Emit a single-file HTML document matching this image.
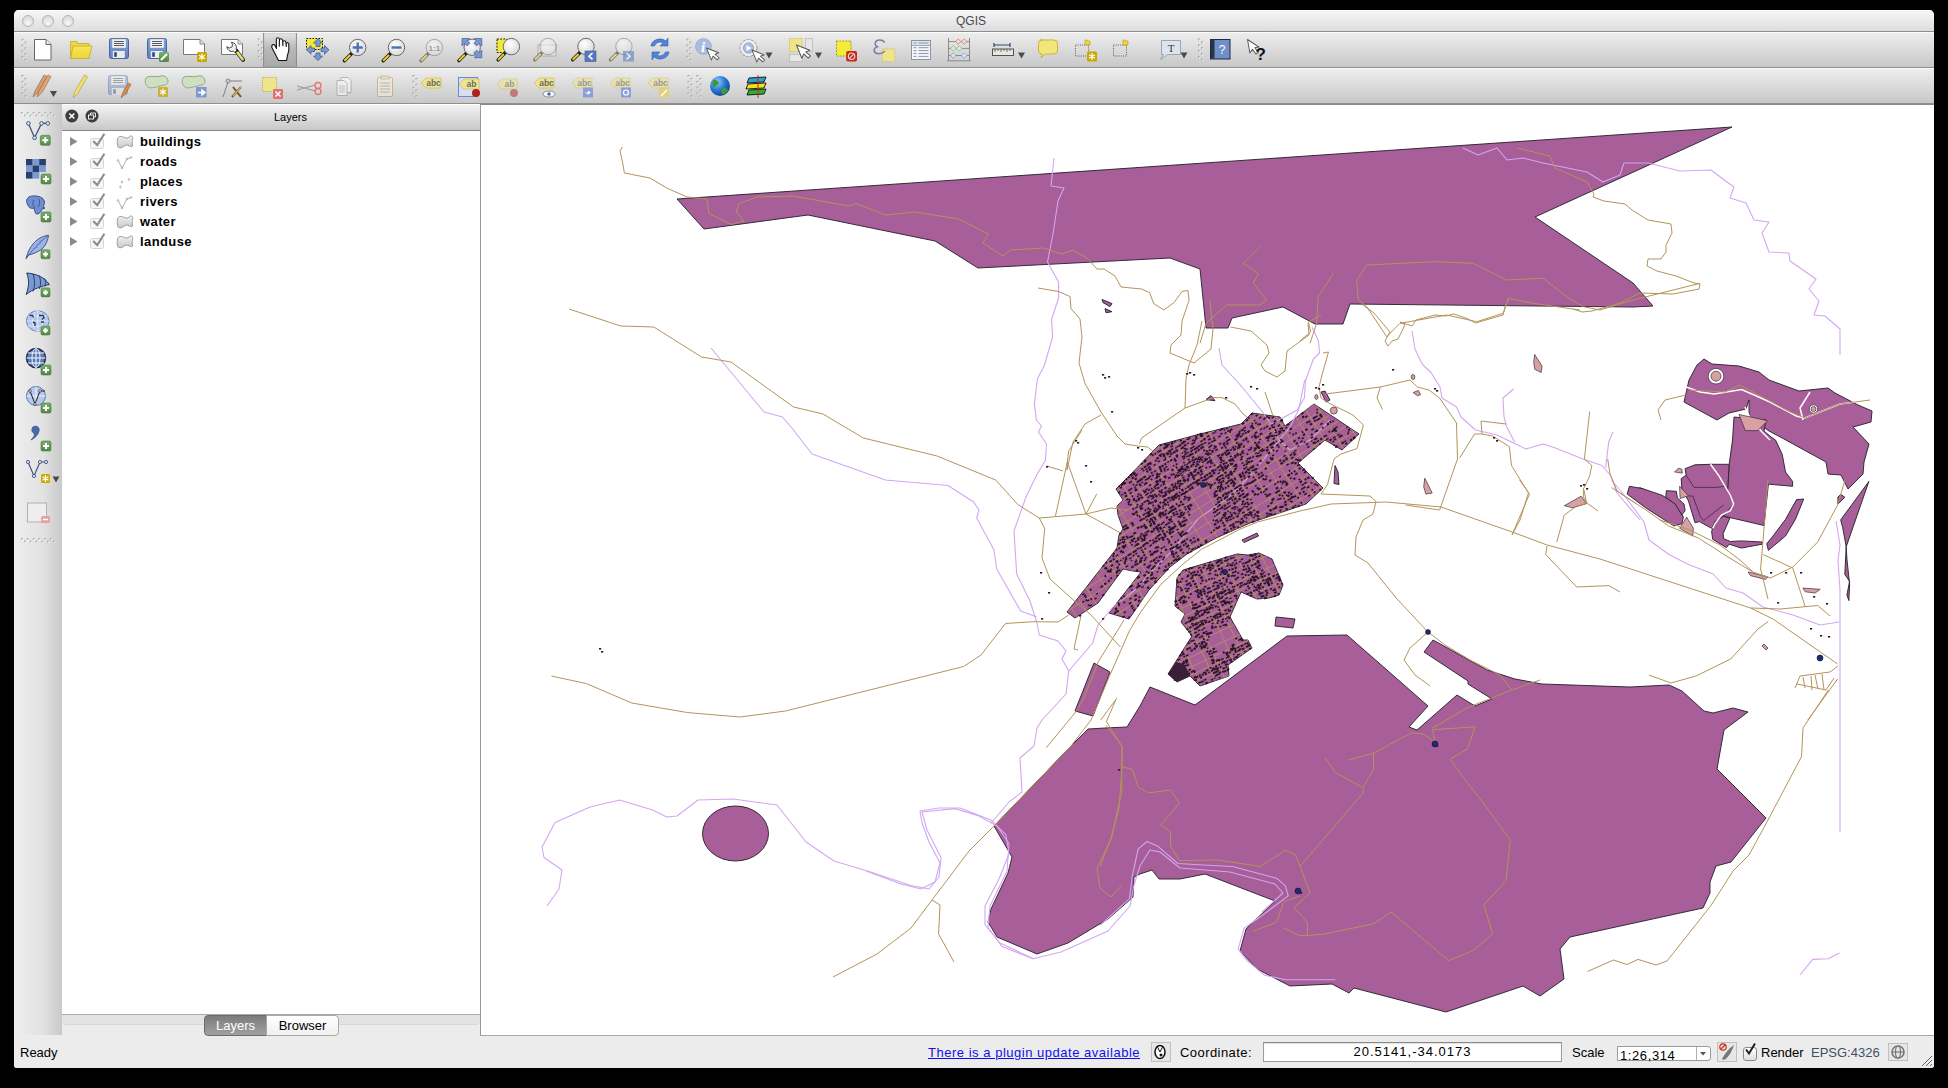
<!DOCTYPE html>
<html><head><meta charset="utf-8">
<style>
*{margin:0;padding:0;box-sizing:border-box}
html,body{width:1948px;height:1088px;background:#000;overflow:hidden;font-family:"Liberation Sans",sans-serif}
.a{position:absolute}
#win{position:absolute;left:14px;top:10px;width:1920px;height:1058px;background:#ececec;border-radius:5px 5px 3px 3px;overflow:hidden}
#title{left:0;top:0;width:1920px;height:22px;background:linear-gradient(#f7f7f7,#dddddd);border-bottom:1px solid #8e8e8e;box-shadow:inset 0 1px 0 #fff}
#title .t{left:0;width:1920px;top:4px;text-align:center;font-size:12px;color:#4a4a4a;padding-right:6px}
.tl{width:12px;height:12px;border-radius:50%;border:1px solid #b3b3b3;background:radial-gradient(circle at 50% 75%,#f7f7f7,#dcdcdc 70%);top:5px}
.tb{left:0;width:1920px;height:36px;background:linear-gradient(#ededed,#c8c8c8);border-top:1px solid #fbfbfb;border-bottom:1px solid #8f8f8f}
#tb1{top:22px}
#tb2{top:58px}
#press{left:249px;top:23px;width:34px;height:34px;background:linear-gradient(#e4e4e4,#b9b9b9 45%,#a9a9a9);box-shadow:inset 1px 0 1px #8a8a8a,inset -1px 0 1px #8a8a8a}
#ltb{left:0;top:94px;width:48px;height:931px;background:linear-gradient(90deg,#eeeeee,#e2e2e2 60%,#c9c9c9)}
#lhdr{left:48px;top:94px;width:419px;height:27px;background:linear-gradient(#f2f2f2,#c8c8c8);border-top:1px solid #fff;border-bottom:1px solid #878787}
#lhdr .t{left:0;width:419px;top:6px;text-align:center;font-size:11px;color:#000;padding-left:38px}
#llist{left:48px;top:121px;width:418px;height:884px;background:#fff;border-bottom:1px solid #ababab}
#ltabbar{left:48px;top:1005px;width:418px;height:10px;background:#e3e3e3;border-radius:0 0 4px 4px;border-bottom:1px solid #d8d8d8}
#map{left:466px;top:94px;width:1454px;height:932px;background:#fff;border-left:1px solid #9a9a9a;border-top:1px solid #8a8a8a;border-bottom:1px solid #a8a8a8}
#status{left:0;top:1026px;width:1920px;height:32px;background:#ececec}
.tx{font-size:13px;font-weight:bold;color:#000;letter-spacing:0.4px;left:125px;margin-top:1px;margin-left:1px}
.st{font-size:13px;color:#000;top:1035px}
.tab{top:1005px;height:21px;font-size:13px;text-align:center;padding-top:1.5px}

</style></head><body>
<div id="win">
  <div id="title" class="a">
    <div class="a tl" style="left:8px"></div>
    <div class="a tl" style="left:28px"></div>
    <div class="a tl" style="left:48px"></div>
    <div class="a t">QGIS</div>
  </div>
  <div id="tb1" class="a tb"></div>
  <div id="tb2" class="a tb"></div>
  <div id="press" class="a"></div>
  <div id="ltb" class="a"></div>
  <div id="lhdr" class="a"><div class="a t">Layers</div></div>
  <div id="llist" class="a">
    <div class="a tx" style="top:2px;left:77px">buildings</div>
    <div class="a tx" style="top:22px;left:77px">roads</div>
    <div class="a tx" style="top:42px;left:77px">places</div>
    <div class="a tx" style="top:62px;left:77px">rivers</div>
    <div class="a tx" style="top:82px;left:77px">water</div>
    <div class="a tx" style="top:102px;left:77px">landuse</div>
  </div>
  <div id="ltabbar" class="a"></div>
  <div class="a tab" style="left:190px;width:63px;background:linear-gradient(#7c7c7c,#a0a0a0);color:#fff;border:1px solid #6a6a6a;border-radius:4px 0 0 4px;top:1005px">Layers</div>
  <div class="a tab" style="left:252px;width:73px;background:linear-gradient(#ffffff,#f0f0f0);color:#000;border:1px solid #a8a8a8;border-radius:0 4px 4px 0;top:1005px">Browser</div>
  <div id="map" class="a"></div>
  <div id="status" class="a"></div>
  <div class="a st" style="left:6px">Ready</div>
  <div class="a st" style="left:914px;color:#1010ee;text-decoration:underline;letter-spacing:0.52px">There is a plugin update available</div>
  <div class="a" style="left:1137px;top:1032px;width:20px;height:20px;border:1px solid #c0c0c0;background:#e6e6e6"></div>
  <div class="a st" style="left:1166px;letter-spacing:0.44px">Coordinate:</div>
  <div class="a" style="left:1249px;top:1032px;width:299px;height:20px;border:1px solid #9a9a9a;border-top-color:#888;background:#fff;box-shadow:inset 0 1px 1px rgba(0,0,0,.12)"></div>
  <div class="a st" style="left:1249px;width:299px;text-align:center;letter-spacing:1px;top:1034px">20.5141,-34.0173</div>
  <div class="a st" style="left:1558px">Scale</div>
  <div class="a" style="left:1603px;top:1036px;width:94px;height:15px;border:1px solid #9a9a9a;border-radius:0 3px 3px 0;background:#fff"></div>
  <div class="a" style="left:1682px;top:1037px;width:1px;height:13px;background:#b0b0b0"></div>
  <div class="a st" style="left:1606px;top:1038px;letter-spacing:0.6px">1:26,314</div>
  <div class="a" style="left:1703px;top:1032px;width:20px;height:20px;border:1px solid #c0c0c0;background:#e6e6e6"></div>
  <div class="a" style="left:1729px;top:1037px;width:14px;height:14px;border:1px solid #8a8a8a;border-radius:3px;background:linear-gradient(#fff,#e0e0e0)"></div>
  <div class="a st" style="left:1747px">Render</div>
  <div class="a st" style="left:1797px;color:#3e5068">EPSG:4326</div>
  <div class="a" style="left:1874px;top:1033px;width:20px;height:18px;border:1px solid #c0c0c0;background:#e6e6e6"></div>
</div>

<svg class="a" style="left:0;top:0" width="1948" height="1088" viewBox="0 0 1948 1088">
<defs><clipPath id="mc"><rect x="481" y="105" width="1452" height="930"/></clipPath></defs>
<g clip-path="url(#mc)">
<g fill="#a75e99" stroke="#2b2530" stroke-width="0.95" stroke-linejoin="round"><polygon points="677,199 1732,127 1535,217 1633,283 1653,306 1633,307 1350,304 1343,324 1315,324 1283,307 1232,318 1228,328 1206,328 1200,269 1170,258 978,268 935,241 808,215 704,229"/><polygon points="1287,636 1347,635 1428,706 1409,727 1417,730 1457,695 1475,706 1492,699 1468,684 1468,681 1424,652 1433,640 1460,655 1487,670 1515,679 1542,684 1630,687 1669,685 1682,691 1704,711 1713,713 1733,708 1748,712 1724,730 1717,769 1766,818 1731,862 1716,866 1710,882 1710,893 1703,908 1570,937 1560,949 1564,979 1540,996 1523,986 1446,1012 1354,988 1349,993 1332,984 1290,986 1257,969 1240,951 1246,929 1275,901 1205,874 1180,879 1159,879 1152,870 1140,874 1134,877 1133,897 1108,919 1068,943 1037,954 997,937 988,922 991,909 1008,873 1012,857 994,826 1071,746 1088,729 1105,728 1127,727 1140,706 1150,687 1195,705"/><polygon points="1067,612 1075,618 1098,603 1123,569 1133,571 1141,572 1109,613 1129,619 1149,590 1170,567 1187,554 1216,538 1250,523 1306,504 1323,488 1298,463 1325,440 1342,450 1359,434 1314,404 1285,426 1280,417 1252,413 1241,424 1200,434 1159,445 1131,474 1128,477 1116,489 1123,500 1117,506 1118,515 1123,529 1119,535 1117,548"/><polygon points="1183,570 1237,554 1248,555 1259,553 1272,559 1283,585 1279,595 1269,598 1257,599 1241,592 1230,617 1243,640 1248,640 1252,648 1228,665 1229,676 1200,686 1190,676 1177,682 1168,674 1192,636 1181,622 1185,614 1175,606 1177,578"/><polygon points="1276,617 1295,619 1293,628 1275,626"/><polygon points="1094,663 1110,672 1093,716 1075,711"/><polygon points="1102,299.5 1112,303.6 1110,306.6 1103,302.6"/><polygon points="1105,308.6 1112,311.7 1106,312.7"/><polygon points="1206,399.6 1211,395.6 1215,400.7"/><polygon points="1335,465.5 1338,471.9 1339,484.5 1334,483.5"/><polygon points="1628,493 1640,487.7 1650,492 1645,503.6"/><polygon points="1242,540 1257,533 1258.5,536 1244,542.5"/><polygon points="1321,392 1325,391 1330,400 1326,402"/><polygon points="1704,359 1712,364 1739,366 1759,372 1769,380 1799,391 1828,388 1835,393 1858,405 1872,411 1871,422 1853,427 1869,444 1864,462 1863,474 1848,489 1841,475 1828,474 1826,462 1784,439 1769,431 1749,417 1749,400 1746,409 1729,413 1717,420 1684,402 1689,380 1697,365"/><polygon points="1734,417 1766,420 1764,431 1771,437 1775.5,440 1782.2,454.3 1785.5,472 1792.6,481.4 1792.6,486.3 1768.4,484.1 1764,525.5 1723.7,516.1 1727.6,490.2 1729.2,464.3 1732.5,440"/><polygon points="1629.4,486.3 1642.1,488.5 1661.9,495.2 1676.3,504 1683.4,517.2 1681.8,523.8 1674.1,526 1661.9,518.3 1646.5,508.4 1627.2,494.1"/><polygon points="1666.3,490.7 1676.3,491.3 1677.4,497.9 1684,504 1685.1,510.6 1681.8,515 1675.2,504 1665.8,497.4"/><polygon points="1685.1,468.7 1695,464.8 1710.5,464.3 1729.2,464.3 1727.6,490.2 1733.6,504 1723.7,516.1 1716,520.5 1711.6,528.3 1699.4,521.6 1695,522.7 1688.4,500.7 1681.8,488.5 1681.2,478.6 1686.2,475.3"/><polygon points="1723.7,516.1 1729.8,518.3 1723.1,533.8 1723.7,538.7 1730.3,541.5 1741.3,540.9 1762.3,542 1762.3,544.2 1741.3,548.1 1729.2,544.2 1726.5,547.6 1712.7,539.3 1711.6,531.6 1714.9,521.6"/><polygon points="1803.7,499 1796.5,499.6 1785.5,519.4 1772.2,537.1 1766.7,543.7 1768.4,550.3 1785.5,536 1795.4,519.4"/><polygon points="1868.9,481.4 1840.7,519.9 1842.7,527.5 1846.2,546.8"/><polygon points="1846.2,546.8 1844.8,574.4 1849.6,581.3 1846.9,595 1848.9,600.6 1849.6,584 1847,560"/><polygon points="1840.7,494.4 1844.8,497.2 1837.9,504.1 1838,497"/><ellipse cx="735.5" cy="833.5" rx="33" ry="27.5"/></g>
<g fill="none" stroke="#fff" stroke-width="1.5"><path d="M1685.6,386.8 L1700,392 L1714.1,394.1 L1741.7,389.5 L1770,402 L1796.8,416.2 L1805,418 L1840,404 L1870,400"/><path d="M1810,392 L1800,408 L1803,420"/><path d="M1710.5,464.3 L1719.3,476.4 L1730.3,495.2 L1733.6,504 L1730.3,510.6 L1721.5,515 L1714.9,523.8 L1712.7,528.3"/><path d="M1686,405 L1692,412 L1700,420"/><path d="M1745,407 L1750,418 L1762,432 L1770,440"/></g><g fill="none" stroke="#3a2e3c" stroke-width="0.8"><path d="M1686.2,475.3 L1694,487.4 L1717,487.4 L1724.2,486.3"/><path d="M1688.4,496 L1692.8,496 L1700.5,517 L1703.8,520.5 L1723.7,505"/></g>
<g fill="#d9a0a4" stroke="#3a2e3c" stroke-width="0.7"><polygon points="1534.7,354.5 1542.1,366.1 1541.1,372.5 1534.7,369.3 1533.7,361.9"/><polygon points="1424.8,478.2 1432.2,493 1425.8,494.1 1423.7,486.7"/><polygon points="1413.1,392.6 1418.4,390.4 1420.5,394.7 1417.4,395.7"/><polygon points="1564.3,505.7 1581.2,496.2 1586.5,503.6 1572.8,507.8"/><polygon points="1739,414.5 1767.6,420.7 1757.7,430.6 1745.3,430.6"/><polygon points="1679.6,486.3 1688.4,495.7 1680.1,498.5"/><polygon points="1686.7,517.2 1693.4,528.3 1692.8,536 1679.6,528.3"/><polygon points="1674.6,472 1678.5,468.1 1681.8,469.2 1682.3,473.1"/><polygon points="1748.1,571.9 1768,576.9 1765.5,579.4 1750.6,575.7"/><polygon points="1802.8,588.1 1820.2,589.3 1815.2,593 1805.3,591.8"/><polygon points="1764,644 1768,648 1766,650 1762,646"/><circle cx="1333.8" cy="410.5" r="3.5"/><ellipse cx="1413" cy="377" rx="1.8" ry="2.5"/><ellipse cx="1316.4" cy="397" rx="1.6" ry="2.4"/><circle cx="1716" cy="376.2" r="7.8" fill="#fff"/><circle cx="1716" cy="376.2" r="5"/><circle cx="1813.5" cy="409" r="4.2" fill="#fff"/><circle cx="1813.5" cy="409" r="2.5"/></g>
<g fill="none" stroke="#d3a6f2" stroke-width="1.1" stroke-linejoin="round"><polyline points="1463,148 1478,155 1497,148 1507,160 1523,158 1543,163 1587,172 1603,182 1620,175 1624,163 1648,163 1680,171 1711,170 1727,182 1734,187 1730,198 1746,203 1754,220 1769,222 1762,233 1769,252 1789,253 1790,261 1816,279 1809,289 1819,301 1814,315 1825,316 1840,329 1840,355"/><polyline points="1054,158 1051,186 1064,188 1058,201 1053,234 1047.5,262 1058.6,282 1058.6,298 1051.6,319 1052.6,337 1044.5,365 1037.4,379 1034.4,404 1036.4,420 1041.5,426 1038.4,432 1046.5,444 1045.5,460 1036.7,475 1026,497 1014,531 1016.7,574 1030,601 1036.7,622 1039.3,635 1058,641 1066,651 1062,659 1068.7,671 1066,694 1042,720 1037,728 1034,746 1020,758 1022,792 1009,802 991,823"/><polyline points="711,348 764,412 782.5,417 793.5,430 812,454 848.6,467 885.4,480 948,485.5 973.6,502 979,510 976.7,518 994,550 996.7,569 1020.7,611 1036.7,617"/><polyline points="547,906 559,889 562,870 544,857.5 542,847 555,822.6 590,807 619.5,800 652.7,810 666.7,817 677,816 698,800 733,799 777,805 806,842 834,861 869,871.5 911,885.5 929,889 939,877 941,857.5 927,830 922,812 955,808.6 978,815.6 997,826 1009,843.5 1007,871.5 990,906 988,927 1002,946.6 1033,958.8 1061,952 1108,931 1130,906 1134,885 1140,866"/><polyline points="866,871 901,884 921,889 935,882 940,863 929,842 922,823 920,811 939,808 960,808 991,820 1006,835 1009,854 999,879 985,906 985,925 1000,943 1034,959"/><polyline points="1412,331 1415,349 1422,364 1431,372.5 1440,387 1442,398 1456.5,407 1461,417 1475.5,430 1497,435 1511.5,442 1526,449 1543,444 1554,447.5 1583,459 1602,465.5 1611,476 1617,493 1640,520"/><polyline points="1611.5,480 1624,495 1644,522 1649,540 1669,554.5 1688.5,564.5 1713,574 1726,588 1743,593 1763,607 1793,615 1820,625 1839,622"/><polyline points="1219,348 1222,365 1239,383.5 1261,410 1271,424 1279,440 1290,450 1310,440 1330,420"/><polyline points="1312,327 1318.5,341 1319.5,353 1313.4,359 1305.4,381 1304.4,398 1297.3,410 1270,425"/><polyline points="1513.6,389 1503,398 1504,417 1507,427.5 1514.6,442"/><polyline points="1613,432 1608.7,442 1605.6,467.6"/><polyline points="1800,975 1812.6,959.4 1828.4,958.8 1839.5,953"/><polyline points="1836,521 1840,545 1838,560 1840,590 1840,832"/><polyline points="1100,925.3 1129.4,898.8 1132.4,875.3 1138.2,848.8 1147,841.5 1157.4,845.9 1177.9,863.5 1202.9,865 1232.4,866.5 1276.5,878.2 1285.3,885.6 1288.2,895.9 1264.7,913.5 1244.1,928.2 1238.2,948.8 1247.1,960.6 1264.7,975.3 1285.3,979.7 1335.3,979.7"/><polyline points="1140,866 1150,850 1160,852 1180,868 1230,872 1275,884 1283,893 1262,912"/><polyline points="1068.7,671 1092.7,643 1098,625 1113.6,606.5 1135,590 1154.7,568.2 1172.4,550.6 1198.8,518.2 1228.3,497.6 1245.9,480 1263.6,459.4 1290,427.1 1298.8,409.4 1304.7,380"/></g>
<g fill="none" stroke="#b39459" stroke-width="1" stroke-linejoin="round"><polyline points="622.5,147 620,151 622.5,162 624.4,173 650,178 666.7,188 687,197 707,199 709,213.5 731,224.5 744,221 736.5,212 738.4,204 756.7,197 793.5,196 848.6,206 856,203.5 885.4,215 914.8,212 959,219 988.4,234 982.8,243 1003,256 1010.4,250 1043.5,248 1062,254 1072.8,250 1087,258 1097,269 1104,269 1115,276 1121,287 1141.6,289 1149.6,292.5 1153.7,303.6 1163.8,310 1174,302.6 1182,291.5 1188,290.4 1189,300.6 1182,321 1181,335 1171,345 1170,353 1194,363 1211,349 1213,329 1212,321 1210,300"/><polyline points="1356.7,280 1366.7,265 1433.3,261.7 1473.3,263.3 1506.7,280 1543.3,278.3 1566.7,296.7 1583.3,306.7 1600,310 1633.3,300 1700,283.3"/><polyline points="1356.7,280 1358.3,300 1366.7,306.7 1386.7,336.7 1400,323.3 1446.7,315 1476.7,321.7 1503.3,313.3 1508.3,298.3 1533.3,303.3 1580,310"/><polyline points="1260,246.7 1243.3,263.3 1258.3,273.3 1253.3,283.3 1266.7,300 1260,305 1226.7,305 1206,323.3 1200,343.3"/><polyline points="1333.3,273.3 1318.3,296.7 1316.7,323.3 1310,343.3"/><polyline points="1517,148 1549.9,156 1552,161 1555,168 1587,182 1594,194 1593,197 1604,201 1625,204 1632,210 1648,220 1671,224 1672,233 1666,245 1666,252 1661,259 1648,259 1647,266 1657,271 1676,276 1694,283 1700,284 1699,289 1673,294 1640,293 1620,303 1592,311 1582,312 1573,309"/><polyline points="1428,632 1445,645 1470,660 1500,675 1512,690"/><polyline points="1428,632 1410,648 1404,660 1415,675 1430,686"/><polyline points="1795,688 1800,676 1830,672 1838,666"/><polyline points="1797,684 1826,690 1834,678"/><polyline points="1803,677 1805,688"/><polyline points="1811,676 1812,690"/><polyline points="1815,675 1818,689"/><polyline points="1822,674 1824,690"/><polyline points="569,309 620.7,326 653.8,327 701.6,357 731,362 793.5,407 823,414 863.4,438 937,456 995.7,480 1018,504.7 1039.3,518 1044.7,528.7 1042,558 1050,579 1074,600.7 1090,614 1116.7,643 1120.5,647"/><polyline points="551.4,676 586.4,683.6 631.8,703 687.7,712.6 740,717 785.5,711 963.6,666.5 981,655 1005.5,623.5 1033.4,621.7 1058,622 1068.7,615"/><polyline points="833,977 877,954 911,928 932,900 969,851 994,826 1071,746 1091,720 1109.4,676.3 1129.7,630.3 1140.7,612 1160.9,584.4 1183,564.1 1201.4,549.4 1240,529.2 1257.4,522 1300,511 1331,504 1386,502 1441,507 1515,533 1547,545 1600,559 1750.6,608 1773,619 1837.6,664"/><polyline points="932,900 940,905 938.6,934 954,962"/><polyline points="1046.4,747.7 1075.6,712 1083,700 1091,680 1098.4,661.6 1124,620"/><polyline points="1115.7,700 1106.4,721.6 1121.8,746 1121.8,792 1111,838.6 1097,868 1100,888 1111,897 1122,885"/><polyline points="1100.7,720 1117,698"/><polyline points="1038,288 1058.6,291.5 1070,296.5 1071,308.6 1080,319 1082,337 1079,363 1085,383.5 1101,412 1117,436 1125,444 1137.5,446 1147.6,447 1154,452 1160,445"/><polyline points="1202,321 1197,345 1189,365 1186,379 1185,408 1214,397.6 1222,397.6 1235,404 1243,414 1247,417"/><polyline points="1185,408 1141.6,438 1139.5,444"/><polyline points="1101,415 1085,424 1073,442 1067,470 1067.3,462 1068.7,451 1082,430"/><polyline points="1039.3,518 1055.3,516.7 1086,514 1111.3,508 1127.3,510"/><polyline points="1055.3,516.7 1067.3,462"/><polyline points="1067.3,462 1086,514 1127.3,536.7"/><polyline points="1086,514 1096.7,494"/><polyline points="1047,466 1063,471"/><polyline points="1080.7,617 1074,649 1078,650"/><polyline points="1230.5,327 1251,331 1267,345 1269,353 1261,365 1265,371 1277,377 1285,371 1287,351 1309,335 1308,323"/><polyline points="1265,392 1271,410 1273,416"/><polyline points="1363,305 1374,313 1390,332 1385,341 1388,346 1392,341 1398,339 1405,325 1400,322 1412,326 1416,320 1435,315 1446,316 1454,314 1467,318.5 1475.5,323 1503,315 1505,307 1509,298"/><polyline points="1300,341 1310.6,332 1308.5,322 1321,315"/><polyline points="1325.4,394 1380.4,387 1410,380 1417.4,387 1429,390 1439.6,398 1456.5,423 1457.5,459 1439.6,510 1405.7,505"/><polyline points="1380.4,387 1377,398 1382.5,409.5"/><polyline points="1459.7,458 1474.5,434 1482,434 1481,421 1506,424"/><polyline points="1482,434 1492.4,436 1509.3,446.5 1511.5,465.5 1528.4,493 1520,520 1512,535"/><polyline points="1589.7,411.6 1584.4,459 1591.8,465.5 1589.7,476 1583.4,489 1583.4,497 1587.6,503.6 1598,511"/><polyline points="1607.7,459 1610,474 1617,491 1636,503.6"/><polyline points="1323,353 1328.5,352 1322,375 1319,387 1321,398 1330.7,404 1353,415 1363.4,425 1357,448.6 1341,454 1334,459 1327.5,484.5 1321,494 1370,496 1376,501.5 1373,514 1363,520 1356,537 1355,555 1368,563 1397,599 1428,632"/><polyline points="1512,535 1529.5,494 1519.6,480"/><polyline points="1556.8,542 1564.3,515 1576.7,506 1586.6,503.6 1584,490"/><polyline points="1547,546 1545.7,554.5 1576.7,587 1609,585.6 1620,592"/><polyline points="1611.5,487.5 1646,510 1668.6,526 1698.4,538 1728,557 1753,572 1770.5,578 1792.8,567 1817.7,542 1837.6,505 1845,480"/><polyline points="1768,480 1760.6,569 1768,599"/><polyline points="1763,554.5 1792.8,568 1805.3,607"/><polyline points="1750.6,608 1780.4,609 1817.7,605.5 1830,616"/><polyline points="1648.8,675 1671,683 1696,676 1730.7,659 1758,629 1768,621.6"/><polyline points="1807.8,720 1837.6,679"/><polyline points="1828.4,690 1803,728 1801.5,756.6 1768,820 1749,855 1733,871 1711,905.5 1686,937 1667,961 1656,965 1638,959.4 1627,964.5 1613.5,960 1587.5,971.5"/><polyline points="1690,390 1725,392 1740,385 1790,412 1805,418 1840,404 1870,400"/><polyline points="1661,420 1658,410 1665,400 1686,395"/><polyline points="1660,520 1690,530 1720,545 1740,560 1753,572"/><polyline points="1105.9,725.3 1122,745.9 1122,766.5 1119.1,807.6 1111.8,837.1 1100,866.5"/><polyline points="1120.6,766.5 1132.4,769.4 1138.2,787.1 1148.5,792.9 1170.6,790 1179.4,803.2 1160.3,825.3 1170.6,831.2 1170.6,845.9 1179.4,860.6 1217.6,860 1260.3,866.5 1285.3,850.3 1295.6,854.7 1300,866.5 1310.3,892.9 1294.1,907.6 1307.4,922.4 1307.4,935.6 1323.5,934.1 1373.5,923.8 1391.2,912.1 1448.5,960.6 1473.5,950.3 1492.6,934.1 1483.8,904.7 1505.9,881.2 1510.3,840 1482.4,801.8 1466.2,781.2 1450,759.1 1467.6,748.8 1475,726.8 1432.4,729.7 1435.3,742.9"/><polyline points="1300,866.5 1363.2,792.9 1363.2,787.1 1373.5,769.4 1373.5,753.2 1411.8,732.6 1423.5,734.1 1432.4,740"/><polyline points="1348.5,760 1373.5,753.2"/><polyline points="1325,757.6 1335.3,772.4 1361.8,787.1"/><polyline points="1432.4,728.2 1467.6,707.6 1511.8,690 1540,680"/><polyline points="1252.9,931.2 1276.5,922.4 1283.8,901.8 1300,895.9"/><polyline points="1283.8,928.2 1300,935.6 1307.4,935.6"/></g>
<clipPath id="tn"><polygon points="1067.0,612.0 1075.0,618.0 1098.0,603.0 1123.0,569.0 1133.0,571.0 1141.0,572.0 1109.0,613.0 1129.0,619.0 1149.0,590.0 1170.0,567.0 1187.0,554.0 1216.0,538.0 1250.0,523.0 1306.0,504.0 1323.0,488.0 1298.0,463.0 1325.0,440.0 1342.0,450.0 1359.0,434.0 1314.0,404.0 1285.0,426.0 1280.0,417.0 1252.0,413.0 1241.0,424.0 1200.0,434.0 1159.0,445.0 1131.0,474.0 1128.0,477.0 1116.0,489.0 1123.0,500.0 1117.0,506.0 1118.0,515.0 1123.0,529.0 1119.0,535.0 1117.0,548.0"/></clipPath><g clip-path="url(#tn)"><path d="M815.8,427.0L1311.1,117.5M822.3,437.3L1317.6,127.9M828.7,447.5L1324.0,138.1M834.2,456.3L1329.5,146.8M840.3,466.2L1335.6,156.7M847.4,477.4L1342.6,167.9M852.2,485.1L1347.5,175.7M857.9,494.2L1353.1,184.8M864.7,505.1L1360.0,195.7M871.9,516.7L1367.2,207.3M877.4,525.5L1372.7,216.1M884.2,536.3L1379.5,226.9M891.4,547.8L1386.6,238.3M897.8,558.1L1393.1,248.6M903.0,566.5L1398.3,257.0M908.0,574.4L1403.3,265.0M914.7,585.2L1410.0,275.7M919.2,592.4L1414.5,282.9M924.6,601.0L1419.9,291.6M929.3,608.5L1424.5,299.0M935.2,617.9L1430.4,308.4M940.6,626.7L1435.9,317.2M945.7,634.8L1441.0,325.3M950.5,642.4L1445.7,332.9M954.8,649.4L1450.1,339.9M959.9,657.5L1455.2,348.1M964.4,664.7L1459.7,355.2M969.1,672.2L1464.4,362.7M975.3,682.1L1470.5,372.6M979.8,689.4L1475.1,379.9M984.5,696.8L1479.8,387.4M990.8,707.0L1486.1,397.5M995.6,714.6L1490.9,405.2M1000.2,722.0L1495.5,412.6M1006.7,732.4L1502.0,422.9M1011.3,739.7L1506.6,430.3M1017.7,750.0L1513.0,440.5M1024.8,761.3L1520.0,451.8M1031.7,772.3L1526.9,462.8M1036.7,780.4L1532.0,470.9M1042.7,790.0L1537.9,480.5M1048.6,799.5L1543.9,490.0M1055.2,810.0L1550.5,500.6M1062.3,821.4L1557.6,511.9M1068.8,831.8L1564.1,522.3M1073.6,839.4L1568.8,529.9M1079.4,848.7L1574.7,539.3M1084.5,856.9L1579.8,547.4M1089.2,864.4L1584.5,554.9M1094.4,872.7L1589.7,563.2M1099.2,880.4L1594.5,571.0M1105.0,889.8L1600.3,580.3M1110.4,898.3L1605.7,588.8M1114.9,905.6L1610.2,596.1M1120.1,913.8L1615.3,604.3M1124.8,921.3L1620.0,611.9M821.6,411.8L1131.0,907.0M832.1,405.2L1141.5,900.5M843.3,398.2L1152.8,893.4M856.2,390.1L1165.7,885.4M865.7,384.2L1175.2,879.4M878.7,376.1L1188.2,871.3M890.5,368.7L1200.0,863.9M904.0,360.3L1213.5,855.5M913.0,354.6L1222.5,849.9M922.4,348.8L1231.8,844.1M932.7,342.3L1242.2,837.6M946.8,333.5L1256.3,828.8M960.2,325.2L1269.6,820.4M969.3,319.5L1278.7,814.7M982.6,311.2L1292.1,806.4M991.7,305.5L1301.2,800.7M1005.0,297.1L1314.5,792.4M1015.4,290.7L1324.9,785.9M1026.7,283.6L1336.2,778.9M1037.4,276.9L1346.9,772.2M1049.8,269.1L1359.3,764.4M1062.2,261.4L1371.6,756.7M1071.1,255.8L1380.6,751.1M1082.2,248.9L1391.6,744.2M1091.0,243.4L1400.5,738.7M1104.3,235.1L1413.8,730.3M1117.4,226.9L1426.9,722.2M1126.9,221.0L1436.4,716.2M1137.2,214.5L1446.7,709.8M1146.3,208.8L1455.8,704.1M1160.4,200.1L1469.9,695.3M1170.8,193.5L1480.3,688.8M1180.4,187.5L1489.9,682.8M1195.0,178.5L1504.4,673.7M1205.1,172.1L1514.6,667.4M1216.1,165.2L1525.6,660.5M1230.0,156.6L1539.5,651.8M1240.5,150.0L1550.0,645.3M1250.0,144.1L1559.5,639.3M1261.5,136.9L1571.0,632.1M1274.6,128.7L1584.1,623.9M1284.7,122.4L1594.2,617.6M1294.2,116.5L1603.6,611.7M1305.5,109.4L1615.0,604.6M1316.4,102.5L1625.9,597.8" fill="none" stroke="#b39459" stroke-width="0.9"/></g><path fill="#2b1629" d="M1149.3 454.3l2.4 -1.5l0.9 1.4l-2.4 1.5zM1159.3 445.2l1.7 -1.1l0.9 1.4l-1.7 1.1zM1165.9 444.6l2.0 -1.2l0.9 1.4l-2.0 1.2zM1120.3 484.3l2.4 -1.5l0.8 1.2l-2.4 1.5zM1127.7 476.9l1.5 -0.9l0.9 1.5l-1.5 0.9zM1129.6 474.5l2.1 -1.3l0.9 1.4l-2.1 1.3zM1132.8 473.7l2.4 -1.5l1.0 1.7l-2.4 1.5zM1134.5 475.5l1.6 -1.0l1.0 1.6l-1.6 1.0zM1140.6 468.8l2.2 -1.4l0.8 1.3l-2.2 1.4zM1143.6 466.7l1.9 -1.2l1.0 1.6l-1.9 1.2zM1145.2 468.9l1.7 -1.1l0.9 1.5l-1.7 1.1zM1143.4 460.4l2.2 -1.4l0.9 1.4l-2.2 1.4zM1146.4 465.0l2.1 -1.3l0.9 1.4l-2.1 1.3zM1148.9 462.8l1.8 -1.1l1.0 1.6l-1.8 1.1zM1151.7 454.9l1.6 -1.0l0.9 1.4l-1.6 1.0zM1154.2 453.6l1.6 -1.0l0.8 1.3l-1.6 1.0zM1157.0 451.4l1.5 -0.9l1.0 1.6l-1.5 0.9zM1159.8 455.9l1.5 -0.9l0.8 1.3l-1.5 0.9zM1162.7 454.0l1.6 -1.0l0.9 1.5l-1.6 1.0zM1164.9 446.0l1.9 -1.2l0.8 1.3l-1.9 1.2zM1163.6 444.0l2.1 -1.3l1.0 1.6l-2.1 1.3zM1167.7 450.9l2.3 -1.4l0.9 1.5l-2.3 1.4zM1169.6 453.9l2.3 -1.4l0.9 1.4l-2.3 1.4zM1167.4 444.4l2.0 -1.2l0.9 1.4l-2.0 1.2zM1170.3 449.3l2.2 -1.4l0.9 1.5l-2.2 1.4zM1172.4 452.7l2.2 -1.4l0.7 1.1l-2.2 1.4zM1170.6 443.3l1.9 -1.2l1.1 1.7l-1.9 1.2zM1174.8 450.4l2.3 -1.5l0.8 1.2l-2.3 1.5zM1173.6 441.6l1.6 -1.0l0.8 1.3l-1.6 1.0zM1176.4 446.6l2.1 -1.3l0.7 1.2l-2.1 1.3zM1179.2 445.1l1.6 -1.0l0.7 1.1l-1.6 1.0zM1180.9 443.1l2.3 -1.5l1.0 1.6l-2.3 1.5zM1184.3 441.5l1.4 -0.9l0.7 1.2l-1.4 0.9zM1186.1 439.4l1.7 -1.1l0.7 1.2l-1.7 1.1zM1199.4 435.5l1.5 -0.9l0.9 1.5l-1.5 0.9zM1117.8 492.4l2.1 -1.3l0.8 1.3l-2.1 1.3zM1118.1 486.1l1.4 -0.9l0.8 1.3l-1.4 0.9zM1120.4 484.6l2.4 -1.5l1.0 1.6l-2.4 1.5zM1123.2 483.6l2.3 -1.5l0.8 1.4l-2.3 1.5zM1125.0 479.1l1.8 -1.1l0.9 1.5l-1.8 1.1zM1133.9 487.0l1.7 -1.1l0.8 1.2l-1.7 1.1zM1131.3 477.8l2.2 -1.3l1.0 1.6l-2.2 1.3zM1130.3 475.6l1.7 -1.0l0.8 1.3l-1.7 1.0zM1137.2 480.9l2.4 -1.5l1.1 1.7l-2.4 1.5zM1140.0 479.0l2.1 -1.3l1.1 1.7l-2.1 1.3zM1142.4 477.3l2.5 -1.6l0.8 1.2l-2.5 1.6zM1142.3 470.3l1.5 -1.0l1.0 1.5l-1.5 1.0zM1146.8 478.6l2.4 -1.5l0.8 1.3l-2.4 1.5zM1143.7 467.0l2.4 -1.5l0.7 1.2l-2.4 1.5zM1147.6 467.4l2.2 -1.4l1.1 1.7l-2.2 1.4zM1149.1 463.6l1.9 -1.2l1.0 1.6l-1.9 1.2zM1153.7 471.2l2.1 -1.3l0.7 1.2l-2.1 1.3zM1153.3 464.8l1.8 -1.1l0.9 1.5l-1.8 1.1zM1154.5 460.7l2.0 -1.3l0.7 1.2l-2.0 1.3zM1158.4 466.8l1.9 -1.2l1.0 1.6l-1.9 1.2zM1161.0 465.8l2.1 -1.3l1.1 1.7l-2.1 1.3zM1163.1 468.6l1.6 -1.0l0.9 1.4l-1.6 1.0zM1163.9 463.7l1.6 -1.0l1.1 1.7l-1.6 1.0zM1164.3 457.4l1.5 -0.9l0.8 1.2l-1.5 0.9zM1162.3 455.4l2.5 -1.6l0.9 1.4l-2.5 1.6zM1166.8 461.9l2.0 -1.2l0.8 1.2l-2.0 1.2zM1165.5 453.3l1.9 -1.2l1.0 1.6l-1.9 1.2zM1169.6 460.2l2.3 -1.4l0.9 1.5l-2.3 1.4zM1170.1 453.5l1.5 -0.9l0.9 1.4l-1.5 0.9zM1168.6 451.6l1.9 -1.2l1.0 1.6l-1.9 1.2zM1173.2 458.9l1.8 -1.1l1.0 1.7l-1.8 1.1zM1174.2 460.5l1.8 -1.1l1.1 1.7l-1.8 1.1zM1172.7 452.1l2.1 -1.3l1.1 1.7l-2.1 1.3zM1175.9 456.6l1.6 -1.0l0.9 1.4l-1.6 1.0zM1175.8 450.5l1.5 -0.9l1.1 1.7l-1.5 0.9zM1181.2 452.9l1.6 -1.0l0.7 1.2l-1.6 1.0zM1183.0 456.3l2.1 -1.3l0.8 1.3l-2.1 1.3zM1181.1 447.5l2.2 -1.4l0.9 1.4l-2.2 1.4zM1183.7 451.2l1.7 -1.1l1.1 1.7l-1.7 1.1zM1183.5 445.2l2.2 -1.4l1.0 1.6l-2.2 1.4zM1182.1 442.4l1.8 -1.1l0.9 1.4l-1.8 1.1zM1186.8 443.1l1.4 -0.9l0.9 1.5l-1.4 0.9zM1189.8 448.1l1.6 -1.0l0.9 1.5l-1.6 1.0zM1190.6 450.3l2.3 -1.4l0.8 1.4l-2.3 1.4zM1191.7 440.2l2.1 -1.3l0.8 1.3l-2.1 1.3zM1196.4 447.0l1.5 -0.9l0.7 1.1l-1.5 0.9zM1194.6 438.7l2.5 -1.5l0.8 1.2l-2.5 1.5zM1196.6 434.5l1.4 -0.9l0.8 1.3l-1.4 0.9zM1200.0 441.2l2.4 -1.5l0.9 1.4l-2.4 1.5zM1200.3 434.7l1.8 -1.1l1.0 1.5l-1.8 1.1zM1203.2 439.1l1.6 -1.0l1.0 1.6l-1.6 1.0zM1212.6 437.7l1.6 -1.0l0.9 1.5l-1.6 1.0zM1222.4 428.5l1.8 -1.1l0.7 1.1l-1.8 1.1zM1223.6 429.8l1.4 -0.9l0.8 1.2l-1.4 0.9zM1250.3 413.9l2.3 -1.4l1.0 1.6l-2.3 1.4zM1127.3 503.8l1.6 -1.0l1.1 1.7l-1.6 1.0zM1124.1 492.6l1.5 -0.9l1.1 1.7l-1.5 0.9zM1128.3 499.3l1.4 -0.9l1.1 1.7l-1.4 0.9zM1132.6 500.3l2.0 -1.3l0.8 1.2l-2.0 1.3zM1129.6 488.9l2.1 -1.3l0.8 1.3l-2.1 1.3zM1134.2 488.9l1.6 -1.0l0.8 1.3l-1.6 1.0zM1137.4 494.1l1.7 -1.0l0.8 1.3l-1.7 1.0zM1135.2 485.0l1.9 -1.2l0.8 1.3l-1.9 1.2zM1139.3 485.6l1.7 -1.1l0.8 1.2l-1.7 1.1zM1142.5 490.6l1.5 -0.9l0.7 1.2l-1.5 0.9zM1145.1 489.5l2.5 -1.6l0.7 1.1l-2.5 1.6zM1144.9 482.7l1.6 -1.0l1.1 1.7l-1.6 1.0zM1146.3 478.6l2.0 -1.2l0.7 1.2l-2.0 1.2zM1150.3 479.3l1.6 -1.0l0.8 1.3l-1.6 1.0zM1148.2 476.8l2.4 -1.5l0.8 1.2l-2.4 1.5zM1151.4 475.2l1.8 -1.1l0.9 1.4l-1.8 1.1zM1155.7 482.1l1.8 -1.1l1.0 1.6l-1.8 1.1zM1155.8 476.1l2.0 -1.3l1.0 1.6l-2.0 1.3zM1158.9 480.5l1.6 -1.0l1.0 1.7l-1.6 1.0zM1157.8 474.3l2.4 -1.5l0.8 1.3l-2.4 1.5zM1162.5 481.8l2.4 -1.5l0.9 1.5l-2.4 1.5zM1159.5 469.6l1.7 -1.1l1.1 1.7l-1.7 1.1zM1164.3 477.0l1.4 -0.9l1.0 1.6l-1.4 0.9zM1163.7 470.2l1.4 -0.9l1.0 1.6l-1.4 0.9zM1168.0 478.0l2.2 -1.4l0.7 1.2l-2.2 1.4zM1166.5 469.6l2.0 -1.3l0.7 1.1l-2.0 1.3zM1164.9 466.9l2.0 -1.2l0.8 1.3l-2.0 1.2zM1172.4 465.7l1.5 -0.9l0.8 1.2l-1.5 0.9zM1176.4 472.8l2.1 -1.3l0.8 1.3l-2.1 1.3zM1175.4 464.1l1.8 -1.2l0.8 1.3l-1.8 1.2zM1179.7 470.7l1.5 -1.0l0.7 1.2l-1.5 1.0zM1180.4 466.8l2.3 -1.4l1.0 1.6l-2.3 1.4zM1182.1 469.1l1.9 -1.2l0.9 1.5l-1.9 1.2zM1183.7 464.9l1.4 -0.9l0.8 1.3l-1.4 0.9zM1185.2 467.3l1.4 -0.9l0.8 1.2l-1.4 0.9zM1182.5 458.6l2.5 -1.6l0.7 1.2l-2.5 1.6zM1181.4 456.6l2.3 -1.4l0.9 1.4l-2.3 1.4zM1186.1 464.2l2.3 -1.5l0.7 1.1l-2.3 1.5zM1188.0 462.0l2.5 -1.5l1.0 1.6l-2.5 1.5zM1188.1 455.7l2.2 -1.3l0.7 1.2l-2.2 1.3zM1191.2 459.9l1.5 -1.0l0.9 1.5l-1.5 1.0zM1192.2 462.3l2.3 -1.4l1.0 1.5l-2.3 1.4zM1191.6 453.7l1.4 -0.9l0.8 1.3l-1.4 0.9zM1189.9 451.2l1.6 -1.0l0.9 1.5l-1.6 1.0zM1194.2 459.0l2.4 -1.5l0.8 1.2l-2.4 1.5zM1194.4 452.3l1.8 -1.1l0.8 1.4l-1.8 1.1zM1197.6 457.1l1.6 -1.0l0.7 1.2l-1.6 1.0zM1198.5 459.4l2.4 -1.5l1.1 1.7l-2.4 1.5zM1195.6 447.8l2.0 -1.3l1.1 1.7l-2.0 1.3zM1201.7 456.8l1.4 -0.9l0.8 1.3l-1.4 0.9zM1199.8 447.8l2.1 -1.3l1.1 1.8l-2.1 1.3zM1201.1 444.3l2.0 -1.3l0.7 1.1l-2.0 1.3zM1205.4 450.9l1.8 -1.1l1.0 1.6l-1.8 1.1zM1206.4 453.4l2.5 -1.6l1.0 1.6l-2.5 1.6zM1203.6 443.0l1.9 -1.2l0.8 1.3l-1.9 1.2zM1208.2 450.3l2.0 -1.2l0.8 1.3l-2.0 1.2zM1207.6 443.2l1.9 -1.2l0.9 1.4l-1.9 1.2zM1210.3 441.9l2.5 -1.5l0.7 1.2l-2.5 1.5zM1213.5 445.8l1.4 -0.9l1.0 1.6l-1.4 0.9zM1212.9 440.3l2.3 -1.5l1.0 1.6l-2.3 1.5zM1218.8 443.6l1.6 -1.0l1.0 1.6l-1.6 1.0zM1217.9 436.5l2.2 -1.4l0.8 1.3l-2.2 1.4zM1222.2 443.4l2.3 -1.4l1.0 1.6l-2.3 1.4zM1224.2 433.0l2.0 -1.3l0.8 1.2l-2.0 1.3zM1226.8 430.9l2.1 -1.3l0.9 1.4l-2.1 1.3zM1225.7 428.5l1.5 -0.9l0.7 1.2l-1.5 0.9zM1229.5 429.6l2.3 -1.4l1.0 1.6l-2.3 1.4zM1236.6 435.1l2.5 -1.6l1.1 1.8l-2.5 1.6zM1238.4 431.4l1.7 -1.0l0.9 1.4l-1.7 1.0zM1240.6 429.9l2.4 -1.5l0.9 1.5l-2.4 1.5zM1242.9 428.0l2.5 -1.6l0.8 1.3l-2.5 1.6zM1245.6 420.2l2.0 -1.3l0.9 1.5l-2.0 1.3zM1249.7 426.7l2.1 -1.3l1.0 1.6l-2.1 1.3zM1247.7 417.9l1.7 -1.1l0.8 1.2l-1.7 1.1zM1251.3 423.3l1.4 -0.9l0.8 1.3l-1.4 0.9zM1258.7 417.7l2.2 -1.4l0.8 1.3l-2.2 1.4zM1262.8 418.7l2.0 -1.3l1.0 1.6l-2.0 1.3zM1131.5 513.7l2.1 -1.3l0.8 1.3l-2.1 1.3zM1129.2 504.8l2.2 -1.4l0.8 1.3l-2.2 1.4zM1127.3 501.8l2.3 -1.4l0.9 1.5l-2.3 1.4zM1132.0 508.7l1.7 -1.1l1.0 1.6l-1.7 1.1zM1135.0 507.4l2.3 -1.4l0.8 1.3l-2.3 1.4zM1135.0 500.5l1.7 -1.1l0.7 1.1l-1.7 1.1zM1139.6 508.5l2.3 -1.5l0.9 1.5l-2.3 1.5zM1137.5 498.5l2.3 -1.4l1.1 1.7l-2.3 1.4zM1141.3 503.7l1.4 -0.9l1.0 1.6l-1.4 0.9zM1141.0 497.8l1.8 -1.2l0.8 1.2l-1.8 1.2zM1139.5 494.9l1.5 -0.9l1.1 1.7l-1.5 0.9zM1143.2 502.1l2.5 -1.6l0.7 1.2l-2.5 1.6zM1145.9 500.6l2.2 -1.4l0.9 1.5l-2.2 1.4zM1147.6 503.5l2.4 -1.5l0.9 1.4l-2.4 1.5zM1145.8 494.1l2.4 -1.5l0.8 1.2l-2.4 1.5zM1144.3 491.1l1.7 -1.1l1.0 1.6l-1.7 1.1zM1147.6 490.1l2.0 -1.3l0.8 1.3l-2.0 1.3zM1152.2 496.9l1.5 -0.9l1.1 1.7l-1.5 0.9zM1151.3 490.8l2.5 -1.5l0.8 1.3l-2.5 1.5zM1150.5 488.3l1.4 -0.9l1.0 1.6l-1.4 0.9zM1154.7 495.8l2.0 -1.3l1.0 1.6l-2.0 1.3zM1154.4 488.6l1.8 -1.2l0.7 1.2l-1.8 1.2zM1153.3 486.8l1.9 -1.2l0.9 1.4l-1.9 1.2zM1159.0 495.6l1.5 -0.9l0.9 1.5l-1.5 0.9zM1155.2 484.6l2.1 -1.3l1.1 1.7l-2.1 1.3zM1159.8 491.8l2.0 -1.2l1.0 1.6l-2.0 1.2zM1159.9 485.5l1.7 -1.1l0.8 1.3l-1.7 1.1zM1162.4 483.7l1.9 -1.2l1.1 1.7l-1.9 1.2zM1166.8 490.7l1.9 -1.2l1.1 1.7l-1.9 1.2zM1170.7 484.6l2.1 -1.3l1.0 1.6l-2.1 1.3zM1172.1 486.9l2.2 -1.4l1.1 1.7l-2.2 1.4zM1174.3 483.5l1.5 -0.9l0.8 1.2l-1.5 0.9zM1174.1 477.0l1.7 -1.1l1.0 1.6l-1.7 1.1zM1172.3 473.8l1.5 -0.9l1.1 1.7l-1.5 0.9zM1176.7 481.5l2.2 -1.4l0.9 1.4l-2.2 1.4zM1176.6 475.5l2.5 -1.5l1.1 1.7l-2.5 1.5zM1179.3 473.5l2.0 -1.3l0.8 1.3l-2.0 1.3zM1178.1 471.3l1.9 -1.2l0.8 1.3l-1.9 1.2zM1181.8 477.7l2.3 -1.4l0.8 1.3l-2.3 1.4zM1183.8 480.0l1.5 -0.9l1.0 1.6l-1.5 0.9zM1182.0 471.7l1.8 -1.1l0.8 1.3l-1.8 1.1zM1180.1 469.0l2.3 -1.4l1.1 1.7l-2.3 1.4zM1186.5 479.0l2.0 -1.3l1.0 1.5l-2.0 1.3zM1184.2 470.2l2.4 -1.5l0.9 1.5l-2.4 1.5zM1187.2 474.7l2.1 -1.3l1.1 1.7l-2.1 1.3zM1186.8 467.8l1.5 -1.0l1.0 1.5l-1.5 1.0zM1185.8 466.3l1.7 -1.0l1.1 1.7l-1.7 1.0zM1189.8 473.2l2.1 -1.3l0.8 1.2l-2.1 1.3zM1191.6 475.4l1.6 -1.0l0.8 1.3l-1.6 1.0zM1189.7 466.1l1.7 -1.1l1.1 1.7l-1.7 1.1zM1192.8 471.5l2.2 -1.4l1.1 1.7l-2.2 1.4zM1192.4 464.4l1.5 -0.9l0.9 1.4l-1.5 0.9zM1197.4 472.5l1.6 -1.0l0.9 1.4l-1.6 1.0zM1195.7 463.7l1.6 -1.0l0.8 1.4l-1.6 1.0zM1197.8 468.0l2.4 -1.5l1.0 1.7l-2.4 1.5zM1199.4 470.6l2.4 -1.5l0.7 1.1l-2.4 1.5zM1198.2 461.3l1.5 -0.9l1.1 1.7l-1.5 0.9zM1196.2 459.3l2.5 -1.5l0.9 1.5l-2.5 1.5zM1201.0 466.3l1.8 -1.1l0.8 1.3l-1.8 1.1zM1201.1 459.9l1.4 -0.9l0.7 1.2l-1.4 0.9zM1199.2 457.4l1.9 -1.2l0.8 1.3l-1.9 1.2zM1203.8 458.7l2.1 -1.3l0.8 1.2l-2.1 1.3zM1206.4 462.5l2.0 -1.2l0.9 1.5l-2.0 1.2zM1204.7 453.4l1.7 -1.0l1.0 1.7l-1.7 1.0zM1209.2 461.0l2.1 -1.3l0.9 1.5l-2.1 1.3zM1209.3 454.1l1.6 -1.0l0.7 1.2l-1.6 1.0zM1210.9 451.0l2.2 -1.4l0.7 1.1l-2.2 1.4zM1213.2 448.3l2.1 -1.3l0.7 1.1l-2.1 1.3zM1217.7 455.4l2.1 -1.3l0.8 1.2l-2.1 1.3zM1219.2 458.0l2.2 -1.4l0.8 1.3l-2.2 1.4zM1220.8 454.2l2.4 -1.5l1.1 1.7l-2.4 1.5zM1220.7 447.8l1.9 -1.2l0.8 1.3l-1.9 1.2zM1223.8 452.4l1.5 -0.9l1.0 1.6l-1.5 0.9zM1223.2 445.3l1.6 -1.0l1.1 1.8l-1.6 1.0zM1225.9 450.4l2.3 -1.4l1.0 1.6l-2.3 1.4zM1227.5 452.6l2.0 -1.2l0.9 1.5l-2.0 1.2zM1225.8 443.3l2.0 -1.2l1.1 1.8l-2.0 1.2zM1227.0 440.1l2.4 -1.5l0.9 1.5l-2.4 1.5zM1231.7 446.9l1.7 -1.0l1.0 1.5l-1.7 1.0zM1233.1 449.9l2.5 -1.6l0.7 1.2l-2.5 1.6zM1236.6 447.7l1.5 -0.9l0.9 1.5l-1.5 0.9zM1237.6 444.1l1.6 -1.0l0.8 1.3l-1.6 1.0zM1238.1 445.8l2.3 -1.5l0.9 1.5l-2.3 1.5zM1236.2 437.2l2.2 -1.4l0.8 1.2l-2.2 1.4zM1235.1 435.5l2.4 -1.5l0.8 1.4l-2.4 1.5zM1239.3 436.4l2.5 -1.6l0.9 1.4l-2.5 1.6zM1237.6 433.3l2.2 -1.4l1.0 1.7l-2.2 1.4zM1242.1 440.0l1.8 -1.1l1.0 1.7l-1.8 1.1zM1241.7 433.9l2.2 -1.4l0.8 1.3l-2.2 1.4zM1244.6 438.4l2.1 -1.3l1.1 1.8l-2.1 1.3zM1246.9 441.5l1.5 -0.9l0.8 1.3l-1.5 0.9zM1244.8 432.6l1.6 -1.0l0.9 1.4l-1.6 1.0zM1243.3 430.7l2.0 -1.3l0.8 1.3l-2.0 1.3zM1247.0 431.3l2.1 -1.3l0.8 1.3l-2.1 1.3zM1253.8 436.9l2.3 -1.4l1.1 1.7l-2.3 1.4zM1251.8 427.6l1.6 -1.0l1.0 1.7l-1.6 1.0zM1254.4 432.8l2.5 -1.6l0.8 1.4l-2.5 1.6zM1259.1 433.9l2.1 -1.3l1.0 1.6l-2.1 1.3zM1257.0 424.2l1.8 -1.1l0.9 1.4l-1.8 1.1zM1259.9 429.2l2.0 -1.3l0.7 1.2l-2.0 1.3zM1263.1 428.2l2.0 -1.2l0.7 1.2l-2.0 1.2zM1265.5 426.7l2.3 -1.5l0.8 1.3l-2.3 1.5zM1267.7 417.5l1.8 -1.1l1.0 1.6l-1.8 1.1zM1273.4 421.5l2.3 -1.4l1.0 1.6l-2.3 1.4zM1280.3 420.4l2.3 -1.4l0.9 1.5l-2.3 1.4zM1123.2 529.6l2.0 -1.2l0.7 1.2l-2.0 1.2zM1124.4 525.5l2.1 -1.3l0.8 1.2l-2.1 1.3zM1125.8 527.3l1.8 -1.1l0.9 1.4l-1.8 1.1zM1131.5 523.8l1.6 -1.0l0.8 1.2l-1.6 1.0zM1132.8 514.4l1.8 -1.2l0.8 1.2l-1.8 1.2zM1135.3 511.3l1.4 -0.9l1.0 1.7l-1.4 0.9zM1138.5 516.5l1.4 -0.9l1.0 1.6l-1.4 0.9zM1139.9 519.6l2.3 -1.5l0.9 1.4l-2.3 1.5zM1140.4 509.1l2.5 -1.6l0.7 1.1l-2.5 1.6zM1138.9 506.5l2.4 -1.5l1.0 1.5l-2.4 1.5zM1146.5 512.3l1.9 -1.2l0.8 1.3l-1.9 1.2zM1147.4 514.2l2.2 -1.4l0.9 1.5l-2.2 1.4zM1148.7 509.7l2.2 -1.3l0.9 1.4l-2.2 1.3zM1147.5 501.6l1.6 -1.0l0.8 1.2l-1.6 1.0zM1152.7 510.6l2.2 -1.4l1.1 1.7l-2.2 1.4zM1151.8 502.2l1.5 -0.9l0.7 1.2l-1.5 0.9zM1153.8 500.6l2.3 -1.4l0.8 1.3l-2.3 1.4zM1157.1 505.3l1.7 -1.1l0.9 1.4l-1.7 1.1zM1158.4 507.7l2.1 -1.3l0.8 1.3l-2.1 1.3zM1155.0 496.0l1.8 -1.1l1.1 1.7l-1.8 1.1zM1157.8 494.3l1.4 -0.9l0.7 1.1l-1.4 0.9zM1162.0 502.3l2.5 -1.6l0.8 1.4l-2.5 1.6zM1163.2 503.9l2.2 -1.4l1.0 1.7l-2.2 1.4zM1162.2 495.6l2.2 -1.4l1.1 1.7l-2.2 1.4zM1160.3 492.4l2.0 -1.3l1.0 1.7l-2.0 1.3zM1165.0 499.7l1.7 -1.1l0.8 1.3l-1.7 1.1zM1166.6 501.9l1.4 -0.9l1.1 1.8l-1.4 0.9zM1164.7 493.7l1.8 -1.1l0.9 1.4l-1.8 1.1zM1167.1 498.0l2.1 -1.3l1.0 1.6l-2.1 1.3zM1170.1 497.3l2.3 -1.4l1.0 1.6l-2.3 1.4zM1172.2 499.7l1.5 -1.0l0.8 1.2l-1.5 1.0zM1169.4 490.5l2.0 -1.2l1.1 1.8l-2.0 1.2zM1168.3 488.3l1.6 -1.0l0.9 1.4l-1.6 1.0zM1172.6 496.1l2.4 -1.5l0.8 1.3l-2.4 1.5zM1173.7 497.2l1.9 -1.2l0.9 1.4l-1.9 1.2zM1172.1 488.8l1.4 -0.9l1.1 1.7l-1.4 0.9zM1174.8 494.0l2.3 -1.4l0.9 1.4l-2.3 1.4zM1174.8 487.1l2.1 -1.3l1.0 1.6l-2.1 1.3zM1174.2 485.3l1.4 -0.9l0.8 1.2l-1.4 0.9zM1178.5 492.4l1.6 -1.0l0.8 1.2l-1.6 1.0zM1178.0 485.8l2.1 -1.3l1.0 1.6l-2.1 1.3zM1176.6 483.3l1.8 -1.1l0.9 1.4l-1.8 1.1zM1180.7 489.7l1.8 -1.1l0.9 1.4l-1.8 1.1zM1180.7 484.0l2.5 -1.6l0.7 1.2l-2.5 1.6zM1179.2 480.6l1.6 -1.0l1.0 1.6l-1.6 1.0zM1183.6 481.3l1.4 -0.9l0.8 1.3l-1.4 0.9zM1182.2 479.9l2.1 -1.3l1.0 1.6l-2.1 1.3zM1186.8 486.5l1.4 -0.9l0.8 1.4l-1.4 0.9zM1186.4 480.1l1.7 -1.1l1.1 1.7l-1.7 1.1zM1190.7 487.4l2.1 -1.3l0.7 1.1l-2.1 1.3zM1187.6 476.2l1.8 -1.1l0.8 1.3l-1.8 1.1zM1191.6 483.3l2.4 -1.5l0.8 1.3l-2.4 1.5zM1191.8 477.2l2.3 -1.5l0.8 1.2l-2.3 1.5zM1190.2 474.3l2.0 -1.2l0.9 1.4l-2.0 1.2zM1194.0 475.1l2.2 -1.4l0.8 1.3l-2.2 1.4zM1197.2 480.1l2.1 -1.3l1.0 1.6l-2.1 1.3zM1197.7 473.6l1.4 -0.9l0.7 1.1l-1.4 0.9zM1199.8 477.9l2.2 -1.4l1.0 1.6l-2.2 1.4zM1201.6 480.3l1.8 -1.1l0.9 1.4l-1.8 1.1zM1200.3 471.7l1.8 -1.2l0.7 1.2l-1.8 1.2zM1203.4 476.7l1.9 -1.2l0.8 1.3l-1.9 1.2zM1206.1 474.5l1.5 -1.0l1.1 1.8l-1.5 1.0zM1207.5 477.2l1.9 -1.2l0.8 1.2l-1.9 1.2zM1208.9 472.9l1.6 -1.0l1.1 1.8l-1.6 1.0zM1208.7 466.9l2.1 -1.3l0.8 1.2l-2.1 1.3zM1210.9 470.6l2.4 -1.5l1.0 1.6l-2.4 1.5zM1212.4 472.9l2.2 -1.4l1.1 1.7l-2.2 1.4zM1209.5 462.4l2.0 -1.3l0.8 1.3l-2.0 1.3zM1214.2 469.9l2.0 -1.3l0.8 1.3l-2.0 1.3zM1216.7 467.3l2.0 -1.3l1.0 1.6l-2.0 1.3zM1218.4 470.0l2.1 -1.3l0.8 1.4l-2.1 1.3zM1221.2 468.5l2.0 -1.3l0.8 1.2l-2.0 1.3zM1219.5 459.4l2.1 -1.3l0.8 1.2l-2.1 1.3zM1218.4 457.4l1.9 -1.2l0.9 1.4l-1.9 1.2zM1222.2 463.7l2.2 -1.4l1.0 1.6l-2.2 1.4zM1221.1 455.1l1.8 -1.1l0.9 1.5l-1.8 1.1zM1224.5 453.5l1.4 -0.9l0.8 1.2l-1.4 0.9zM1228.1 460.3l2.3 -1.5l0.7 1.1l-2.3 1.5zM1230.7 458.9l2.4 -1.5l0.9 1.5l-2.4 1.5zM1232.5 460.9l1.6 -1.0l0.7 1.2l-1.6 1.0zM1229.3 450.0l2.4 -1.5l0.8 1.3l-2.4 1.5zM1233.7 457.1l2.4 -1.5l0.9 1.4l-2.4 1.5zM1236.2 455.0l1.9 -1.2l1.0 1.6l-1.9 1.2zM1234.3 446.5l1.6 -1.0l0.8 1.3l-1.6 1.0zM1239.1 454.0l1.6 -1.0l0.7 1.2l-1.6 1.0zM1240.5 457.0l2.2 -1.4l0.8 1.3l-2.2 1.4zM1237.9 447.7l2.3 -1.4l0.8 1.3l-2.3 1.4zM1240.9 452.1l2.0 -1.2l0.9 1.4l-2.0 1.2zM1245.2 439.8l1.4 -0.9l0.8 1.2l-1.4 0.9zM1249.9 447.7l1.7 -1.1l0.9 1.4l-1.7 1.1zM1253.5 448.1l1.9 -1.2l0.8 1.4l-1.9 1.2zM1251.0 436.8l1.4 -0.9l0.9 1.4l-1.4 0.9zM1255.4 444.2l1.7 -1.1l1.0 1.6l-1.7 1.1zM1256.6 446.1l1.7 -1.1l0.8 1.2l-1.7 1.1zM1254.6 437.2l1.5 -1.0l1.0 1.6l-1.5 1.0zM1253.1 435.2l1.9 -1.2l1.0 1.5l-1.9 1.2zM1257.6 442.2l1.8 -1.1l0.8 1.3l-1.8 1.1zM1259.8 434.1l2.1 -1.3l0.8 1.3l-2.1 1.3zM1266.1 437.4l1.8 -1.1l0.9 1.5l-1.8 1.1zM1268.8 435.5l1.8 -1.1l0.8 1.3l-1.8 1.1zM1268.5 428.5l1.9 -1.2l1.0 1.5l-1.9 1.2zM1272.9 435.8l2.2 -1.4l0.8 1.3l-2.2 1.4zM1271.3 426.8l1.5 -0.9l0.9 1.4l-1.5 0.9zM1274.3 432.5l2.3 -1.4l0.8 1.3l-2.3 1.4zM1278.6 432.5l2.2 -1.4l0.9 1.5l-2.2 1.4zM1279.3 428.4l2.2 -1.4l1.1 1.7l-2.2 1.4zM1281.0 430.3l1.5 -0.9l0.8 1.3l-1.5 0.9zM1119.2 539.9l1.4 -0.9l0.8 1.4l-1.4 0.9zM1119.0 533.5l2.0 -1.2l0.7 1.2l-2.0 1.2zM1122.2 526.9l2.4 -1.5l0.9 1.4l-2.4 1.5zM1128.7 536.9l1.9 -1.2l0.9 1.4l-1.9 1.2zM1126.4 527.7l1.9 -1.2l1.0 1.6l-1.9 1.2zM1132.9 533.1l2.2 -1.3l1.0 1.7l-2.2 1.3zM1131.9 524.9l1.5 -1.0l1.0 1.7l-1.5 1.0zM1130.2 523.3l2.5 -1.5l0.7 1.2l-2.5 1.5zM1136.6 527.5l2.2 -1.4l1.1 1.8l-2.2 1.4zM1139.9 526.7l2.2 -1.4l1.0 1.6l-2.2 1.4zM1143.1 524.9l1.7 -1.1l0.9 1.4l-1.7 1.1zM1144.0 527.1l2.3 -1.5l0.9 1.5l-2.3 1.5zM1142.7 518.4l1.5 -1.0l1.0 1.6l-1.5 1.0zM1145.4 516.5l1.9 -1.2l0.8 1.2l-1.9 1.2zM1148.3 521.3l2.1 -1.3l1.0 1.6l-2.1 1.3zM1147.9 514.9l2.3 -1.4l1.1 1.8l-2.3 1.4zM1152.8 521.9l1.6 -1.0l0.7 1.2l-1.6 1.0zM1153.7 517.8l1.6 -1.0l0.8 1.3l-1.6 1.0zM1153.2 511.3l2.1 -1.3l1.1 1.7l-2.1 1.3zM1155.8 509.5l2.2 -1.4l1.1 1.7l-2.2 1.4zM1158.8 514.1l2.1 -1.3l0.9 1.5l-2.1 1.3zM1158.3 507.7l2.1 -1.3l0.7 1.2l-2.1 1.3zM1161.5 512.7l2.0 -1.3l0.9 1.5l-2.0 1.3zM1162.0 506.1l1.5 -0.9l0.7 1.2l-1.5 0.9zM1164.6 510.6l1.8 -1.2l0.8 1.3l-1.8 1.2zM1164.6 504.8l1.8 -1.1l0.8 1.2l-1.8 1.1zM1168.4 511.8l2.5 -1.6l1.0 1.7l-2.5 1.6zM1169.4 507.9l2.4 -1.5l0.9 1.4l-2.4 1.5zM1171.2 510.0l1.7 -1.1l1.0 1.6l-1.7 1.1zM1173.7 508.5l2.1 -1.3l1.1 1.7l-2.1 1.3zM1172.1 499.3l2.1 -1.3l0.8 1.2l-2.1 1.3zM1175.5 503.8l1.4 -0.9l1.0 1.5l-1.4 0.9zM1174.9 497.8l1.7 -1.1l0.9 1.4l-1.7 1.1zM1173.4 495.6l1.9 -1.2l1.0 1.5l-1.9 1.2zM1177.8 495.9l1.6 -1.0l1.0 1.6l-1.6 1.0zM1180.0 494.5l2.3 -1.5l1.0 1.6l-2.3 1.5zM1183.1 499.2l2.0 -1.3l0.8 1.3l-2.0 1.3zM1183.3 493.3l2.0 -1.2l0.9 1.4l-2.0 1.2zM1181.4 490.0l1.7 -1.1l1.1 1.7l-1.7 1.1zM1185.9 497.8l2.2 -1.4l0.7 1.2l-2.2 1.4zM1187.3 499.8l2.1 -1.3l0.9 1.5l-2.1 1.3zM1186.4 491.2l1.8 -1.1l0.7 1.2l-1.8 1.1zM1184.7 488.2l1.4 -0.9l0.8 1.3l-1.4 0.9zM1188.7 489.0l1.6 -1.0l1.1 1.7l-1.6 1.0zM1187.2 486.9l2.0 -1.3l0.9 1.4l-2.0 1.3zM1191.6 488.0l1.7 -1.0l0.7 1.2l-1.7 1.0zM1189.2 485.0l2.4 -1.5l0.8 1.4l-2.4 1.5zM1196.4 484.7l2.0 -1.3l0.8 1.2l-2.0 1.3zM1194.8 482.5l2.4 -1.5l1.1 1.7l-2.4 1.5zM1198.8 482.9l1.9 -1.2l0.8 1.2l-1.9 1.2zM1196.9 480.0l2.0 -1.3l1.0 1.6l-2.0 1.3zM1204.6 485.2l1.6 -1.0l1.0 1.7l-1.6 1.0zM1204.6 479.6l2.4 -1.5l0.8 1.2l-2.4 1.5zM1203.3 477.0l1.9 -1.2l1.0 1.6l-1.9 1.2zM1209.2 486.5l2.0 -1.2l0.8 1.2l-2.0 1.2zM1207.6 477.2l1.4 -0.8l0.8 1.3l-1.4 0.8zM1209.6 475.9l2.5 -1.6l1.0 1.6l-2.5 1.6zM1215.5 478.9l2.0 -1.3l1.0 1.6l-2.0 1.3zM1221.4 475.1l1.5 -1.0l0.9 1.5l-1.5 1.0zM1221.1 468.5l1.7 -1.1l0.9 1.4l-1.7 1.1zM1219.7 466.0l1.5 -1.0l1.1 1.8l-1.5 1.0zM1223.9 468.0l2.4 -1.5l0.8 1.3l-2.4 1.5zM1228.1 474.5l2.2 -1.4l0.8 1.3l-2.2 1.4zM1226.5 465.4l2.1 -1.3l0.9 1.5l-2.1 1.3zM1225.1 462.7l1.8 -1.1l0.9 1.5l-1.8 1.1zM1229.5 463.7l1.4 -0.9l1.0 1.6l-1.4 0.9zM1230.8 459.8l2.1 -1.3l1.0 1.5l-2.1 1.3zM1235.0 466.7l2.1 -1.3l0.7 1.1l-2.1 1.3zM1241.3 463.0l1.6 -1.0l0.8 1.2l-1.6 1.0zM1239.2 454.5l2.1 -1.3l0.9 1.5l-2.1 1.3zM1245.2 463.9l2.0 -1.2l1.0 1.6l-2.0 1.2zM1242.2 452.9l1.4 -0.9l0.8 1.3l-1.4 0.9zM1248.1 462.5l1.7 -1.0l0.7 1.1l-1.7 1.0zM1246.2 453.8l1.5 -0.9l0.9 1.4l-1.5 0.9zM1248.4 457.9l2.0 -1.3l1.1 1.7l-2.0 1.3zM1250.5 461.1l1.9 -1.2l0.9 1.5l-1.9 1.2zM1247.5 449.8l1.4 -0.9l0.8 1.2l-1.4 0.9zM1251.7 457.0l1.9 -1.2l0.8 1.3l-1.9 1.2zM1254.1 448.7l2.4 -1.5l1.0 1.6l-2.4 1.5zM1257.0 453.2l2.2 -1.4l0.8 1.3l-2.2 1.4zM1258.9 455.3l1.4 -0.9l0.9 1.5l-1.4 0.9zM1256.2 446.5l2.2 -1.4l1.0 1.6l-2.2 1.4zM1257.6 442.6l1.7 -1.1l0.8 1.4l-1.7 1.1zM1262.1 450.4l2.3 -1.4l0.8 1.3l-2.3 1.4zM1265.8 450.1l1.4 -0.9l1.1 1.7l-1.4 0.9zM1266.9 440.2l1.5 -1.0l1.0 1.6l-1.5 1.0zM1265.2 437.6l1.6 -1.0l0.8 1.3l-1.6 1.0zM1269.1 444.7l2.4 -1.5l1.1 1.7l-2.4 1.5zM1270.8 447.4l2.3 -1.4l1.0 1.6l-2.3 1.4zM1267.5 436.2l2.1 -1.3l1.0 1.6l-2.1 1.3zM1272.5 443.5l1.5 -0.9l0.8 1.2l-1.5 0.9zM1275.4 441.5l1.4 -0.9l0.7 1.1l-1.4 0.9zM1275.4 435.2l1.7 -1.1l0.9 1.5l-1.7 1.1zM1279.7 442.5l2.2 -1.4l0.8 1.2l-2.2 1.4zM1277.9 433.5l1.5 -1.0l1.0 1.6l-1.5 1.0zM1282.6 430.2l1.5 -0.9l1.1 1.7l-1.5 0.9zM1281.1 427.9l1.6 -1.0l1.0 1.5l-1.6 1.0zM1286.3 424.6l2.4 -1.5l0.9 1.5l-2.4 1.5zM1304.8 416.6l2.2 -1.4l0.9 1.4l-2.2 1.4zM1308.2 421.3l1.6 -1.0l1.0 1.6l-1.6 1.0zM1309.5 424.1l2.1 -1.3l1.0 1.6l-2.1 1.3zM1316.0 409.4l1.5 -1.0l0.9 1.4l-1.5 1.0zM1318.9 414.8l2.2 -1.4l1.1 1.7l-2.2 1.4zM1320.1 416.3l1.9 -1.2l1.0 1.7l-1.9 1.2zM1112.7 553.7l1.8 -1.1l0.8 1.3l-1.8 1.1zM1117.6 543.7l2.5 -1.5l1.0 1.6l-2.5 1.5zM1121.1 542.0l1.7 -1.1l0.8 1.3l-1.7 1.1zM1123.7 546.6l2.2 -1.4l0.7 1.2l-2.2 1.4zM1123.3 539.6l2.1 -1.3l0.7 1.2l-2.1 1.3zM1121.6 537.3l2.4 -1.5l1.1 1.7l-2.4 1.5zM1126.1 537.4l1.8 -1.1l1.1 1.7l-1.8 1.1zM1129.4 542.6l1.7 -1.1l0.7 1.1l-1.7 1.1zM1130.9 544.6l1.4 -0.9l0.8 1.4l-1.4 0.9zM1131.7 540.5l1.4 -0.9l1.0 1.6l-1.4 0.9zM1133.4 533.4l2.5 -1.5l0.7 1.2l-2.5 1.5zM1136.6 537.8l1.8 -1.1l0.9 1.5l-1.8 1.1zM1139.2 536.1l1.8 -1.1l0.7 1.2l-1.8 1.1zM1141.2 538.9l1.4 -0.9l1.1 1.7l-1.4 0.9zM1142.1 535.3l2.2 -1.4l1.0 1.5l-2.2 1.4zM1143.2 536.5l1.7 -1.1l1.0 1.6l-1.7 1.1zM1144.3 532.8l1.7 -1.1l0.8 1.3l-1.7 1.1zM1147.1 531.0l1.6 -1.0l1.0 1.6l-1.6 1.0zM1150.9 532.1l2.3 -1.5l0.8 1.2l-2.3 1.5zM1149.6 523.5l1.8 -1.1l0.8 1.2l-1.8 1.1zM1152.7 528.2l1.5 -0.9l1.0 1.7l-1.5 0.9zM1152.2 522.1l1.8 -1.1l1.1 1.8l-1.8 1.1zM1150.7 519.6l1.7 -1.1l1.0 1.5l-1.7 1.1zM1154.9 526.8l2.1 -1.3l0.7 1.1l-2.1 1.3zM1156.2 528.7l1.9 -1.2l1.0 1.5l-1.9 1.2zM1156.9 525.0l2.5 -1.6l1.0 1.6l-2.5 1.6zM1158.8 527.5l1.9 -1.2l1.1 1.7l-1.9 1.2zM1160.4 524.0l1.8 -1.1l0.8 1.2l-1.8 1.1zM1159.5 516.7l1.5 -0.9l0.8 1.3l-1.5 0.9zM1157.8 515.0l2.4 -1.5l0.8 1.2l-2.4 1.5zM1162.0 515.2l1.8 -1.1l0.8 1.2l-1.8 1.1zM1160.5 513.5l2.4 -1.5l1.1 1.7l-2.4 1.5zM1167.0 522.9l1.6 -1.0l0.7 1.1l-1.6 1.0zM1164.5 513.5l1.6 -1.0l0.9 1.4l-1.6 1.0zM1167.7 519.5l2.5 -1.5l0.7 1.1l-2.5 1.5zM1168.9 520.4l1.5 -0.9l1.0 1.6l-1.5 0.9zM1167.5 513.1l2.3 -1.4l0.7 1.2l-2.3 1.4zM1170.3 516.7l1.6 -1.0l0.8 1.3l-1.6 1.0zM1170.3 510.2l1.6 -1.0l0.9 1.5l-1.6 1.0zM1172.9 515.4l2.5 -1.5l0.7 1.2l-2.5 1.5zM1173.0 509.2l1.7 -1.1l1.0 1.5l-1.7 1.1zM1171.2 506.9l2.3 -1.4l0.9 1.4l-2.3 1.4zM1175.7 514.0l2.2 -1.4l0.9 1.4l-2.2 1.4zM1177.3 516.7l2.2 -1.4l0.7 1.1l-2.2 1.4zM1179.5 514.3l1.8 -1.1l0.9 1.5l-1.8 1.1zM1177.6 505.6l2.4 -1.5l1.0 1.6l-2.4 1.5zM1182.6 513.4l2.3 -1.4l0.7 1.2l-2.3 1.4zM1181.1 504.3l1.7 -1.0l0.8 1.2l-1.7 1.0zM1186.5 506.2l1.8 -1.1l1.0 1.5l-1.8 1.1zM1188.2 509.2l2.0 -1.3l0.9 1.5l-2.0 1.3zM1189.4 505.3l2.2 -1.4l1.1 1.8l-2.2 1.4zM1206.9 484.2l2.2 -1.3l1.0 1.5l-2.2 1.3zM1213.2 493.8l1.8 -1.1l0.7 1.1l-1.8 1.1zM1210.9 485.0l2.0 -1.3l0.7 1.1l-2.0 1.3zM1213.4 483.1l1.9 -1.2l0.8 1.4l-1.9 1.2zM1216.6 487.9l1.5 -0.9l0.8 1.3l-1.5 0.9zM1218.1 490.2l1.5 -0.9l0.8 1.4l-1.5 0.9zM1219.0 486.6l2.5 -1.5l1.1 1.7l-2.5 1.5zM1222.7 478.1l1.4 -0.9l1.0 1.5l-1.4 0.9zM1225.1 483.1l2.4 -1.5l0.9 1.4l-2.4 1.5zM1227.2 485.4l1.4 -0.9l0.8 1.3l-1.4 0.9zM1224.6 476.2l1.8 -1.1l0.9 1.4l-1.8 1.1zM1227.1 480.9l2.5 -1.5l0.9 1.5l-2.5 1.5zM1227.4 474.8l1.7 -1.1l1.1 1.8l-1.7 1.1zM1230.4 479.6l1.7 -1.1l0.9 1.5l-1.7 1.1zM1231.7 481.7l1.7 -1.0l1.0 1.6l-1.7 1.0zM1230.1 473.5l2.2 -1.4l0.9 1.5l-2.2 1.4zM1233.5 478.3l1.7 -1.1l0.8 1.3l-1.7 1.1zM1232.9 471.3l1.7 -1.0l1.0 1.5l-1.7 1.0zM1238.3 474.6l2.3 -1.4l0.8 1.3l-2.3 1.4zM1239.7 476.9l2.4 -1.5l0.9 1.4l-2.4 1.5zM1241.4 472.2l1.4 -0.9l1.0 1.6l-1.4 0.9zM1246.3 469.3l1.9 -1.2l0.8 1.3l-1.9 1.2zM1246.1 462.5l2.2 -1.4l0.8 1.3l-2.2 1.4zM1245.3 460.9l1.8 -1.1l0.7 1.1l-1.8 1.1zM1249.2 467.6l2.1 -1.3l1.1 1.7l-2.1 1.3zM1251.2 470.5l1.9 -1.2l0.8 1.3l-1.9 1.2zM1251.7 465.9l1.9 -1.2l0.8 1.2l-1.9 1.2zM1256.8 456.1l1.9 -1.2l0.8 1.3l-1.9 1.2zM1259.5 454.5l1.4 -0.9l1.1 1.7l-1.4 0.9zM1260.8 451.3l1.9 -1.2l0.8 1.2l-1.9 1.2zM1269.4 457.8l1.6 -1.0l0.9 1.4l-1.6 1.0zM1265.8 447.4l2.3 -1.4l0.8 1.3l-2.3 1.4zM1275.6 450.9l1.9 -1.2l0.8 1.3l-1.9 1.2zM1275.8 445.0l2.1 -1.3l1.1 1.7l-2.1 1.3zM1280.6 440.9l1.6 -1.0l0.9 1.5l-1.6 1.0zM1279.7 439.5l1.6 -1.0l0.8 1.3l-1.6 1.0zM1292.0 434.2l1.6 -1.0l0.9 1.5l-1.6 1.0zM1294.7 433.0l1.6 -1.0l0.9 1.5l-1.6 1.0zM1297.6 437.8l1.8 -1.1l1.0 1.6l-1.8 1.1zM1301.4 437.9l1.7 -1.0l1.0 1.6l-1.7 1.0zM1302.6 434.3l1.9 -1.2l1.0 1.5l-1.9 1.2zM1311.0 429.4l2.5 -1.5l0.9 1.4l-2.5 1.5zM1313.4 420.6l1.7 -1.0l1.0 1.5l-1.7 1.0zM1315.9 420.0l2.3 -1.4l0.8 1.2l-2.3 1.4zM1326.5 423.5l1.9 -1.2l0.7 1.2l-1.9 1.2zM1329.0 421.5l1.6 -1.0l1.1 1.7l-1.6 1.0zM1105.5 568.5l1.4 -0.9l0.9 1.4l-1.4 0.9zM1104.8 562.7l1.9 -1.2l0.8 1.2l-1.9 1.2zM1110.2 565.3l2.3 -1.4l1.0 1.6l-2.3 1.4zM1116.4 561.9l1.5 -0.9l0.8 1.3l-1.5 0.9zM1117.8 564.1l1.5 -0.9l1.0 1.6l-1.5 0.9zM1115.5 555.7l2.5 -1.6l0.7 1.1l-2.5 1.6zM1121.5 551.9l1.8 -1.1l1.1 1.8l-1.8 1.1zM1124.6 557.4l2.2 -1.4l0.8 1.3l-2.2 1.4zM1122.5 547.7l1.9 -1.2l0.9 1.4l-1.9 1.2zM1128.9 558.4l2.2 -1.4l0.8 1.2l-2.2 1.4zM1132.2 551.8l2.0 -1.3l1.1 1.8l-2.0 1.3zM1135.4 544.3l2.3 -1.4l0.8 1.3l-2.3 1.4zM1134.3 541.6l1.4 -0.9l0.9 1.4l-1.4 0.9zM1136.7 539.7l2.1 -1.3l1.0 1.6l-2.1 1.3zM1140.9 540.7l2.3 -1.4l0.8 1.4l-2.3 1.4zM1139.6 537.6l1.4 -0.9l1.0 1.7l-1.4 0.9zM1143.3 538.5l1.9 -1.2l1.0 1.5l-1.9 1.2zM1146.2 542.8l1.6 -1.0l1.0 1.6l-1.6 1.0zM1144.8 535.1l2.4 -1.5l0.8 1.3l-2.4 1.5zM1152.0 540.0l1.4 -0.9l0.9 1.5l-1.4 0.9zM1150.0 531.3l2.3 -1.4l0.8 1.3l-2.3 1.4zM1154.4 537.9l1.9 -1.2l1.1 1.8l-1.9 1.2zM1153.1 529.8l1.5 -0.9l0.7 1.1l-1.5 0.9zM1155.0 528.1l2.4 -1.5l0.8 1.3l-2.4 1.5zM1161.3 538.1l2.3 -1.4l0.7 1.2l-2.3 1.4zM1159.4 529.0l2.4 -1.5l0.8 1.3l-2.4 1.5zM1162.6 533.4l1.8 -1.1l0.7 1.1l-1.8 1.1zM1163.7 535.0l1.6 -1.0l1.1 1.7l-1.6 1.0zM1162.7 527.4l2.1 -1.3l0.8 1.2l-2.1 1.3zM1165.8 531.7l1.5 -0.9l0.9 1.4l-1.5 0.9zM1164.9 524.5l2.1 -1.3l0.9 1.5l-2.1 1.3zM1168.2 529.8l2.1 -1.3l1.1 1.7l-2.1 1.3zM1168.0 523.0l1.6 -1.0l0.8 1.2l-1.6 1.0zM1170.6 528.1l2.5 -1.6l1.0 1.6l-2.5 1.6zM1170.7 521.5l1.7 -1.0l0.7 1.2l-1.7 1.0zM1169.1 519.6l2.1 -1.3l0.9 1.4l-2.1 1.3zM1173.2 526.6l2.5 -1.6l1.0 1.6l-2.5 1.6zM1178.5 522.9l1.9 -1.2l0.9 1.5l-1.9 1.2zM1179.9 525.7l2.4 -1.5l1.0 1.6l-2.4 1.5zM1181.5 521.6l2.0 -1.3l0.9 1.4l-2.0 1.3zM1180.9 515.4l2.2 -1.4l0.8 1.3l-2.2 1.4zM1184.4 509.2l1.9 -1.2l0.8 1.3l-1.9 1.2zM1213.4 494.5l1.8 -1.1l1.0 1.7l-1.8 1.1zM1216.4 499.5l1.8 -1.1l0.7 1.1l-1.8 1.1zM1214.9 491.1l2.2 -1.4l1.0 1.6l-2.2 1.4zM1219.5 497.5l1.4 -0.9l1.0 1.6l-1.4 0.9zM1219.0 491.1l1.7 -1.1l0.8 1.3l-1.7 1.1zM1221.7 495.8l2.1 -1.3l0.9 1.5l-2.1 1.3zM1223.4 498.5l2.0 -1.2l0.9 1.4l-2.0 1.2zM1221.5 489.0l2.2 -1.4l0.9 1.5l-2.2 1.4zM1220.6 486.9l1.5 -0.9l1.0 1.6l-1.5 0.9zM1225.2 494.0l1.4 -0.9l0.9 1.4l-1.4 0.9zM1224.5 487.6l1.7 -1.0l0.9 1.4l-1.7 1.0zM1227.5 492.1l1.6 -1.0l1.1 1.7l-1.6 1.0zM1227.2 486.1l1.6 -1.0l0.8 1.3l-1.6 1.0zM1229.9 490.9l2.1 -1.3l1.1 1.7l-2.1 1.3zM1232.5 482.8l2.0 -1.3l1.0 1.6l-2.0 1.3zM1231.4 480.8l1.8 -1.1l0.9 1.4l-1.8 1.1zM1235.2 487.6l2.4 -1.5l0.8 1.3l-2.4 1.5zM1233.9 479.1l1.7 -1.1l0.8 1.4l-1.7 1.1zM1237.8 485.9l2.1 -1.3l0.8 1.3l-2.1 1.3zM1239.1 475.3l1.9 -1.2l0.9 1.5l-1.9 1.2zM1243.0 475.4l1.4 -0.9l1.1 1.8l-1.4 0.9zM1241.7 473.7l1.8 -1.1l0.9 1.4l-1.8 1.1zM1244.4 472.1l2.4 -1.5l1.1 1.8l-2.4 1.5zM1247.3 469.7l2.1 -1.3l1.0 1.5l-2.1 1.3zM1252.3 477.3l1.8 -1.1l0.8 1.3l-1.8 1.1zM1254.5 468.8l1.9 -1.2l1.1 1.8l-1.9 1.2zM1256.4 464.9l1.8 -1.1l0.9 1.5l-1.8 1.1zM1265.6 462.3l1.9 -1.2l0.9 1.4l-1.9 1.2zM1271.0 459.6l1.9 -1.2l0.7 1.2l-1.9 1.2zM1271.8 455.1l1.6 -1.0l1.0 1.6l-1.6 1.0zM1279.9 463.3l2.4 -1.5l0.8 1.3l-2.4 1.5zM1285.2 459.3l2.1 -1.3l0.8 1.4l-2.1 1.3zM1284.2 451.0l1.4 -0.9l0.7 1.2l-1.4 0.9zM1284.9 446.5l2.0 -1.3l1.0 1.6l-2.0 1.3zM1290.0 454.4l1.8 -1.1l0.7 1.1l-1.8 1.1zM1293.0 454.7l2.5 -1.6l0.9 1.4l-2.5 1.6zM1294.2 450.8l2.1 -1.3l0.7 1.1l-2.1 1.3zM1293.0 441.5l1.5 -0.9l0.7 1.2l-1.5 0.9zM1299.8 441.5l2.5 -1.5l0.8 1.3l-2.5 1.5zM1306.8 447.0l2.2 -1.3l0.8 1.2l-2.2 1.3zM1310.6 441.0l1.5 -1.0l0.7 1.1l-1.5 1.0zM1310.6 434.2l1.4 -0.9l1.1 1.8l-1.4 0.9zM1315.4 430.6l2.2 -1.4l1.1 1.7l-2.2 1.4zM1323.1 436.2l2.2 -1.4l0.7 1.2l-2.2 1.4zM1321.4 427.7l1.8 -1.1l0.7 1.2l-1.8 1.1zM1326.7 424.7l1.8 -1.1l0.7 1.1l-1.8 1.1zM1333.7 430.4l2.0 -1.3l0.7 1.1l-2.0 1.3zM1331.9 420.9l1.6 -1.0l0.8 1.3l-1.6 1.0zM1103.8 583.6l2.1 -1.3l1.0 1.6l-2.1 1.3zM1106.5 571.0l2.4 -1.5l1.1 1.8l-2.4 1.5zM1109.3 569.8l2.5 -1.5l0.7 1.1l-2.5 1.5zM1115.3 572.6l2.2 -1.3l0.9 1.4l-2.2 1.3zM1119.5 560.3l1.5 -0.9l0.8 1.3l-1.5 0.9zM1123.7 561.2l2.0 -1.2l0.9 1.5l-2.0 1.2zM1122.2 558.3l1.4 -0.9l0.8 1.2l-1.4 0.9zM1130.8 566.8l2.3 -1.4l1.0 1.7l-2.3 1.4zM1133.9 564.4l1.7 -1.1l1.0 1.6l-1.7 1.1zM1132.2 555.4l1.8 -1.1l0.9 1.4l-1.8 1.1zM1135.3 560.0l1.4 -0.9l0.7 1.2l-1.4 0.9zM1135.0 553.6l1.7 -1.1l0.8 1.3l-1.7 1.1zM1139.0 560.8l2.4 -1.5l1.0 1.7l-2.4 1.5zM1140.7 549.9l1.6 -1.0l0.8 1.3l-1.6 1.0zM1139.0 548.0l2.3 -1.4l0.8 1.2l-2.3 1.4zM1143.9 548.6l1.5 -0.9l0.9 1.4l-1.5 0.9zM1141.6 545.8l2.3 -1.4l1.1 1.7l-2.3 1.4zM1148.9 551.2l1.6 -1.0l1.0 1.7l-1.6 1.0zM1150.8 554.3l1.8 -1.1l1.0 1.6l-1.8 1.1zM1149.1 545.4l2.1 -1.3l0.9 1.5l-2.1 1.3zM1153.1 551.7l2.1 -1.3l1.1 1.7l-2.1 1.3zM1152.1 542.9l1.7 -1.1l0.8 1.3l-1.7 1.1zM1154.5 547.4l2.1 -1.3l1.1 1.7l-2.1 1.3zM1154.6 541.3l2.5 -1.6l1.0 1.6l-2.5 1.6zM1158.1 539.4l1.8 -1.1l0.8 1.3l-1.8 1.1zM1160.2 537.8l2.4 -1.5l0.8 1.3l-2.4 1.5zM1168.2 532.5l2.4 -1.5l1.0 1.6l-2.4 1.5zM1171.4 531.6l1.8 -1.1l0.8 1.3l-1.8 1.1zM1169.4 528.2l1.6 -1.0l1.0 1.6l-1.6 1.0zM1180.5 532.7l1.4 -0.9l0.9 1.4l-1.4 0.9zM1179.7 525.7l2.1 -1.3l1.1 1.8l-2.1 1.3zM1184.6 533.0l1.7 -1.1l1.0 1.6l-1.7 1.1zM1182.9 524.7l2.5 -1.6l0.8 1.2l-2.5 1.6zM1181.2 521.9l2.4 -1.5l0.9 1.4l-2.4 1.5zM1212.7 512.4l1.7 -1.0l0.8 1.3l-1.7 1.0zM1214.9 504.4l1.9 -1.2l0.8 1.3l-1.9 1.2zM1217.2 502.1l2.4 -1.5l1.0 1.6l-2.4 1.5zM1220.8 507.1l1.8 -1.1l0.9 1.5l-1.8 1.1zM1220.2 500.1l1.8 -1.1l0.8 1.3l-1.8 1.1zM1223.1 505.5l2.3 -1.5l1.1 1.7l-2.3 1.5zM1226.4 503.8l1.4 -0.9l0.8 1.3l-1.4 0.9zM1225.7 497.2l1.8 -1.1l0.8 1.3l-1.8 1.1zM1231.2 499.9l1.5 -1.0l1.1 1.7l-1.5 1.0zM1232.7 502.9l2.0 -1.3l0.8 1.3l-2.0 1.3zM1231.0 494.0l2.3 -1.4l0.9 1.5l-2.3 1.4zM1237.7 498.9l2.1 -1.3l1.0 1.6l-2.1 1.3zM1238.8 489.5l1.8 -1.1l1.0 1.5l-1.8 1.1zM1241.8 494.0l1.5 -0.9l0.9 1.5l-1.5 0.9zM1239.8 484.9l1.4 -0.9l1.0 1.6l-1.4 0.9zM1245.6 495.0l2.2 -1.4l1.0 1.6l-2.2 1.4zM1246.3 483.8l1.8 -1.2l1.0 1.5l-1.8 1.2zM1249.1 483.1l2.3 -1.5l0.8 1.3l-2.3 1.5zM1251.4 481.3l2.2 -1.3l1.0 1.7l-2.2 1.3zM1254.6 485.8l1.6 -1.0l0.8 1.2l-1.6 1.0zM1254.0 479.6l1.8 -1.1l1.0 1.6l-1.8 1.1zM1257.1 474.3l2.3 -1.5l0.9 1.4l-2.3 1.5zM1261.5 474.9l2.0 -1.2l0.9 1.4l-2.0 1.2zM1260.4 472.6l1.6 -1.0l0.9 1.5l-1.6 1.0zM1263.9 479.2l2.4 -1.5l1.0 1.6l-2.4 1.5zM1268.9 480.4l2.1 -1.3l0.7 1.2l-2.1 1.3zM1280.4 463.3l2.2 -1.4l0.9 1.5l-2.2 1.4zM1278.9 460.3l1.7 -1.0l1.1 1.8l-1.7 1.0zM1282.5 460.8l1.9 -1.2l1.0 1.6l-1.9 1.2zM1290.6 462.9l2.5 -1.6l0.9 1.5l-2.5 1.6zM1292.4 452.4l1.7 -1.0l1.0 1.6l-1.7 1.0zM1296.7 459.7l1.9 -1.2l1.1 1.8l-1.9 1.2zM1306.0 443.7l1.4 -0.9l1.0 1.6l-1.4 0.9zM1312.5 449.2l2.4 -1.5l0.7 1.1l-2.4 1.5zM1312.1 442.8l2.2 -1.4l1.0 1.6l-2.2 1.4zM1313.4 439.3l2.3 -1.5l0.8 1.2l-2.3 1.5zM1329.0 439.8l2.2 -1.4l1.0 1.6l-2.2 1.4zM1331.1 430.9l2.5 -1.6l1.1 1.7l-2.5 1.6zM1333.7 429.3l2.1 -1.3l0.8 1.3l-2.1 1.3zM1337.1 434.7l2.1 -1.3l0.7 1.2l-2.1 1.3zM1338.3 436.5l2.0 -1.2l0.8 1.2l-2.0 1.2zM1347.3 431.9l1.4 -0.9l0.8 1.2l-1.4 0.9zM1083.7 595.6l2.0 -1.2l1.0 1.5l-2.0 1.2zM1086.7 600.4l1.9 -1.2l0.8 1.4l-1.9 1.2zM1090.0 599.1l1.7 -1.1l0.8 1.3l-1.7 1.1zM1101.7 595.1l2.0 -1.3l1.0 1.5l-2.0 1.3zM1107.6 580.7l1.7 -1.1l0.9 1.5l-1.7 1.1zM1115.8 575.8l2.2 -1.4l0.8 1.3l-2.2 1.4zM1125.2 566.5l2.5 -1.6l0.8 1.2l-2.5 1.6zM1135.8 570.1l1.6 -1.0l1.1 1.7l-1.6 1.0zM1135.7 564.0l2.2 -1.4l0.9 1.5l-2.2 1.4zM1138.7 561.9l2.0 -1.3l1.0 1.7l-2.0 1.3zM1139.9 557.9l2.4 -1.5l1.1 1.8l-2.4 1.5zM1146.2 567.0l1.6 -1.0l0.8 1.3l-1.6 1.0zM1149.5 561.6l2.4 -1.5l0.7 1.1l-2.4 1.5zM1152.4 560.8l2.5 -1.6l0.8 1.3l-2.5 1.6zM1155.0 558.0l2.0 -1.2l0.8 1.2l-2.0 1.2zM1154.9 551.4l2.0 -1.3l1.1 1.7l-2.0 1.3zM1158.1 556.7l2.2 -1.4l0.9 1.5l-2.2 1.4zM1160.4 548.1l1.8 -1.1l0.9 1.5l-1.8 1.1zM1169.1 548.8l1.7 -1.0l1.1 1.7l-1.7 1.0zM1170.3 551.7l2.5 -1.6l1.0 1.6l-2.5 1.6zM1168.1 540.5l1.5 -0.9l1.0 1.6l-1.5 0.9zM1171.8 547.3l2.2 -1.4l1.0 1.6l-2.2 1.4zM1174.6 546.2l2.4 -1.5l0.9 1.5l-2.4 1.5zM1175.9 547.8l2.0 -1.2l1.1 1.8l-2.0 1.2zM1182.6 544.8l1.5 -0.9l1.1 1.8l-1.5 0.9zM1180.1 535.7l1.9 -1.2l1.1 1.7l-1.9 1.2zM1178.6 533.9l2.4 -1.5l1.0 1.7l-2.4 1.5zM1182.5 534.3l2.2 -1.4l1.0 1.6l-2.2 1.4zM1180.9 531.8l2.2 -1.4l1.0 1.5l-2.2 1.4zM1185.9 539.1l1.6 -1.0l0.9 1.4l-1.6 1.0zM1185.3 533.2l2.1 -1.3l0.8 1.3l-2.1 1.3zM1213.4 524.2l2.3 -1.4l1.1 1.8l-2.3 1.4zM1214.7 520.5l2.5 -1.5l1.0 1.5l-2.5 1.5zM1213.8 511.4l1.5 -0.9l0.8 1.3l-1.5 0.9zM1218.1 512.8l1.6 -1.0l0.9 1.5l-1.6 1.0zM1215.8 510.0l2.4 -1.5l0.9 1.5l-2.4 1.5zM1220.9 517.7l2.0 -1.2l1.0 1.6l-2.0 1.2zM1223.0 515.6l2.0 -1.3l1.1 1.8l-2.0 1.3zM1224.5 518.1l2.0 -1.3l1.1 1.7l-2.0 1.3zM1223.2 509.1l1.6 -1.0l0.7 1.1l-1.6 1.0zM1227.7 516.6l1.9 -1.2l1.0 1.6l-1.9 1.2zM1225.8 507.8l2.5 -1.5l0.8 1.2l-2.5 1.5zM1229.2 512.2l1.5 -0.9l0.9 1.4l-1.5 0.9zM1230.3 514.1l1.5 -0.9l1.1 1.7l-1.5 0.9zM1228.4 506.1l1.9 -1.2l0.7 1.2l-1.9 1.2zM1232.3 512.9l2.5 -1.5l0.7 1.1l-2.5 1.5zM1233.7 509.1l2.0 -1.2l0.7 1.1l-2.0 1.2zM1233.3 503.6l2.3 -1.5l0.8 1.3l-2.3 1.5zM1236.3 507.4l1.5 -1.0l0.7 1.1l-1.5 1.0zM1237.1 509.7l2.4 -1.5l1.0 1.6l-2.4 1.5zM1234.3 498.4l1.8 -1.1l1.0 1.7l-1.8 1.1zM1240.5 508.8l2.2 -1.3l0.7 1.1l-2.2 1.3zM1238.3 499.6l2.0 -1.3l0.7 1.1l-2.0 1.3zM1241.0 504.0l2.0 -1.2l0.9 1.5l-2.0 1.2zM1242.7 506.8l2.1 -1.3l0.8 1.3l-2.1 1.3zM1239.5 495.7l1.5 -1.0l0.8 1.2l-1.5 1.0zM1244.3 503.2l1.4 -0.9l1.0 1.6l-1.4 0.9zM1243.8 496.4l2.0 -1.3l1.0 1.7l-2.0 1.3zM1242.6 493.7l1.4 -0.9l0.8 1.3l-1.4 0.9zM1245.8 494.1l2.3 -1.4l1.1 1.7l-2.3 1.4zM1249.7 499.6l1.6 -1.0l0.7 1.2l-1.6 1.0zM1251.1 490.9l1.7 -1.0l1.0 1.7l-1.7 1.0zM1256.6 494.3l1.9 -1.2l0.9 1.5l-1.9 1.2zM1256.2 488.0l1.9 -1.2l1.0 1.6l-1.9 1.2zM1262.6 491.8l2.1 -1.3l0.8 1.3l-2.1 1.3zM1264.3 493.9l1.7 -1.0l1.0 1.6l-1.7 1.0zM1265.2 489.5l2.2 -1.3l0.7 1.2l-2.2 1.3zM1273.7 484.4l2.3 -1.4l0.7 1.1l-2.3 1.4zM1276.6 482.1l1.6 -1.0l0.9 1.5l-1.6 1.0zM1287.5 474.9l1.9 -1.2l1.1 1.7l-1.9 1.2zM1289.6 477.9l1.5 -0.9l0.9 1.4l-1.5 0.9zM1290.4 472.9l1.4 -0.9l1.0 1.7l-1.4 0.9zM1293.4 471.0l1.4 -0.9l1.1 1.7l-1.4 0.9zM1298.4 468.1l1.6 -1.0l1.0 1.7l-1.6 1.0zM1302.8 469.4l1.8 -1.1l1.0 1.6l-1.8 1.1zM1332.1 441.5l1.5 -1.0l0.8 1.3l-1.5 1.0zM1334.6 446.5l2.5 -1.5l1.1 1.7l-2.5 1.5zM1332.7 437.6l2.5 -1.6l0.7 1.2l-2.5 1.6zM1339.9 436.5l2.4 -1.5l0.7 1.1l-2.4 1.5zM1349.5 439.8l2.0 -1.2l1.1 1.7l-2.0 1.2zM1352.6 438.6l2.1 -1.3l0.8 1.2l-2.1 1.3zM1135.4 587.7l2.3 -1.5l0.7 1.1l-2.3 1.5zM1137.1 583.8l1.5 -1.0l0.7 1.2l-1.5 1.0zM1138.0 586.1l2.3 -1.5l0.9 1.5l-2.3 1.5zM1136.7 577.3l2.4 -1.5l1.0 1.6l-2.4 1.5zM1139.8 582.1l2.2 -1.4l0.8 1.3l-2.2 1.4zM1143.9 581.8l2.1 -1.3l0.9 1.4l-2.1 1.3zM1145.6 578.2l2.5 -1.6l0.9 1.5l-2.5 1.6zM1145.1 571.7l2.1 -1.3l0.8 1.3l-2.1 1.3zM1149.7 578.4l1.4 -0.9l1.1 1.7l-1.4 0.9zM1150.2 574.6l2.2 -1.4l0.9 1.4l-2.2 1.4zM1150.5 568.7l1.5 -0.9l0.8 1.2l-1.5 0.9zM1148.1 565.8l2.4 -1.5l0.9 1.5l-2.4 1.5zM1152.5 566.6l2.5 -1.6l1.0 1.6l-2.5 1.6zM1156.4 571.7l1.5 -0.9l0.8 1.3l-1.5 0.9zM1155.1 563.0l1.4 -0.9l0.7 1.1l-1.4 0.9zM1156.9 560.7l2.1 -1.3l0.9 1.5l-2.1 1.3zM1162.9 570.6l2.4 -1.5l0.9 1.4l-2.4 1.5zM1164.5 566.2l1.5 -1.0l1.1 1.7l-1.5 1.0zM1162.5 557.6l2.1 -1.3l0.9 1.5l-2.1 1.3zM1167.4 564.7l1.5 -0.9l1.1 1.7l-1.5 0.9zM1170.3 563.2l2.0 -1.2l0.8 1.2l-2.0 1.2zM1172.7 560.5l2.0 -1.3l0.9 1.4l-2.0 1.3zM1175.5 560.1l2.5 -1.6l0.7 1.2l-2.5 1.6zM1180.3 549.0l1.4 -0.9l1.0 1.7l-1.4 0.9zM1178.6 546.8l2.0 -1.2l0.9 1.5l-2.0 1.2zM1186.3 552.7l2.0 -1.3l0.8 1.4l-2.0 1.3zM1185.8 546.6l2.3 -1.4l1.0 1.5l-2.3 1.4zM1190.9 549.2l2.4 -1.5l0.9 1.4l-2.4 1.5zM1190.8 542.7l2.2 -1.3l0.7 1.2l-2.2 1.3zM1189.3 540.2l2.0 -1.3l1.0 1.5l-2.0 1.3zM1194.3 548.0l1.8 -1.1l0.7 1.1l-1.8 1.1zM1193.7 541.4l1.8 -1.1l0.8 1.3l-1.8 1.1zM1196.6 539.9l2.1 -1.3l1.1 1.7l-2.1 1.3zM1199.7 544.7l1.8 -1.2l1.0 1.7l-1.8 1.2zM1204.4 540.6l2.3 -1.4l0.8 1.3l-2.3 1.4zM1212.6 530.3l2.0 -1.3l0.8 1.3l-2.0 1.3zM1215.1 527.7l1.9 -1.2l1.0 1.6l-1.9 1.2zM1217.9 526.7l1.9 -1.2l0.9 1.4l-1.9 1.2zM1225.5 520.7l2.4 -1.5l0.9 1.5l-2.4 1.5zM1228.9 525.5l1.8 -1.1l0.9 1.4l-1.8 1.1zM1229.0 519.8l2.4 -1.5l0.8 1.2l-2.4 1.5zM1231.9 524.1l2.1 -1.3l0.9 1.4l-2.1 1.3zM1232.1 518.0l2.1 -1.3l0.8 1.3l-2.1 1.3zM1230.9 515.6l1.6 -1.0l0.8 1.3l-1.6 1.0zM1234.7 521.9l1.9 -1.2l0.8 1.3l-1.9 1.2zM1239.2 523.0l1.6 -1.0l1.1 1.7l-1.6 1.0zM1237.3 513.7l1.9 -1.2l0.7 1.1l-1.9 1.2zM1240.3 518.8l2.1 -1.3l1.0 1.6l-2.1 1.3zM1241.8 521.0l2.0 -1.2l1.1 1.7l-2.0 1.2zM1238.7 510.0l2.4 -1.5l1.0 1.5l-2.4 1.5zM1243.2 516.1l1.4 -0.9l1.1 1.7l-1.4 0.9zM1246.0 514.5l1.9 -1.2l0.9 1.4l-1.9 1.2zM1249.2 513.6l1.8 -1.1l0.9 1.5l-1.8 1.1zM1250.4 515.0l1.5 -0.9l1.1 1.8l-1.5 0.9zM1247.3 504.3l1.9 -1.2l0.9 1.4l-1.9 1.2zM1253.6 514.5l2.0 -1.3l0.8 1.2l-2.0 1.3zM1250.3 503.0l2.4 -1.5l0.9 1.5l-2.4 1.5zM1255.8 511.8l2.5 -1.5l0.9 1.4l-2.5 1.5zM1265.6 495.9l2.2 -1.3l1.1 1.7l-2.2 1.3zM1269.8 502.9l2.4 -1.5l1.0 1.6l-2.4 1.5zM1268.6 494.3l2.0 -1.2l0.7 1.2l-2.0 1.2zM1271.2 499.1l2.5 -1.5l1.0 1.5l-2.5 1.5zM1279.1 498.5l1.7 -1.1l0.9 1.4l-1.7 1.1zM1280.2 487.8l1.4 -0.9l0.9 1.5l-1.4 0.9zM1282.9 492.3l1.6 -1.0l1.0 1.5l-1.6 1.0zM1281.3 483.5l1.4 -0.9l0.8 1.2l-1.4 0.9zM1285.1 484.5l2.3 -1.5l1.0 1.7l-2.3 1.5zM1283.7 481.9l2.0 -1.2l0.8 1.3l-2.0 1.2zM1295.2 488.1l2.4 -1.5l0.7 1.1l-2.4 1.5zM1293.3 478.3l1.5 -1.0l1.0 1.6l-1.5 1.0zM1302.0 469.9l2.5 -1.6l0.7 1.1l-2.5 1.6zM1307.4 477.4l1.5 -0.9l1.0 1.7l-1.5 0.9zM1311.2 477.7l1.8 -1.1l0.9 1.4l-1.8 1.1zM1344.8 443.3l1.9 -1.2l0.9 1.4l-1.9 1.2zM1117.7 604.8l1.7 -1.1l1.0 1.6l-1.7 1.1zM1120.3 597.8l1.5 -0.9l1.0 1.6l-1.5 0.9zM1123.1 602.3l1.5 -1.0l0.9 1.4l-1.5 1.0zM1122.9 596.3l1.8 -1.1l0.9 1.4l-1.8 1.1zM1136.0 587.0l1.4 -0.9l1.0 1.7l-1.4 0.9zM1143.7 582.4l1.5 -1.0l0.8 1.2l-1.5 1.0zM1146.6 587.6l2.1 -1.3l1.1 1.7l-2.1 1.3zM1146.2 581.3l1.9 -1.2l0.8 1.3l-1.9 1.2zM1151.5 578.0l2.3 -1.4l0.9 1.4l-2.3 1.4zM1154.2 582.4l2.5 -1.6l0.8 1.3l-2.5 1.6zM1165.9 569.4l1.9 -1.2l1.0 1.7l-1.9 1.2zM1186.8 553.2l1.6 -1.0l0.7 1.1l-1.6 1.0zM1225.1 532.7l2.1 -1.3l0.8 1.2l-2.1 1.3zM1223.0 529.5l2.3 -1.4l1.0 1.6l-2.3 1.4zM1230.0 528.5l1.6 -1.0l0.9 1.4l-1.6 1.0zM1232.6 527.3l2.3 -1.5l1.0 1.6l-2.3 1.5zM1231.2 524.7l2.0 -1.3l0.7 1.2l-2.0 1.3zM1236.8 521.7l2.1 -1.3l0.8 1.3l-2.1 1.3zM1241.1 522.6l2.5 -1.5l0.7 1.1l-2.5 1.5zM1247.6 514.6l1.4 -0.9l1.1 1.7l-1.4 0.9zM1251.8 521.2l1.4 -0.8l1.1 1.8l-1.4 0.8zM1249.3 513.1l2.5 -1.6l0.9 1.5l-2.5 1.6zM1256.9 519.1l2.2 -1.4l0.8 1.3l-2.2 1.4zM1256.5 512.6l2.1 -1.3l1.0 1.5l-2.1 1.3zM1265.8 515.7l1.6 -1.0l0.8 1.3l-1.6 1.0zM1267.8 514.2l2.4 -1.5l1.0 1.6l-2.4 1.5zM1267.0 506.1l1.8 -1.1l0.8 1.3l-1.8 1.1zM1269.6 510.6l2.1 -1.3l0.8 1.3l-2.1 1.3zM1272.3 508.7l2.2 -1.4l0.9 1.5l-2.2 1.4zM1274.6 506.9l2.1 -1.3l0.9 1.5l-2.1 1.3zM1276.7 499.4l2.3 -1.4l0.8 1.2l-2.3 1.4zM1281.6 506.6l1.7 -1.1l0.9 1.4l-1.7 1.1zM1278.3 494.9l1.8 -1.1l0.9 1.5l-1.8 1.1zM1284.0 504.6l2.2 -1.4l1.1 1.7l-2.2 1.4zM1285.3 494.8l1.4 -0.9l1.0 1.5l-1.4 0.9zM1283.2 492.3l2.2 -1.4l1.1 1.7l-2.2 1.4zM1289.3 501.3l1.6 -1.0l0.7 1.1l-1.6 1.0zM1287.5 492.3l1.8 -1.1l1.0 1.6l-1.8 1.1zM1290.2 497.1l2.2 -1.4l1.1 1.7l-2.2 1.4zM1301.2 484.7l2.2 -1.3l0.8 1.3l-2.2 1.3zM1299.2 481.5l2.2 -1.3l1.0 1.7l-2.2 1.3zM1303.8 482.8l2.3 -1.4l0.9 1.5l-2.3 1.4zM1306.6 487.1l2.2 -1.4l1.0 1.6l-2.2 1.4zM1115.3 611.1l1.7 -1.0l0.9 1.4l-1.7 1.0zM1121.9 616.7l2.3 -1.4l1.0 1.5l-2.3 1.4zM1123.4 612.3l2.1 -1.3l0.7 1.2l-2.1 1.3zM1131.4 608.0l2.1 -1.3l0.7 1.2l-2.1 1.3zM1132.7 609.9l1.9 -1.2l1.0 1.6l-1.9 1.2zM1129.2 598.4l1.7 -1.1l0.9 1.5l-1.7 1.1zM1265.7 513.2l1.9 -1.2l0.8 1.4l-1.9 1.2zM1270.3 513.9l1.6 -1.0l1.0 1.7l-1.6 1.0zM1274.6 508.2l1.6 -1.0l0.8 1.2l-1.6 1.0zM1280.5 507.0l2.3 -1.4l0.8 1.2l-2.3 1.4zM1287.1 499.8l1.8 -1.1l0.8 1.3l-1.8 1.1zM1291.5 507.2l2.2 -1.4l1.1 1.7l-2.2 1.4zM1294.3 505.6l1.6 -1.0l0.7 1.2l-1.6 1.0zM1296.9 497.6l1.7 -1.1l0.8 1.4l-1.7 1.1zM1300.1 502.4l1.5 -0.9l1.1 1.7l-1.5 0.9zM1316.3 485.1l1.7 -1.1l0.9 1.4l-1.7 1.1zM1319.1 489.5l1.5 -1.0l0.9 1.4l-1.5 1.0zM1127.8 616.8l1.4 -0.9l0.8 1.3l-1.4 0.9zM1081.9 601.8l2.0 -1.3l0.8 1.2l-2.0 1.3zM1084.7 599.9l1.7 -1.0l0.9 1.4l-1.7 1.0zM1087.5 605.0l1.5 -0.9l0.9 1.4l-1.5 0.9zM1081.9 594.2l2.3 -1.4l0.8 1.3l-2.3 1.4zM1089.3 589.4l1.7 -1.1l1.0 1.6l-1.7 1.1zM1084.3 596.7l1.4 -0.9l1.0 1.6l-1.4 0.9zM1095.6 593.8l2.0 -1.3l0.7 1.1l-2.0 1.3zM1094.2 598.5l1.9 -1.2l0.8 1.3l-1.9 1.2zM1089.2 605.7l2.5 -1.6l0.7 1.1l-2.5 1.6zM1104.0 575.8l1.6 -1.0l1.0 1.7l-1.6 1.0zM1100.1 586.7l2.5 -1.6l0.9 1.5l-2.5 1.6zM1117.3 603.1l1.8 -1.1l0.9 1.5l-1.8 1.1zM1114.4 608.6l2.1 -1.3l1.1 1.8l-2.1 1.3zM1116.2 611.4l2.3 -1.4l0.8 1.3l-2.3 1.4zM1113.5 613.0l2.3 -1.4l0.9 1.5l-2.3 1.4zM1102.3 565.4l1.7 -1.0l1.0 1.6l-1.7 1.0zM1109.1 561.2l2.3 -1.4l1.0 1.5l-2.3 1.4zM1112.3 559.0l1.7 -1.1l1.1 1.8l-1.7 1.1zM1103.9 568.0l2.4 -1.5l0.9 1.5l-2.4 1.5zM1108.8 571.6l2.3 -1.4l1.0 1.6l-2.3 1.4zM1116.1 567.4l2.2 -1.4l0.7 1.1l-2.2 1.4zM1115.8 570.7l2.1 -1.3l1.1 1.7l-2.1 1.3zM1109.7 578.1l1.9 -1.2l0.9 1.5l-1.9 1.2zM1128.8 586.9l2.1 -1.3l0.9 1.5l-2.1 1.3zM1134.5 595.4l1.9 -1.2l1.0 1.6l-1.9 1.2zM1128.4 603.3l2.4 -1.5l1.0 1.5l-2.4 1.5zM1134.0 599.8l2.4 -1.5l0.8 1.4l-2.4 1.5zM1130.2 606.0l2.3 -1.5l0.8 1.4l-2.3 1.5zM1137.0 605.3l1.6 -1.0l0.9 1.4l-1.6 1.0zM1115.5 549.5l1.4 -0.9l0.9 1.5l-1.4 0.9zM1118.1 547.9l1.5 -0.9l1.0 1.6l-1.5 0.9zM1112.0 555.7l1.6 -1.0l1.1 1.7l-1.6 1.0zM1119.4 551.1l2.3 -1.4l1.1 1.8l-2.3 1.4zM1115.1 561.2l2.5 -1.5l1.0 1.5l-2.5 1.5zM1124.5 559.2l2.1 -1.3l1.1 1.7l-2.1 1.3zM1116.5 567.8l1.6 -1.0l0.9 1.5l-1.6 1.0zM1123.6 563.3l1.8 -1.1l0.9 1.5l-1.8 1.1zM1118.3 569.9l1.5 -1.0l1.0 1.7l-1.5 1.0zM1130.8 585.5l1.7 -1.1l0.9 1.5l-1.7 1.1zM1130.7 589.7l1.5 -0.9l0.8 1.2l-1.5 0.9zM1137.3 585.4l1.9 -1.2l0.9 1.5l-1.9 1.2zM1141.0 587.3l2.4 -1.5l0.7 1.2l-2.4 1.5zM1133.7 595.6l2.1 -1.3l0.8 1.2l-2.1 1.3zM1138.0 596.9l1.8 -1.1l0.9 1.4l-1.8 1.1zM1137.4 600.7l2.2 -1.4l1.0 1.6l-2.2 1.4zM1121.1 538.9l1.5 -1.0l1.0 1.5l-1.5 1.0zM1125.4 536.1l1.4 -0.9l1.1 1.7l-1.4 0.9zM1122.3 542.3l2.5 -1.6l1.0 1.6l-2.5 1.6zM1124.2 545.0l1.7 -1.1l0.7 1.1l-1.7 1.1zM1121.4 546.2l2.3 -1.4l1.1 1.8l-2.3 1.4zM1131.1 540.2l1.7 -1.0l1.1 1.7l-1.7 1.0zM1128.9 554.1l2.3 -1.4l0.8 1.3l-2.3 1.4zM1127.2 555.1l2.4 -1.5l0.9 1.4l-2.4 1.5zM1134.0 550.7l2.1 -1.3l1.0 1.6l-2.1 1.3zM1130.4 560.4l1.4 -0.9l0.7 1.1l-1.4 0.9zM1136.9 556.2l2.2 -1.4l0.9 1.4l-2.2 1.4zM1134.2 561.7l2.3 -1.4l0.9 1.4l-2.3 1.4zM1139.3 558.7l1.6 -1.0l0.7 1.1l-1.6 1.0zM1143.4 560.2l2.3 -1.4l0.8 1.3l-2.3 1.4zM1143.2 564.2l1.8 -1.2l1.0 1.6l-1.8 1.2zM1142.9 575.3l2.4 -1.5l1.1 1.7l-2.4 1.5zM1147.3 572.7l1.9 -1.2l1.0 1.5l-1.9 1.2zM1149.9 574.9l1.7 -1.1l1.1 1.7l-1.7 1.1zM1143.9 582.6l2.3 -1.4l1.0 1.6l-2.3 1.4zM1151.0 578.1l1.4 -0.9l1.0 1.6l-1.4 0.9zM1153.7 580.9l1.6 -1.0l0.7 1.1l-1.6 1.0zM1126.0 527.7l1.9 -1.2l0.8 1.3l-1.9 1.2zM1123.8 529.0l2.3 -1.4l0.8 1.3l-2.3 1.4zM1130.4 536.4l2.5 -1.5l0.8 1.3l-2.5 1.5zM1132.5 538.4l2.1 -1.3l1.0 1.6l-2.1 1.3zM1130.2 539.9l1.8 -1.1l1.0 1.6l-1.8 1.1zM1140.0 533.8l2.1 -1.3l0.9 1.4l-2.1 1.3zM1134.9 541.4l1.4 -0.9l0.8 1.2l-1.4 0.9zM1136.3 544.3l2.4 -1.5l1.0 1.5l-2.4 1.5zM1134.0 545.9l2.4 -1.5l0.8 1.2l-2.4 1.5zM1143.1 539.9l1.4 -0.9l1.0 1.7l-1.4 0.9zM1136.3 548.7l2.1 -1.3l0.8 1.2l-2.1 1.3zM1142.8 544.6l2.4 -1.5l0.8 1.2l-2.4 1.5zM1144.8 543.1l1.8 -1.1l1.0 1.6l-1.8 1.1zM1141.8 552.0l1.6 -1.0l1.1 1.7l-1.6 1.0zM1142.9 555.0l2.0 -1.2l0.9 1.4l-2.0 1.2zM1144.4 557.8l2.1 -1.3l0.8 1.3l-2.1 1.3zM1149.5 554.4l2.3 -1.4l1.0 1.6l-2.3 1.4zM1152.2 552.9l1.6 -1.0l0.8 1.3l-1.6 1.0zM1152.7 559.7l2.0 -1.3l1.1 1.7l-2.0 1.3zM1146.9 567.1l2.0 -1.2l1.1 1.8l-2.0 1.2zM1154.2 562.7l2.0 -1.2l0.9 1.4l-2.0 1.2zM1151.9 567.8l1.4 -0.9l0.9 1.5l-1.4 0.9zM1159.0 563.5l1.8 -1.1l0.7 1.2l-1.8 1.1zM1150.5 572.4l1.7 -1.0l1.1 1.7l-1.7 1.0zM1157.7 568.1l1.9 -1.2l0.9 1.4l-1.9 1.2zM1154.2 578.4l2.3 -1.5l0.8 1.3l-2.3 1.5zM1122.8 482.3l1.7 -1.1l0.7 1.2l-1.7 1.1zM1119.7 487.4l1.8 -1.1l1.0 1.6l-1.8 1.1zM1123.5 492.8l1.5 -0.9l0.8 1.3l-1.5 0.9zM1121.0 494.5l1.8 -1.1l0.7 1.2l-1.8 1.1zM1127.7 490.1l2.0 -1.2l0.9 1.4l-2.0 1.2zM1124.4 495.8l2.1 -1.3l1.1 1.7l-2.1 1.3zM1129.2 492.9l2.0 -1.3l0.9 1.4l-2.0 1.3zM1125.9 499.3l2.0 -1.3l0.8 1.4l-2.0 1.3zM1131.2 495.8l1.4 -0.9l1.0 1.6l-1.4 0.9zM1132.4 499.1l2.2 -1.4l0.8 1.3l-2.2 1.4zM1135.1 501.1l1.6 -1.0l0.9 1.5l-1.6 1.0zM1137.2 499.6l1.6 -1.0l1.1 1.7l-1.6 1.0zM1136.2 504.5l1.5 -0.9l0.9 1.5l-1.5 0.9zM1140.3 505.5l1.7 -1.1l0.8 1.3l-1.7 1.1zM1134.7 512.5l2.5 -1.6l0.9 1.4l-2.5 1.6zM1136.2 514.9l1.6 -1.0l0.9 1.5l-1.6 1.0zM1142.4 514.7l2.4 -1.5l0.8 1.3l-2.4 1.5zM1145.1 513.1l2.0 -1.2l0.7 1.2l-2.0 1.2zM1139.2 520.3l2.3 -1.5l0.9 1.4l-2.3 1.5zM1144.6 516.9l2.0 -1.2l0.9 1.4l-2.0 1.2zM1146.8 515.6l2.5 -1.5l0.8 1.2l-2.5 1.5zM1145.6 520.1l2.1 -1.3l0.7 1.1l-2.1 1.3zM1142.9 526.0l2.1 -1.3l0.7 1.1l-2.1 1.3zM1145.2 528.3l2.1 -1.3l0.7 1.1l-2.1 1.3zM1149.2 525.6l2.5 -1.6l1.0 1.6l-2.5 1.6zM1146.1 531.4l2.2 -1.4l1.0 1.6l-2.2 1.4zM1157.8 531.6l1.4 -0.9l0.8 1.3l-1.4 0.9zM1148.8 540.6l1.8 -1.2l0.8 1.4l-1.8 1.2zM1156.3 535.9l2.3 -1.4l0.9 1.5l-2.3 1.4zM1158.1 534.6l2.3 -1.4l1.0 1.7l-2.3 1.4zM1153.4 541.6l1.7 -1.1l0.7 1.1l-1.7 1.1zM1157.6 538.5l1.4 -0.9l1.1 1.8l-1.4 0.9zM1161.9 539.8l2.3 -1.5l0.9 1.4l-2.3 1.5zM1156.4 547.2l2.1 -1.3l1.0 1.6l-2.1 1.3zM1156.5 550.8l1.5 -1.0l0.8 1.3l-1.5 1.0zM1163.0 546.8l1.6 -1.0l0.8 1.3l-1.6 1.0zM1159.9 552.5l1.6 -1.0l1.0 1.6l-1.6 1.0zM1164.5 549.6l2.1 -1.3l1.0 1.6l-2.1 1.3zM1160.0 556.6l1.8 -1.1l0.8 1.2l-1.8 1.1zM1161.9 559.5l1.4 -0.9l0.8 1.2l-1.4 0.9zM1170.8 553.8l2.5 -1.5l0.9 1.4l-2.5 1.5zM1172.6 556.6l1.5 -0.9l1.1 1.7l-1.5 0.9zM1167.5 563.5l1.7 -1.1l0.9 1.4l-1.7 1.1zM1174.1 559.4l2.1 -1.3l0.9 1.4l-2.1 1.3zM1131.7 473.2l2.4 -1.5l0.8 1.3l-2.4 1.5zM1135.2 474.9l2.3 -1.5l0.7 1.2l-2.3 1.5zM1129.9 481.6l1.6 -1.0l0.9 1.5l-1.6 1.0zM1128.4 482.5l1.4 -0.9l0.9 1.5l-1.4 0.9zM1134.1 478.9l2.3 -1.5l1.0 1.6l-2.3 1.5zM1132.3 484.4l1.6 -1.0l0.8 1.3l-1.6 1.0zM1136.2 482.0l2.3 -1.4l0.7 1.2l-2.3 1.4zM1138.9 480.0l2.2 -1.4l1.0 1.7l-2.2 1.4zM1138.3 484.0l1.5 -0.9l1.0 1.5l-1.5 0.9zM1141.0 482.6l1.8 -1.1l0.7 1.1l-1.8 1.1zM1134.4 490.0l2.4 -1.5l1.1 1.8l-2.4 1.5zM1136.5 496.5l1.8 -1.2l0.7 1.1l-1.8 1.2zM1143.6 491.7l1.6 -1.0l1.1 1.7l-1.6 1.0zM1140.6 497.2l1.4 -0.9l1.1 1.7l-1.4 0.9zM1144.9 494.9l1.5 -0.9l0.7 1.1l-1.5 0.9zM1147.0 496.9l1.6 -1.0l0.9 1.5l-1.6 1.0zM1148.8 495.6l1.9 -1.2l1.1 1.7l-1.9 1.2zM1151.0 498.5l2.1 -1.3l0.7 1.2l-2.1 1.3zM1149.3 502.6l2.0 -1.2l1.0 1.6l-2.0 1.2zM1146.6 508.6l2.3 -1.5l0.8 1.3l-2.3 1.5zM1144.1 510.0l1.6 -1.0l1.0 1.6l-1.6 1.0zM1151.9 505.1l1.5 -0.9l1.1 1.7l-1.5 0.9zM1148.3 511.6l1.8 -1.2l0.9 1.5l-1.8 1.2zM1146.5 512.6l1.7 -1.0l1.1 1.7l-1.7 1.0zM1153.6 508.5l2.3 -1.4l0.8 1.2l-2.3 1.4zM1150.6 513.8l1.8 -1.2l1.0 1.6l-1.8 1.2zM1147.4 516.0l2.3 -1.5l0.9 1.4l-2.3 1.5zM1154.6 511.4l1.9 -1.2l1.0 1.6l-1.9 1.2zM1152.2 517.2l1.8 -1.1l0.7 1.2l-1.8 1.1zM1149.3 518.7l1.9 -1.2l1.0 1.5l-1.9 1.2zM1158.6 512.9l2.2 -1.4l1.0 1.6l-2.2 1.4zM1154.3 519.0l1.4 -0.9l1.0 1.7l-1.4 0.9zM1151.6 520.8l1.4 -0.9l0.9 1.4l-1.4 0.9zM1159.0 516.0l1.6 -1.0l1.1 1.7l-1.6 1.0zM1153.1 524.0l2.1 -1.3l0.8 1.3l-2.1 1.3zM1157.3 525.6l2.1 -1.3l0.7 1.2l-2.1 1.3zM1162.1 522.4l1.7 -1.1l0.9 1.4l-1.7 1.1zM1160.0 528.0l1.6 -1.0l0.7 1.2l-1.6 1.0zM1156.9 529.7l1.6 -1.0l0.9 1.5l-1.6 1.0zM1161.1 530.9l2.2 -1.4l1.0 1.7l-2.2 1.4zM1167.6 527.0l2.2 -1.4l0.9 1.5l-2.2 1.4zM1162.9 533.7l1.9 -1.2l1.1 1.7l-1.9 1.2zM1170.3 529.5l1.7 -1.1l0.7 1.2l-1.7 1.1zM1164.0 536.8l1.9 -1.2l0.7 1.2l-1.9 1.2zM1168.9 533.6l1.9 -1.2l0.8 1.3l-1.9 1.2zM1171.5 532.2l2.1 -1.3l0.7 1.1l-2.1 1.3zM1166.4 538.8l1.5 -1.0l1.1 1.7l-1.5 1.0zM1170.7 536.6l1.6 -1.0l0.7 1.1l-1.6 1.0zM1167.7 542.1l1.6 -1.0l1.0 1.6l-1.6 1.0zM1170.1 544.4l1.7 -1.0l0.9 1.5l-1.7 1.0zM1173.9 542.0l2.0 -1.3l0.9 1.5l-2.0 1.3zM1177.0 540.2l1.6 -1.0l0.8 1.3l-1.6 1.0zM1170.9 547.8l1.6 -1.0l1.1 1.8l-1.6 1.0zM1175.8 544.9l2.2 -1.4l0.9 1.5l-2.2 1.4zM1177.7 547.9l2.2 -1.4l0.8 1.2l-2.2 1.4zM1174.4 553.1l2.4 -1.5l0.9 1.5l-2.4 1.5zM1172.0 554.7l1.8 -1.1l0.9 1.5l-1.8 1.1zM1179.2 550.0l1.8 -1.1l1.1 1.7l-1.8 1.1zM1176.2 556.3l2.2 -1.4l0.8 1.2l-2.2 1.4zM1181.8 552.8l1.9 -1.2l0.8 1.3l-1.9 1.2zM1177.8 558.3l1.9 -1.2l1.1 1.7l-1.9 1.2zM1140.5 463.7l2.0 -1.2l0.8 1.3l-2.0 1.2zM1143.7 461.6l1.8 -1.2l0.9 1.4l-1.8 1.2zM1146.0 471.2l1.8 -1.1l1.0 1.7l-1.8 1.1zM1148.6 469.5l2.2 -1.4l1.1 1.7l-2.2 1.4zM1143.4 476.9l2.1 -1.3l0.9 1.4l-2.1 1.3zM1150.5 472.4l1.7 -1.0l0.9 1.5l-1.7 1.0zM1144.5 479.8l1.8 -1.2l0.7 1.1l-1.8 1.2zM1143.6 483.8l1.4 -0.9l1.0 1.7l-1.4 0.9zM1148.4 485.3l2.4 -1.5l0.8 1.3l-2.4 1.5zM1155.0 481.3l2.0 -1.3l0.7 1.1l-2.0 1.3zM1155.0 485.2l1.4 -0.9l0.8 1.2l-1.4 0.9zM1157.0 483.8l1.4 -0.9l0.9 1.5l-1.4 0.9zM1149.7 492.2l1.5 -0.9l0.9 1.5l-1.5 0.9zM1156.7 487.7l2.1 -1.3l1.1 1.7l-2.1 1.3zM1153.6 494.3l1.7 -1.0l0.7 1.1l-1.7 1.0zM1150.6 495.9l2.5 -1.6l0.9 1.5l-2.5 1.6zM1158.2 491.1l1.6 -1.0l1.0 1.7l-1.6 1.0zM1160.4 490.0l2.1 -1.3l0.7 1.1l-2.1 1.3zM1154.3 501.3l2.1 -1.3l1.0 1.6l-2.1 1.3zM1161.9 496.8l2.5 -1.6l0.8 1.3l-2.5 1.6zM1163.9 495.6l2.5 -1.6l0.8 1.3l-2.5 1.6zM1159.1 502.2l1.5 -0.9l1.0 1.7l-1.5 0.9zM1163.2 499.6l2.0 -1.2l1.1 1.8l-2.0 1.2zM1157.5 506.7l2.2 -1.3l1.0 1.6l-2.2 1.3zM1162.0 508.2l1.5 -0.9l0.7 1.2l-1.5 0.9zM1167.2 504.8l1.4 -0.9l0.9 1.4l-1.4 0.9zM1164.4 510.7l1.9 -1.2l0.8 1.3l-1.9 1.2zM1161.0 512.8l2.5 -1.5l0.9 1.4l-2.5 1.5zM1169.2 507.7l2.1 -1.3l0.9 1.4l-2.1 1.3zM1171.0 506.3l1.9 -1.2l1.1 1.7l-1.9 1.2zM1163.8 514.4l1.5 -0.9l1.0 1.7l-1.5 0.9zM1170.3 510.7l2.1 -1.3l0.7 1.2l-2.1 1.3zM1165.3 517.3l2.1 -1.3l1.1 1.8l-2.1 1.3zM1172.0 513.1l2.1 -1.3l1.1 1.8l-2.1 1.3zM1175.2 511.5l1.7 -1.0l0.8 1.2l-1.7 1.0zM1173.1 523.8l1.5 -0.9l0.9 1.4l-1.5 0.9zM1177.2 521.3l1.8 -1.1l0.9 1.4l-1.8 1.1zM1171.5 528.5l2.3 -1.4l0.9 1.4l-2.3 1.4zM1178.3 524.1l2.3 -1.4l1.0 1.6l-2.3 1.4zM1176.3 529.6l1.8 -1.1l0.8 1.3l-1.8 1.1zM1182.6 525.7l2.4 -1.5l0.8 1.3l-2.4 1.5zM1177.3 532.5l1.5 -0.9l0.8 1.3l-1.5 0.9zM1179.6 535.2l1.5 -1.0l0.9 1.4l-1.5 1.0zM1182.7 540.9l2.3 -1.4l1.0 1.7l-2.3 1.4zM1180.6 542.2l2.2 -1.4l1.1 1.7l-2.2 1.4zM1184.5 543.3l1.5 -1.0l1.1 1.7l-1.5 1.0zM1189.2 540.6l1.8 -1.2l0.9 1.4l-1.8 1.2zM1186.1 545.9l2.5 -1.6l0.9 1.4l-2.5 1.6zM1193.3 541.4l1.9 -1.2l0.9 1.4l-1.9 1.2zM1187.9 548.7l1.7 -1.0l0.7 1.1l-1.7 1.0zM1189.9 551.5l1.7 -1.0l0.8 1.3l-1.7 1.0zM1196.8 546.9l2.1 -1.3l1.0 1.6l-2.1 1.3zM1146.9 463.7l1.9 -1.2l1.0 1.6l-1.9 1.2zM1156.0 458.1l2.2 -1.4l1.0 1.6l-2.2 1.4zM1157.3 461.2l2.0 -1.2l0.9 1.4l-2.0 1.2zM1159.0 467.9l1.9 -1.2l0.8 1.3l-1.9 1.2zM1155.7 473.8l1.9 -1.2l1.0 1.6l-1.9 1.2zM1160.1 471.0l1.7 -1.1l1.0 1.6l-1.7 1.1zM1158.1 476.5l1.4 -0.9l0.7 1.1l-1.4 0.9zM1155.2 478.1l2.4 -1.5l0.8 1.3l-2.4 1.5zM1158.9 479.2l1.5 -0.9l1.1 1.7l-1.5 0.9zM1156.3 480.9l1.8 -1.1l1.0 1.6l-1.8 1.1zM1163.1 476.5l2.5 -1.6l1.1 1.7l-2.5 1.6zM1161.5 481.8l1.8 -1.1l0.8 1.3l-1.8 1.1zM1167.7 477.8l2.2 -1.3l0.9 1.5l-2.2 1.3zM1163.7 487.7l2.3 -1.5l1.1 1.7l-2.3 1.5zM1163.8 492.2l2.4 -1.5l0.8 1.3l-2.4 1.5zM1168.2 492.5l1.5 -1.0l1.0 1.6l-1.5 1.0zM1172.1 490.3l2.2 -1.4l0.7 1.2l-2.2 1.4zM1175.2 488.2l1.7 -1.0l1.0 1.6l-1.7 1.0zM1171.6 498.7l1.8 -1.1l0.8 1.3l-1.8 1.1zM1169.2 500.3l1.9 -1.2l0.7 1.1l-1.9 1.2zM1176.1 495.8l2.3 -1.4l0.9 1.5l-2.3 1.4zM1177.9 498.8l1.8 -1.1l0.8 1.3l-1.8 1.1zM1179.5 501.5l1.8 -1.1l1.1 1.8l-1.8 1.1zM1182.0 504.5l1.6 -1.0l0.8 1.3l-1.6 1.0zM1178.3 510.2l1.9 -1.2l0.9 1.4l-1.9 1.2zM1183.6 507.1l1.8 -1.1l0.7 1.1l-1.8 1.1zM1179.8 512.7l2.5 -1.6l1.0 1.6l-2.5 1.6zM1187.5 507.9l1.9 -1.2l1.0 1.6l-1.9 1.2zM1182.1 515.0l1.8 -1.1l0.7 1.1l-1.8 1.1zM1178.9 516.8l1.9 -1.2l0.9 1.5l-1.9 1.2zM1187.0 511.8l1.4 -0.9l0.8 1.2l-1.4 0.9zM1182.7 517.7l1.7 -1.1l1.0 1.6l-1.7 1.1zM1187.8 514.8l2.2 -1.4l0.7 1.1l-2.2 1.4zM1184.2 520.2l2.5 -1.5l1.0 1.6l-2.5 1.5zM1182.7 521.4l2.2 -1.4l0.7 1.2l-2.2 1.4zM1192.5 538.1l1.9 -1.2l0.8 1.2l-1.9 1.2zM1196.6 539.1l1.5 -1.0l0.8 1.3l-1.5 1.0zM1204.6 542.1l2.3 -1.4l0.9 1.4l-2.3 1.4zM1158.6 450.8l2.1 -1.3l1.0 1.5l-2.1 1.3zM1162.9 448.1l2.5 -1.5l0.9 1.5l-2.5 1.5zM1165.1 446.5l2.4 -1.5l1.1 1.7l-2.4 1.5zM1160.5 453.9l1.8 -1.1l0.7 1.2l-1.8 1.1zM1158.4 455.2l2.5 -1.6l0.7 1.2l-2.5 1.6zM1162.9 456.3l1.7 -1.0l0.7 1.2l-1.7 1.0zM1166.4 453.8l2.1 -1.3l1.0 1.6l-2.1 1.3zM1163.2 459.8l2.5 -1.5l0.9 1.4l-2.5 1.5zM1168.7 456.6l2.2 -1.4l0.7 1.1l-2.2 1.4zM1170.9 469.8l2.1 -1.3l1.0 1.6l-2.1 1.3zM1175.2 467.0l1.5 -0.9l1.1 1.8l-1.5 0.9zM1170.1 474.4l1.7 -1.0l1.0 1.6l-1.7 1.0zM1177.2 470.0l2.4 -1.5l1.0 1.6l-2.4 1.5zM1178.8 468.9l2.5 -1.6l1.1 1.7l-2.5 1.6zM1174.3 475.6l2.5 -1.5l0.9 1.4l-2.5 1.5zM1180.7 475.4l2.2 -1.3l0.7 1.2l-2.2 1.3zM1177.4 481.2l2.1 -1.3l1.0 1.5l-2.1 1.3zM1178.9 483.4l1.7 -1.1l1.1 1.7l-1.7 1.1zM1178.3 488.1l1.5 -0.9l0.9 1.5l-1.5 0.9zM1187.4 486.7l1.6 -1.0l0.8 1.3l-1.6 1.0zM1184.3 492.0l2.1 -1.3l0.9 1.5l-2.1 1.3zM1182.0 493.3l1.5 -1.0l1.0 1.7l-1.5 1.0zM1189.5 489.0l1.5 -0.9l0.7 1.2l-1.5 0.9zM1183.4 496.6l2.2 -1.4l1.1 1.7l-2.2 1.4zM1188.2 497.8l1.9 -1.2l1.0 1.6l-1.9 1.2zM1188.5 504.9l2.4 -1.5l0.8 1.2l-2.4 1.5zM1212.1 519.9l1.6 -1.0l0.9 1.4l-1.6 1.0zM1210.1 532.3l1.6 -1.0l0.9 1.4l-1.6 1.0zM1216.9 528.1l1.6 -1.0l0.8 1.3l-1.6 1.0zM1171.0 442.2l1.6 -1.0l0.7 1.2l-1.6 1.0zM1170.1 446.5l2.4 -1.5l0.8 1.3l-2.4 1.5zM1179.5 440.5l1.8 -1.1l0.9 1.4l-1.8 1.1zM1174.9 447.8l1.4 -0.9l0.7 1.2l-1.4 0.9zM1178.7 445.1l1.8 -1.1l1.0 1.7l-1.8 1.1zM1180.3 448.2l2.2 -1.4l0.9 1.4l-2.2 1.4zM1175.2 455.3l2.2 -1.4l1.0 1.5l-2.2 1.4zM1185.3 449.1l1.8 -1.1l0.9 1.5l-1.8 1.1zM1184.0 454.0l2.3 -1.4l0.8 1.4l-2.3 1.4zM1186.1 452.8l2.3 -1.4l0.7 1.1l-2.3 1.4zM1185.9 456.3l1.6 -1.0l0.8 1.3l-1.6 1.0zM1188.4 454.8l2.3 -1.5l0.8 1.3l-2.3 1.5zM1182.8 462.4l1.6 -1.0l0.8 1.3l-1.6 1.0zM1187.2 459.8l2.2 -1.4l0.7 1.1l-2.2 1.4zM1186.8 467.1l1.6 -1.0l1.0 1.6l-1.6 1.0zM1183.6 469.2l2.1 -1.3l1.0 1.6l-2.1 1.3zM1191.0 464.8l2.0 -1.3l0.7 1.2l-2.0 1.3zM1187.8 470.5l1.7 -1.1l0.7 1.1l-1.7 1.1zM1189.4 472.6l1.9 -1.2l1.1 1.7l-1.9 1.2zM1193.8 469.8l2.3 -1.4l1.1 1.7l-2.3 1.4zM1196.2 472.7l1.8 -1.1l0.9 1.4l-1.8 1.1zM1192.7 478.7l1.8 -1.1l1.0 1.6l-1.8 1.1zM1200.8 473.9l2.0 -1.3l0.7 1.2l-2.0 1.3zM1195.0 481.2l2.2 -1.4l0.9 1.4l-2.2 1.4zM1193.2 482.3l1.4 -0.9l0.8 1.4l-1.4 0.9zM1196.7 484.0l2.3 -1.4l1.1 1.7l-2.3 1.4zM1203.3 480.0l2.5 -1.6l0.9 1.5l-2.5 1.6zM1203.3 484.1l1.6 -1.0l0.8 1.3l-1.6 1.0zM1205.3 482.9l1.9 -1.2l0.8 1.3l-1.9 1.2zM1209.4 487.8l1.5 -0.9l0.9 1.4l-1.5 0.9zM1216.5 498.8l1.4 -0.9l1.0 1.5l-1.4 0.9zM1212.5 509.0l2.4 -1.5l0.7 1.2l-2.4 1.5zM1216.8 506.1l1.4 -0.9l0.9 1.5l-1.4 0.9zM1214.2 511.5l1.6 -1.0l1.0 1.6l-1.6 1.0zM1219.1 508.8l2.4 -1.5l0.7 1.2l-2.4 1.5zM1220.9 507.2l1.6 -1.0l1.1 1.8l-1.6 1.0zM1215.9 514.6l1.8 -1.1l0.8 1.3l-1.8 1.1zM1213.6 516.2l1.6 -1.0l0.7 1.1l-1.6 1.0zM1222.1 514.8l1.7 -1.1l0.9 1.5l-1.7 1.1zM1224.3 513.3l1.7 -1.1l1.1 1.7l-1.7 1.1zM1219.3 520.2l2.2 -1.4l1.1 1.7l-2.2 1.4zM1216.7 522.0l1.9 -1.2l0.9 1.4l-1.9 1.2zM1221.6 522.6l1.6 -1.0l1.1 1.8l-1.6 1.0zM1225.8 520.3l1.7 -1.1l0.7 1.2l-1.7 1.1zM1222.9 525.4l2.1 -1.3l1.0 1.6l-2.1 1.3zM1229.4 525.3l1.7 -1.1l0.9 1.4l-1.7 1.1zM1226.4 530.6l1.6 -1.0l0.9 1.4l-1.6 1.0zM1223.1 532.7l2.0 -1.2l0.9 1.4l-2.0 1.2zM1182.5 441.6l1.7 -1.1l0.9 1.4l-1.7 1.1zM1187.4 438.6l2.4 -1.5l0.9 1.4l-2.4 1.5zM1183.2 448.8l2.2 -1.4l0.7 1.2l-2.2 1.4zM1190.9 443.7l1.7 -1.0l0.9 1.5l-1.7 1.0zM1192.4 442.8l2.2 -1.4l0.9 1.4l-2.2 1.4zM1191.7 447.0l2.5 -1.5l0.7 1.2l-2.5 1.5zM1193.5 448.8l2.3 -1.4l1.1 1.7l-2.3 1.4zM1189.6 454.6l2.5 -1.6l1.0 1.5l-2.5 1.6zM1187.9 455.9l2.3 -1.4l0.8 1.2l-2.3 1.4zM1194.6 451.8l2.3 -1.4l0.7 1.1l-2.3 1.4zM1197.3 449.9l2.1 -1.3l0.9 1.5l-2.1 1.3zM1191.5 457.2l2.1 -1.3l0.9 1.5l-2.1 1.3zM1193.1 459.8l2.3 -1.4l0.8 1.3l-2.3 1.4zM1196.0 461.5l1.4 -0.9l1.0 1.6l-1.4 0.9zM1200.2 458.8l1.5 -0.9l1.1 1.7l-1.5 0.9zM1197.0 464.6l1.6 -1.0l1.0 1.5l-1.6 1.0zM1194.7 466.1l2.0 -1.2l0.9 1.4l-2.0 1.2zM1201.6 461.9l1.8 -1.1l0.8 1.3l-1.8 1.1zM1203.7 460.6l2.0 -1.2l0.8 1.3l-2.0 1.2zM1198.8 467.1l1.7 -1.1l1.0 1.6l-1.7 1.1zM1205.0 467.4l1.6 -1.0l0.9 1.5l-1.6 1.0zM1199.4 475.0l2.5 -1.6l0.7 1.2l-2.5 1.6zM1204.4 475.5l1.4 -0.9l0.9 1.4l-1.4 0.9zM1208.2 473.3l2.1 -1.3l0.8 1.3l-2.1 1.3zM1211.7 471.0l1.7 -1.0l0.9 1.4l-1.7 1.0zM1205.5 478.9l1.9 -1.2l0.9 1.4l-1.9 1.2zM1210.3 475.9l1.6 -1.0l0.9 1.5l-1.6 1.0zM1209.0 484.8l2.1 -1.3l0.7 1.1l-2.1 1.3zM1216.5 479.8l1.4 -0.9l1.0 1.5l-1.4 0.9zM1217.7 482.4l1.9 -1.2l1.0 1.6l-1.9 1.2zM1216.8 486.5l2.1 -1.3l0.9 1.5l-2.1 1.3zM1219.8 484.4l1.8 -1.1l1.1 1.8l-1.8 1.1zM1213.7 492.1l1.9 -1.2l0.9 1.4l-1.9 1.2zM1219.1 488.6l1.4 -0.9l1.0 1.7l-1.4 0.9zM1215.6 494.9l1.5 -0.9l1.0 1.6l-1.5 0.9zM1213.4 496.4l2.4 -1.5l0.9 1.4l-2.4 1.5zM1217.2 497.4l1.7 -1.1l1.0 1.5l-1.7 1.1zM1222.2 494.5l1.7 -1.1l0.8 1.3l-1.7 1.1zM1224.1 493.1l1.8 -1.1l0.9 1.5l-1.8 1.1zM1216.9 502.1l1.5 -1.0l0.7 1.1l-1.5 1.0zM1224.0 497.4l2.0 -1.3l1.0 1.5l-2.0 1.3zM1226.5 496.1l1.7 -1.1l0.7 1.2l-1.7 1.1zM1218.1 504.8l2.0 -1.3l1.1 1.8l-2.0 1.3zM1226.2 499.9l1.5 -0.9l0.9 1.4l-1.5 0.9zM1228.0 498.8l1.6 -1.0l1.0 1.6l-1.6 1.0zM1223.1 505.6l1.8 -1.2l0.9 1.4l-1.8 1.2zM1227.9 502.8l1.8 -1.1l0.7 1.1l-1.8 1.1zM1224.8 508.0l1.7 -1.0l0.9 1.5l-1.7 1.0zM1226.8 511.0l1.5 -0.9l0.8 1.3l-1.5 0.9zM1223.2 513.2l2.5 -1.6l0.8 1.3l-2.5 1.6zM1230.8 508.2l2.4 -1.5l1.0 1.6l-2.4 1.5zM1233.4 506.7l2.1 -1.3l1.0 1.6l-2.1 1.3zM1228.8 517.1l2.4 -1.5l0.7 1.1l-2.4 1.5zM1226.7 518.3l2.2 -1.4l0.8 1.2l-2.2 1.4zM1234.1 513.7l1.8 -1.1l0.8 1.2l-1.8 1.1zM1235.8 516.2l2.3 -1.4l1.1 1.7l-2.3 1.4zM1231.9 526.5l2.0 -1.2l0.7 1.1l-2.0 1.2zM1239.3 521.7l1.4 -0.9l0.9 1.4l-1.4 0.9zM1236.7 527.0l1.6 -1.0l1.0 1.6l-1.6 1.0zM1194.6 436.6l1.8 -1.1l0.9 1.4l-1.8 1.1zM1198.9 434.1l2.4 -1.5l0.7 1.1l-2.4 1.5zM1193.6 440.5l1.7 -1.0l0.9 1.5l-1.7 1.0zM1200.4 436.4l2.4 -1.5l0.8 1.2l-2.4 1.5zM1202.8 438.9l2.1 -1.3l0.9 1.4l-2.1 1.3zM1199.7 444.9l2.5 -1.6l0.7 1.1l-2.5 1.6zM1197.6 445.9l1.9 -1.2l0.9 1.5l-1.9 1.2zM1201.6 446.5l1.6 -1.0l1.1 1.8l-1.6 1.0zM1202.8 449.9l1.5 -0.9l1.1 1.8l-1.5 0.9zM1208.0 447.0l2.3 -1.4l0.8 1.2l-2.3 1.4zM1206.7 454.3l1.7 -1.1l1.1 1.7l-1.7 1.1zM1211.0 451.9l2.1 -1.3l0.8 1.3l-2.1 1.3zM1208.1 457.6l1.9 -1.2l1.0 1.5l-1.9 1.2zM1205.2 459.5l2.2 -1.4l0.9 1.4l-2.2 1.4zM1208.8 460.6l2.5 -1.5l0.8 1.2l-2.5 1.5zM1206.7 462.0l2.0 -1.2l0.7 1.1l-2.0 1.2zM1216.6 455.5l1.5 -0.9l1.0 1.6l-1.5 0.9zM1211.0 463.4l1.9 -1.2l0.7 1.1l-1.9 1.2zM1213.3 465.2l1.7 -1.1l0.8 1.3l-1.7 1.1zM1220.5 460.5l1.5 -1.0l1.0 1.6l-1.5 1.0zM1218.8 465.2l2.0 -1.3l0.9 1.5l-2.0 1.3zM1220.8 467.7l2.3 -1.5l0.9 1.4l-2.3 1.5zM1223.6 466.1l1.9 -1.2l0.8 1.3l-1.9 1.2zM1217.3 473.5l2.3 -1.5l0.7 1.1l-2.3 1.5zM1221.8 470.3l1.9 -1.2l1.1 1.7l-1.9 1.2zM1224.9 468.7l2.1 -1.3l0.8 1.2l-2.1 1.3zM1219.0 475.9l2.4 -1.5l0.9 1.4l-2.4 1.5zM1217.0 477.3l2.3 -1.5l0.7 1.2l-2.3 1.5zM1223.9 472.6l2.1 -1.3l1.1 1.7l-2.1 1.3zM1221.1 478.3l2.0 -1.2l0.8 1.2l-2.0 1.2zM1218.1 479.9l2.3 -1.4l1.0 1.6l-2.3 1.4zM1226.1 475.3l1.7 -1.1l0.7 1.1l-1.7 1.1zM1222.0 480.8l1.7 -1.1l1.0 1.6l-1.7 1.1zM1219.8 482.2l2.0 -1.2l1.0 1.7l-2.0 1.2zM1226.9 477.7l2.2 -1.4l1.0 1.7l-2.2 1.4zM1229.1 480.0l1.8 -1.1l0.8 1.3l-1.8 1.1zM1229.8 483.0l2.0 -1.2l0.9 1.4l-2.0 1.2zM1232.1 485.5l1.9 -1.2l1.1 1.7l-1.9 1.2zM1226.4 492.9l1.9 -1.2l1.0 1.6l-1.9 1.2zM1233.9 488.4l2.3 -1.4l0.9 1.4l-2.3 1.4zM1236.1 487.0l2.1 -1.3l0.9 1.4l-2.1 1.3zM1235.9 490.7l1.7 -1.1l0.9 1.4l-1.7 1.1zM1232.1 496.6l1.5 -1.0l0.8 1.3l-1.5 1.0zM1229.6 497.9l1.8 -1.1l1.1 1.7l-1.8 1.1zM1237.0 493.4l2.4 -1.5l0.9 1.4l-2.4 1.5zM1233.6 498.7l1.8 -1.1l1.1 1.7l-1.8 1.1zM1238.4 496.0l2.3 -1.4l0.8 1.2l-2.3 1.4zM1241.0 494.4l1.5 -1.0l0.8 1.2l-1.5 1.0zM1235.7 500.9l1.6 -1.0l1.1 1.7l-1.6 1.0zM1233.1 502.9l2.1 -1.3l0.7 1.2l-2.1 1.3zM1242.2 497.2l2.4 -1.5l0.8 1.2l-2.4 1.5zM1241.4 501.6l2.4 -1.5l0.9 1.5l-2.4 1.5zM1243.7 504.2l2.1 -1.3l0.7 1.1l-2.1 1.3zM1246.2 502.4l1.5 -1.0l1.0 1.6l-1.5 1.0zM1238.2 511.5l2.1 -1.3l0.8 1.2l-2.1 1.3zM1245.6 506.8l2.0 -1.3l0.8 1.3l-2.0 1.3zM1241.8 512.7l2.4 -1.5l0.8 1.2l-2.4 1.5zM1246.9 509.4l2.2 -1.4l0.9 1.5l-2.2 1.4zM1249.8 507.7l1.6 -1.0l0.8 1.3l-1.6 1.0zM1243.2 515.4l2.5 -1.6l0.9 1.4l-2.5 1.6zM1248.2 512.3l2.4 -1.5l0.8 1.3l-2.4 1.5zM1245.4 517.7l1.4 -0.9l0.9 1.4l-1.4 0.9zM1245.3 521.8l1.4 -0.9l0.8 1.3l-1.4 0.9zM1252.3 517.6l2.2 -1.4l0.7 1.1l-2.2 1.4zM1254.9 516.0l1.9 -1.2l0.7 1.1l-1.9 1.2zM1205.5 433.1l2.1 -1.3l0.7 1.2l-2.1 1.3zM1206.7 436.3l2.1 -1.3l0.9 1.5l-2.1 1.3zM1212.1 433.0l1.8 -1.1l0.8 1.3l-1.8 1.1zM1214.3 431.7l1.5 -0.9l0.8 1.3l-1.5 0.9zM1207.9 439.2l2.2 -1.4l1.0 1.6l-2.2 1.4zM1210.0 445.4l1.9 -1.2l0.9 1.4l-1.9 1.2zM1214.0 447.0l2.3 -1.5l0.9 1.4l-2.3 1.5zM1214.9 449.9l2.4 -1.5l0.9 1.4l-2.4 1.5zM1224.8 447.4l1.4 -0.9l0.9 1.5l-1.4 0.9zM1225.3 450.7l2.3 -1.5l1.1 1.7l-2.3 1.5zM1225.3 454.6l1.8 -1.1l0.9 1.5l-1.8 1.1zM1226.9 453.6l2.4 -1.5l1.0 1.7l-2.4 1.5zM1222.4 460.8l1.8 -1.1l0.8 1.2l-1.8 1.1zM1219.6 462.6l2.2 -1.4l0.7 1.1l-2.2 1.4zM1229.4 456.4l2.0 -1.2l0.8 1.3l-2.0 1.2zM1228.9 460.7l2.3 -1.4l0.9 1.5l-2.3 1.4zM1226.0 466.6l1.8 -1.1l0.9 1.5l-1.8 1.1zM1230.3 463.8l2.3 -1.4l1.0 1.7l-2.3 1.4zM1232.5 466.2l2.1 -1.3l0.7 1.1l-2.1 1.3zM1233.9 464.9l2.5 -1.6l1.1 1.8l-2.5 1.6zM1229.1 471.9l2.2 -1.4l1.0 1.5l-2.2 1.4zM1233.8 468.9l2.4 -1.5l1.1 1.7l-2.4 1.5zM1230.8 475.0l1.5 -0.9l0.7 1.1l-1.5 0.9zM1239.3 476.8l1.4 -0.9l0.8 1.3l-1.4 0.9zM1234.0 483.9l1.6 -1.0l0.8 1.2l-1.6 1.0zM1240.6 479.7l1.6 -1.0l0.8 1.2l-1.6 1.0zM1243.3 478.0l1.8 -1.1l0.9 1.4l-1.8 1.1zM1238.8 488.5l2.5 -1.6l0.8 1.3l-2.5 1.6zM1243.8 485.2l2.3 -1.4l0.9 1.5l-2.3 1.4zM1246.2 483.6l2.4 -1.5l1.0 1.7l-2.4 1.5zM1240.9 490.9l2.4 -1.5l0.9 1.4l-2.4 1.5zM1245.5 488.0l1.9 -1.2l0.8 1.3l-1.9 1.2zM1252.0 491.3l1.5 -1.0l1.1 1.7l-1.5 1.0zM1245.9 499.1l2.1 -1.3l0.9 1.5l-2.1 1.3zM1253.3 494.3l2.4 -1.5l1.1 1.7l-2.4 1.5zM1252.7 510.4l1.8 -1.1l0.7 1.1l-1.8 1.1zM1256.5 515.9l1.9 -1.2l1.1 1.8l-1.9 1.2zM1220.3 428.9l1.9 -1.2l1.1 1.7l-1.9 1.2zM1219.0 430.1l1.5 -0.9l0.8 1.2l-1.5 0.9zM1220.1 433.4l1.7 -1.0l1.0 1.5l-1.7 1.0zM1228.8 431.5l1.4 -0.9l1.1 1.7l-1.4 0.9zM1225.4 437.4l2.1 -1.3l0.9 1.4l-2.1 1.3zM1228.1 439.5l2.0 -1.2l0.7 1.2l-2.0 1.2zM1225.1 441.4l2.4 -1.5l0.8 1.2l-2.4 1.5zM1234.2 439.3l2.5 -1.5l1.1 1.7l-2.5 1.5zM1235.6 442.5l1.7 -1.0l0.9 1.5l-1.7 1.0zM1232.8 448.6l1.4 -0.9l0.7 1.2l-1.4 0.9zM1237.2 445.9l2.2 -1.4l0.7 1.2l-2.2 1.4zM1240.1 443.6l1.6 -1.0l1.1 1.8l-1.6 1.0zM1242.5 446.3l1.6 -1.0l1.0 1.6l-1.6 1.0zM1236.0 453.8l1.9 -1.2l1.1 1.8l-1.9 1.2zM1233.8 455.2l1.5 -0.9l1.1 1.8l-1.5 0.9zM1241.2 451.0l2.1 -1.3l0.7 1.1l-2.1 1.3zM1239.8 459.2l2.1 -1.3l1.0 1.6l-2.1 1.3zM1246.6 458.6l1.7 -1.0l0.8 1.3l-1.7 1.0zM1242.9 465.2l1.9 -1.2l0.7 1.2l-1.9 1.2zM1247.8 462.0l2.2 -1.4l0.8 1.2l-2.2 1.4zM1245.0 467.3l2.0 -1.2l0.7 1.2l-2.0 1.2zM1243.0 468.4l1.7 -1.0l1.0 1.5l-1.7 1.0zM1251.2 467.1l2.2 -1.4l1.0 1.5l-2.2 1.4zM1247.8 472.8l2.1 -1.3l1.1 1.7l-2.1 1.3zM1252.4 470.0l2.2 -1.4l1.0 1.6l-2.2 1.4zM1255.6 468.3l1.5 -0.9l0.7 1.2l-1.5 0.9zM1247.3 476.6l2.4 -1.5l1.0 1.6l-2.4 1.5zM1254.7 472.0l1.7 -1.1l1.1 1.7l-1.7 1.1zM1253.7 480.4l1.7 -1.1l0.7 1.2l-1.7 1.1zM1251.0 481.8l2.3 -1.4l0.9 1.4l-2.3 1.4zM1258.0 477.5l1.9 -1.2l0.8 1.4l-1.9 1.2zM1260.2 476.0l2.3 -1.5l1.0 1.6l-2.3 1.5zM1262.1 478.8l1.7 -1.0l1.0 1.7l-1.7 1.0zM1257.8 489.2l2.3 -1.5l1.0 1.6l-2.3 1.5zM1262.8 486.3l1.6 -1.0l0.8 1.2l-1.6 1.0zM1259.8 491.9l1.5 -0.9l1.1 1.8l-1.5 0.9zM1264.6 489.2l1.9 -1.2l0.8 1.2l-1.9 1.2zM1267.8 494.4l2.5 -1.5l1.0 1.7l-2.5 1.5zM1271.3 500.2l2.4 -1.5l0.7 1.2l-2.4 1.5zM1268.7 509.7l1.5 -0.9l0.8 1.3l-1.5 0.9zM1278.9 507.0l2.2 -1.4l0.9 1.4l-2.2 1.4zM1273.3 514.2l2.0 -1.3l0.8 1.3l-2.0 1.3zM1279.0 510.4l2.0 -1.2l1.0 1.6l-2.0 1.2zM1241.6 423.4l2.1 -1.3l1.0 1.6l-2.1 1.3zM1247.1 431.7l2.2 -1.4l0.9 1.5l-2.2 1.4zM1255.3 437.6l1.6 -1.0l0.7 1.2l-1.6 1.0zM1253.8 442.4l1.6 -1.0l1.0 1.6l-1.6 1.0zM1248.7 449.4l2.3 -1.4l0.9 1.4l-2.3 1.4zM1255.4 445.0l1.5 -1.0l1.0 1.7l-1.5 1.0zM1253.4 450.6l1.5 -1.0l0.8 1.3l-1.5 1.0zM1257.6 447.8l2.2 -1.4l1.0 1.5l-2.2 1.4zM1254.8 453.2l1.7 -1.1l0.7 1.1l-1.7 1.1zM1259.1 450.6l1.8 -1.2l0.7 1.1l-1.8 1.2zM1261.0 449.2l1.9 -1.2l0.8 1.3l-1.9 1.2zM1255.5 455.9l1.9 -1.2l1.0 1.5l-1.9 1.2zM1259.1 460.9l2.0 -1.3l1.0 1.6l-2.0 1.3zM1266.9 463.1l2.4 -1.5l0.9 1.5l-2.4 1.5zM1264.3 468.5l2.0 -1.2l0.9 1.4l-2.0 1.2zM1265.1 476.2l1.8 -1.1l0.8 1.3l-1.8 1.1zM1268.9 480.9l1.9 -1.2l0.7 1.1l-1.9 1.2zM1279.3 481.2l1.4 -0.9l1.1 1.8l-1.4 0.9zM1275.3 488.1l2.4 -1.5l1.0 1.6l-2.4 1.5zM1277.0 490.9l2.4 -1.5l1.1 1.7l-2.4 1.5zM1274.8 492.4l2.4 -1.5l1.0 1.6l-2.4 1.5zM1281.3 495.5l1.4 -0.9l0.9 1.4l-1.4 0.9zM1283.0 498.5l1.5 -0.9l0.7 1.2l-1.5 0.9zM1286.8 495.8l2.3 -1.5l1.0 1.7l-2.3 1.5zM1289.8 494.0l2.2 -1.4l0.9 1.5l-2.2 1.4zM1283.7 501.9l2.3 -1.4l1.0 1.6l-2.3 1.4zM1289.0 498.7l2.5 -1.5l0.8 1.3l-2.5 1.5zM1291.5 497.1l2.1 -1.3l0.9 1.4l-2.1 1.3zM1290.8 501.6l1.6 -1.0l0.7 1.1l-1.6 1.0zM1285.1 508.8l2.1 -1.3l1.0 1.6l-2.1 1.3zM1253.6 420.3l1.4 -0.9l0.7 1.2l-1.4 0.9zM1250.5 425.4l2.0 -1.2l1.0 1.6l-2.0 1.2zM1254.7 422.8l1.6 -1.0l0.9 1.4l-1.6 1.0zM1252.0 428.5l2.2 -1.3l0.7 1.1l-2.2 1.3zM1258.6 424.1l1.7 -1.1l0.9 1.5l-1.7 1.1zM1257.1 436.3l1.4 -0.9l0.9 1.4l-1.4 0.9zM1258.9 439.3l1.6 -1.0l0.7 1.2l-1.6 1.0zM1266.8 437.7l2.3 -1.4l1.0 1.7l-2.3 1.4zM1269.2 444.2l1.6 -1.0l0.8 1.3l-1.6 1.0zM1270.2 443.6l2.4 -1.5l0.8 1.2l-2.4 1.5zM1265.5 450.0l2.5 -1.6l0.9 1.5l-2.5 1.6zM1270.3 447.3l2.3 -1.4l0.7 1.1l-2.3 1.4zM1267.3 452.7l2.2 -1.4l1.1 1.8l-2.2 1.4zM1272.2 449.8l1.4 -0.9l1.0 1.6l-1.4 0.9zM1270.4 458.9l2.5 -1.6l0.9 1.4l-2.5 1.6zM1278.7 476.8l1.9 -1.2l0.8 1.2l-1.9 1.2zM1288.4 470.5l1.4 -0.9l1.0 1.5l-1.4 0.9zM1286.9 475.0l2.5 -1.5l0.9 1.4l-2.5 1.5zM1281.7 481.5l2.4 -1.5l0.9 1.4l-2.4 1.5zM1285.3 482.9l1.8 -1.1l1.0 1.6l-1.8 1.1zM1292.8 478.6l2.0 -1.2l0.7 1.2l-2.0 1.2zM1293.7 496.3l1.9 -1.2l0.9 1.5l-1.9 1.2zM1298.6 493.1l1.7 -1.1l1.1 1.7l-1.7 1.1zM1303.7 494.4l1.6 -1.0l0.8 1.2l-1.6 1.0zM1297.3 505.7l1.6 -1.0l1.0 1.7l-1.6 1.0zM1255.3 415.5l1.9 -1.2l0.9 1.4l-1.9 1.2zM1265.3 417.2l2.5 -1.6l0.7 1.1l-2.5 1.6zM1270.5 425.0l1.8 -1.1l1.0 1.6l-1.8 1.1zM1272.9 423.8l1.6 -1.0l0.7 1.2l-1.6 1.0zM1272.4 427.3l2.0 -1.2l0.8 1.4l-2.0 1.2zM1268.8 433.5l2.4 -1.5l0.8 1.3l-2.4 1.5zM1274.1 429.8l1.6 -1.0l1.1 1.7l-1.6 1.0zM1270.4 435.8l2.2 -1.4l1.1 1.8l-2.2 1.4zM1278.0 431.3l2.2 -1.4l0.8 1.3l-2.2 1.4zM1272.2 438.7l2.1 -1.3l1.0 1.6l-2.1 1.3zM1271.5 442.8l2.5 -1.5l1.1 1.8l-2.5 1.5zM1281.2 441.1l1.8 -1.1l0.9 1.5l-1.8 1.1zM1277.4 447.1l2.0 -1.2l0.8 1.2l-2.0 1.2zM1282.9 455.9l2.2 -1.4l0.9 1.4l-2.2 1.4zM1285.0 458.1l2.0 -1.2l0.8 1.3l-2.0 1.2zM1289.6 455.1l1.4 -0.9l0.9 1.5l-1.4 0.9zM1290.7 458.1l2.5 -1.6l0.8 1.3l-2.5 1.6zM1286.1 464.6l2.2 -1.4l0.8 1.3l-2.2 1.4zM1293.6 463.3l2.5 -1.6l0.9 1.5l-2.5 1.6zM1296.7 465.0l1.5 -0.9l0.9 1.5l-1.5 0.9zM1294.7 473.9l2.5 -1.6l0.9 1.4l-2.5 1.6zM1298.2 479.4l1.7 -1.1l0.8 1.4l-1.7 1.1zM1304.2 479.2l1.8 -1.1l0.9 1.5l-1.8 1.1zM1302.9 487.5l2.2 -1.4l0.8 1.3l-2.2 1.4zM1300.6 488.9l2.5 -1.6l0.8 1.3l-2.5 1.6zM1310.4 482.7l1.6 -1.0l0.8 1.3l-1.6 1.0zM1302.2 491.6l1.9 -1.2l1.0 1.6l-1.9 1.2zM1304.5 493.7l1.8 -1.1l0.9 1.4l-1.8 1.1zM1311.1 489.7l1.6 -1.0l0.9 1.4l-1.6 1.0zM1307.7 495.6l2.1 -1.3l0.9 1.4l-2.1 1.3zM1313.4 491.9l1.7 -1.0l0.9 1.5l-1.7 1.0zM1271.4 417.6l2.1 -1.3l0.7 1.2l-2.1 1.3zM1279.5 420.3l2.4 -1.5l0.9 1.4l-2.4 1.5zM1277.3 425.5l2.4 -1.5l0.9 1.5l-2.4 1.5zM1285.0 427.7l1.8 -1.1l0.8 1.2l-1.8 1.1zM1289.0 428.9l2.5 -1.6l1.0 1.6l-2.5 1.6zM1288.7 432.9l1.6 -1.0l0.7 1.2l-1.6 1.0zM1293.4 440.7l1.8 -1.1l1.0 1.5l-1.8 1.1zM1295.4 443.2l2.0 -1.2l1.0 1.6l-2.0 1.2zM1297.0 446.0l1.8 -1.1l0.7 1.1l-1.8 1.1zM1294.9 459.1l1.4 -0.9l0.9 1.5l-1.4 0.9zM1298.7 460.4l2.1 -1.3l0.9 1.4l-2.1 1.3zM1298.1 464.9l1.6 -1.0l0.8 1.2l-1.6 1.0zM1303.4 472.2l2.3 -1.4l0.9 1.4l-2.3 1.4zM1306.8 477.4l1.6 -1.0l1.0 1.7l-1.6 1.0zM1313.7 484.4l2.3 -1.5l0.9 1.4l-2.3 1.5zM1301.3 431.7l1.5 -0.9l1.0 1.6l-1.5 0.9zM1304.7 429.7l2.5 -1.6l0.9 1.5l-2.5 1.6zM1302.7 434.9l1.8 -1.1l0.8 1.3l-1.8 1.1zM1303.3 442.2l2.0 -1.2l0.7 1.1l-2.0 1.2zM1310.4 437.6l2.2 -1.4l0.9 1.4l-2.2 1.4zM1305.9 444.2l1.4 -0.9l0.9 1.4l-1.4 0.9zM1314.8 438.4l1.8 -1.1l1.1 1.7l-1.8 1.1zM1313.8 442.5l1.9 -1.2l1.0 1.6l-1.9 1.2zM1316.5 440.9l1.9 -1.2l0.9 1.5l-1.9 1.2zM1318.8 443.8l1.7 -1.1l0.7 1.1l-1.7 1.1zM1300.6 413.2l2.3 -1.4l1.0 1.6l-2.3 1.4zM1301.7 416.6l1.9 -1.2l1.1 1.8l-1.9 1.2zM1305.8 422.2l2.1 -1.3l0.9 1.5l-2.1 1.3zM1312.4 417.9l2.5 -1.6l1.0 1.6l-2.5 1.6zM1314.8 416.6l2.2 -1.4l0.9 1.4l-2.2 1.4zM1319.8 424.0l2.4 -1.5l0.8 1.2l-2.4 1.5zM1314.5 431.3l2.0 -1.3l0.8 1.4l-2.0 1.3zM1319.7 438.7l1.9 -1.2l1.1 1.7l-1.9 1.2zM1324.8 435.7l1.8 -1.1l0.8 1.3l-1.8 1.1zM1325.8 439.1l2.4 -1.5l0.7 1.1l-2.4 1.5zM1332.9 445.0l1.6 -1.0l0.7 1.1l-1.6 1.0zM1315.9 412.8l1.9 -1.2l0.8 1.3l-1.9 1.2zM1317.6 419.0l2.3 -1.4l0.8 1.3l-2.3 1.4zM1328.2 431.5l1.4 -0.9l0.9 1.4l-1.4 0.9zM1332.8 428.7l1.6 -1.0l0.8 1.3l-1.6 1.0zM1334.8 427.5l2.5 -1.6l0.7 1.2l-2.5 1.6zM1335.0 431.3l1.8 -1.1l0.7 1.1l-1.8 1.1zM1333.6 439.6l2.4 -1.5l0.7 1.1l-2.4 1.5zM1340.1 435.2l1.4 -0.9l1.0 1.6l-1.4 0.9zM1341.0 442.8l2.3 -1.5l1.0 1.7l-2.3 1.5zM1343.7 441.4l2.2 -1.4l0.7 1.1l-2.2 1.4zM1345.8 427.0l1.8 -1.1l0.8 1.2l-1.8 1.1zM1347.6 429.5l1.9 -1.2l1.0 1.6l-1.9 1.2zM1346.9 433.4l1.4 -0.9l1.0 1.6l-1.4 0.9zM1352.5 437.4l2.2 -1.4l1.0 1.6l-2.2 1.4z"/>
<clipPath id="ts"><polygon points="1183.0,570.0 1237.0,554.0 1248.0,555.0 1259.0,553.0 1272.0,559.0 1283.0,585.0 1279.0,595.0 1269.0,598.0 1257.0,599.0 1241.0,592.0 1230.0,617.0 1243.0,640.0 1248.0,640.0 1252.0,648.0 1228.0,665.0 1229.0,676.0 1200.0,686.0 1190.0,676.0 1177.0,682.0 1168.0,674.0 1192.0,636.0 1181.0,622.0 1185.0,614.0 1175.0,606.0 1177.0,578.0"/></clipPath><g clip-path="url(#ts)"><path d="M1052.1,562.3L1293.2,449.9M1056.0,570.7L1297.1,458.3M1059.7,578.5L1300.7,466.1M1064.4,588.8L1305.5,476.3M1068.0,596.5L1309.1,484.1M1072.0,605.1L1313.1,492.7M1076.7,615.0L1317.8,502.6M1080.2,622.7L1321.3,510.3M1083.6,630.0L1324.7,517.6M1088.0,639.3L1329.0,526.8M1092.8,649.6L1333.9,537.2M1096.2,657.0L1337.3,544.6M1100.4,665.8L1341.4,553.4M1103.7,673.0L1344.8,560.5M1108.5,683.3L1349.6,570.9M1113.2,693.3L1354.2,580.9M1117.0,701.4L1358.0,589.0M1120.1,708.3L1361.2,595.8M1123.3,715.1L1364.4,602.7M1127.0,722.9L1368.0,610.5M1131.7,733.0L1372.8,620.6M1135.3,740.9L1376.4,628.5M1138.8,748.2L1379.8,635.8M1143.0,757.2L1384.1,644.8M1147.4,766.6L1388.4,654.2M1152.5,777.6L1393.5,665.2M1157.1,787.5L1398.1,675.0M1161.0,795.8L1402.0,683.4M1164.7,803.9L1405.8,691.5M1059.0,550.4L1171.4,791.5M1070.9,544.8L1183.4,785.9M1079.5,540.8L1191.9,781.9M1093.0,534.5L1205.4,775.6M1106.8,528.1L1219.3,769.2M1115.5,524.0L1228.0,765.1M1124.0,520.1L1236.5,761.1M1137.5,513.8L1249.9,754.9M1146.3,509.7L1258.7,750.8M1160.2,503.2L1272.6,744.3M1170.1,498.6L1282.5,739.7M1181.1,493.4L1293.5,734.5M1190.6,489.0L1303.0,730.1M1202.7,483.4L1315.1,724.5M1213.3,478.4L1325.7,719.5M1223.5,473.7L1335.9,714.8M1232.0,469.7L1344.4,710.8M1242.3,464.9L1354.7,706.0M1254.4,459.3L1366.8,700.4M1263.8,454.9L1376.2,696.0M1273.0,450.6L1385.4,691.7M1285.3,444.8L1397.8,685.9M1299.1,438.4L1411.5,679.5" fill="none" stroke="#b39459" stroke-width="0.9"/></g><path fill="#2b1629" d="M1189.1 567.8l1.7 -0.8l0.7 1.4l-1.7 0.8zM1179.1 581.5l2.0 -0.9l0.8 1.6l-2.0 0.9zM1180.9 578.6l2.0 -0.9l0.7 1.4l-2.0 0.9zM1184.8 569.9l1.5 -0.7l0.8 1.7l-1.5 0.7zM1186.9 575.1l2.0 -0.9l0.7 1.5l-2.0 0.9zM1187.6 568.6l1.9 -0.9l0.8 1.6l-1.9 0.9zM1189.8 573.3l1.9 -0.9l0.8 1.7l-1.9 0.9zM1191.4 576.6l1.7 -0.8l0.6 1.4l-1.7 0.8zM1190.6 568.0l2.6 -1.2l0.6 1.2l-2.6 1.2zM1192.5 571.9l2.5 -1.2l0.8 1.7l-2.5 1.2zM1193.8 574.7l2.5 -1.2l0.6 1.2l-2.5 1.2zM1199.6 569.9l1.9 -0.9l0.7 1.4l-1.9 0.9zM1202.1 567.7l2.1 -1.0l0.6 1.3l-2.1 1.0zM1208.7 567.5l2.5 -1.2l0.6 1.4l-2.5 1.2zM1216.5 561.7l2.2 -1.0l0.7 1.5l-2.2 1.0zM1220.0 560.3l2.1 -1.0l0.6 1.3l-2.1 1.0zM1232.5 557.5l1.7 -0.8l0.6 1.3l-1.7 0.8zM1177.1 582.4l1.7 -0.8l0.6 1.2l-1.7 0.8zM1176.1 580.1l1.5 -0.7l0.7 1.5l-1.5 0.7zM1179.4 587.5l1.8 -0.8l0.7 1.5l-1.8 0.8zM1180.5 590.0l1.9 -0.9l0.7 1.5l-1.9 0.9zM1185.6 584.6l1.5 -0.7l0.6 1.4l-1.5 0.7zM1188.2 582.9l2.1 -1.0l0.7 1.5l-2.1 1.0zM1191.5 575.2l2.5 -1.2l0.6 1.3l-2.5 1.2zM1190.5 572.7l2.2 -1.0l0.6 1.2l-2.2 1.0zM1194.6 574.5l2.6 -1.2l0.8 1.7l-2.6 1.2zM1200.6 578.3l1.5 -0.7l0.6 1.3l-1.5 0.7zM1200.6 571.6l1.5 -0.7l0.9 1.9l-1.5 0.7zM1202.0 567.4l1.8 -0.8l0.6 1.3l-1.8 0.8zM1206.0 568.4l2.2 -1.0l0.7 1.6l-2.2 1.0zM1208.1 573.6l2.6 -1.2l0.7 1.4l-2.6 1.2zM1207.8 564.7l1.7 -0.8l0.8 1.8l-1.7 0.8zM1212.0 565.8l2.2 -1.0l0.6 1.2l-2.2 1.0zM1214.1 570.7l2.3 -1.1l0.7 1.6l-2.3 1.1zM1220.4 568.5l2.2 -1.0l0.6 1.3l-2.2 1.0zM1221.4 570.4l2.0 -0.9l0.7 1.6l-2.0 0.9zM1223.6 560.7l2.5 -1.2l0.7 1.4l-2.5 1.2zM1225.9 565.5l2.3 -1.1l0.7 1.5l-2.3 1.1zM1226.8 559.5l2.0 -0.9l0.6 1.2l-2.0 0.9zM1229.1 564.6l2.1 -1.0l0.9 1.8l-2.1 1.0zM1231.8 562.8l1.7 -0.8l0.6 1.2l-1.7 0.8zM1240.6 559.3l2.1 -1.0l0.6 1.3l-2.1 1.0zM1249.0 555.2l2.4 -1.1l0.9 1.8l-2.4 1.1zM1177.9 599.9l2.5 -1.2l0.8 1.6l-2.5 1.2zM1180.3 597.9l2.5 -1.2l0.6 1.3l-2.5 1.2zM1180.5 589.5l1.9 -0.9l0.8 1.6l-1.9 0.9zM1183.7 597.3l2.6 -1.2l0.6 1.2l-2.6 1.2zM1187.7 597.6l1.8 -0.8l0.6 1.3l-1.8 0.8zM1186.8 588.6l2.4 -1.1l0.7 1.5l-2.4 1.1zM1189.4 593.7l2.1 -1.0l0.8 1.6l-2.1 1.0zM1189.2 585.1l2.2 -1.0l0.8 1.8l-2.2 1.0zM1196.0 591.7l2.1 -1.0l0.7 1.5l-2.1 1.0zM1199.0 590.2l2.1 -1.0l0.8 1.7l-2.1 1.0zM1199.7 591.7l2.0 -0.9l0.8 1.8l-2.0 0.9zM1199.8 583.2l1.6 -0.8l0.6 1.2l-1.6 0.8zM1202.1 589.0l2.2 -1.0l0.6 1.2l-2.2 1.0zM1203.2 591.2l2.1 -1.0l0.6 1.3l-2.1 1.0zM1205.0 580.2l1.6 -0.7l0.8 1.8l-1.6 0.7zM1208.3 588.0l2.0 -0.9l0.6 1.3l-2.0 0.9zM1207.7 579.1l1.9 -0.9l0.7 1.5l-1.9 0.9zM1210.5 578.5l2.0 -0.9l0.6 1.3l-2.0 0.9zM1212.8 583.3l2.0 -1.0l0.6 1.2l-2.0 1.0zM1216.0 582.3l2.0 -0.9l0.7 1.4l-2.0 0.9zM1216.2 574.7l1.7 -0.8l0.9 1.9l-1.7 0.8zM1218.5 580.2l2.0 -0.9l0.7 1.5l-2.0 0.9zM1219.8 583.5l2.6 -1.2l0.7 1.4l-2.6 1.2zM1219.5 574.0l1.8 -0.9l0.7 1.4l-1.8 0.9zM1221.4 570.2l1.5 -0.7l0.8 1.7l-1.5 0.7zM1227.1 576.5l2.5 -1.2l0.6 1.2l-2.5 1.2zM1228.1 569.4l1.6 -0.8l0.8 1.8l-1.6 0.8zM1230.5 575.5l2.3 -1.1l0.8 1.7l-2.3 1.1zM1231.0 568.7l2.2 -1.0l0.8 1.7l-2.2 1.0zM1234.2 567.4l2.2 -1.0l0.9 1.9l-2.2 1.0zM1233.3 564.9l1.8 -0.8l0.6 1.4l-1.8 0.8zM1240.6 573.9l2.5 -1.2l0.7 1.5l-2.5 1.2zM1238.6 561.6l2.0 -0.9l0.6 1.3l-2.0 0.9zM1242.2 569.4l2.0 -0.9l0.8 1.7l-2.0 0.9zM1245.9 561.9l2.5 -1.2l0.7 1.5l-2.5 1.2zM1248.5 559.6l1.6 -0.7l0.9 1.9l-1.6 0.7zM1250.7 565.2l2.4 -1.1l0.7 1.5l-2.4 1.1zM1251.8 559.3l2.4 -1.1l0.5 1.2l-2.4 1.1zM1253.6 563.8l2.7 -1.3l0.9 1.8l-2.7 1.3zM1255.2 566.9l2.5 -1.2l0.6 1.2l-2.5 1.2zM1254.4 557.0l2.4 -1.1l0.7 1.5l-2.4 1.1zM1257.4 562.2l1.6 -0.8l0.8 1.8l-1.6 0.8zM1258.5 564.8l1.8 -0.8l0.9 1.9l-1.8 0.8zM1258.0 556.2l2.3 -1.1l0.6 1.2l-2.3 1.1zM1179.4 602.0l1.6 -0.8l0.7 1.6l-1.6 0.8zM1182.2 600.6l2.3 -1.1l0.8 1.7l-2.3 1.1zM1192.3 608.1l2.4 -1.1l0.8 1.7l-2.4 1.1zM1194.2 604.3l2.5 -1.2l0.8 1.6l-2.5 1.2zM1195.9 607.4l2.1 -1.0l0.7 1.4l-2.1 1.0zM1198.9 605.8l1.7 -0.8l0.7 1.4l-1.7 0.8zM1198.1 596.9l1.8 -0.8l0.6 1.2l-1.8 0.8zM1196.8 594.7l2.2 -1.0l0.6 1.4l-2.2 1.0zM1200.0 601.9l2.4 -1.1l0.8 1.7l-2.4 1.1zM1200.4 595.1l2.1 -1.0l0.6 1.2l-2.1 1.0zM1199.6 593.1l1.8 -0.9l0.8 1.8l-1.8 0.9zM1203.5 593.2l1.8 -0.9l0.8 1.8l-1.8 0.9zM1202.4 590.8l1.8 -0.8l0.8 1.8l-1.8 0.8zM1209.1 597.0l1.5 -0.7l0.7 1.5l-1.5 0.7zM1209.8 590.9l1.7 -0.8l0.7 1.6l-1.7 0.8zM1211.9 596.7l2.7 -1.3l0.6 1.3l-2.7 1.3zM1212.4 589.8l2.0 -0.9l0.6 1.2l-2.0 0.9zM1217.1 593.9l2.5 -1.2l0.7 1.5l-2.5 1.2zM1217.2 587.1l2.2 -1.0l0.6 1.3l-2.2 1.0zM1216.2 585.4l2.5 -1.2l0.8 1.6l-2.5 1.2zM1219.6 591.9l1.9 -0.9l0.8 1.7l-1.9 0.9zM1221.0 586.0l1.6 -0.7l0.6 1.2l-1.6 0.7zM1219.0 583.2l2.6 -1.2l0.6 1.2l-2.6 1.2zM1222.9 591.5l2.6 -1.2l0.6 1.4l-2.6 1.2zM1224.1 594.0l2.5 -1.1l0.8 1.7l-2.5 1.1zM1223.0 584.1l2.0 -0.9l0.9 1.8l-2.0 0.9zM1226.9 592.6l2.2 -1.0l0.7 1.5l-2.2 1.0zM1225.3 581.1l1.7 -0.8l0.8 1.8l-1.7 0.8zM1229.7 590.9l1.9 -0.9l0.7 1.5l-1.9 0.9zM1228.8 582.6l2.4 -1.1l0.6 1.4l-2.4 1.1zM1232.1 589.4l2.1 -1.0l0.8 1.6l-2.1 1.0zM1234.5 579.0l2.3 -1.1l0.7 1.6l-2.3 1.1zM1240.0 582.9l2.5 -1.2l0.6 1.3l-2.5 1.2zM1244.8 583.9l1.8 -0.9l0.7 1.4l-1.8 0.9zM1244.3 574.6l1.8 -0.8l0.8 1.7l-1.8 0.8zM1246.9 580.5l2.0 -1.0l0.7 1.5l-2.0 1.0zM1248.2 583.0l1.9 -0.9l0.6 1.2l-1.9 0.9zM1249.5 579.0l1.9 -0.9l0.7 1.6l-1.9 0.9zM1250.0 572.4l1.8 -0.9l0.8 1.7l-1.8 0.9zM1249.2 570.1l1.5 -0.7l0.6 1.3l-1.5 0.7zM1252.2 577.6l2.2 -1.0l0.7 1.6l-2.2 1.0zM1253.5 580.5l2.3 -1.1l0.8 1.6l-2.3 1.1zM1252.3 571.1l2.6 -1.2l0.7 1.5l-2.6 1.2zM1255.0 576.6l2.4 -1.1l0.8 1.8l-2.4 1.1zM1258.4 568.3l1.7 -0.8l0.6 1.4l-1.7 0.8zM1257.1 565.5l1.7 -0.8l0.7 1.4l-1.7 0.8zM1260.8 574.2l2.2 -1.0l0.6 1.3l-2.2 1.0zM1267.5 574.0l2.2 -1.0l0.7 1.4l-2.2 1.0zM1189.8 618.7l1.5 -0.7l0.8 1.7l-1.5 0.7zM1192.3 617.4l2.7 -1.3l0.7 1.4l-2.7 1.3zM1191.5 607.9l2.3 -1.1l0.7 1.6l-2.3 1.1zM1194.3 613.1l1.7 -0.8l0.8 1.8l-1.7 0.8zM1195.1 607.4l2.1 -1.0l0.7 1.5l-2.1 1.0zM1197.1 611.7l2.1 -1.0l0.8 1.8l-2.1 1.0zM1197.3 606.3l2.7 -1.3l0.8 1.6l-2.7 1.3zM1199.4 610.7l2.6 -1.2l0.6 1.3l-2.6 1.2zM1201.0 613.9l2.4 -1.1l0.7 1.4l-2.4 1.1zM1202.4 610.1l2.6 -1.2l0.6 1.2l-2.6 1.2zM1203.3 611.9l2.5 -1.2l0.9 1.9l-2.5 1.2zM1202.8 603.1l2.6 -1.2l0.8 1.8l-2.6 1.2zM1205.7 607.7l1.5 -0.7l0.6 1.3l-1.5 0.7zM1208.0 606.8l2.3 -1.1l0.6 1.3l-2.3 1.1zM1207.5 598.0l2.4 -1.1l0.7 1.5l-2.4 1.1zM1211.0 605.2l2.2 -1.0l0.6 1.3l-2.2 1.0zM1213.0 595.2l2.1 -1.0l0.6 1.2l-2.1 1.0zM1216.7 602.7l1.7 -0.8l0.6 1.2l-1.7 0.8zM1216.6 596.4l2.6 -1.2l0.9 1.9l-2.6 1.2zM1215.9 594.8l2.7 -1.2l0.6 1.3l-2.7 1.2zM1220.0 602.2l1.5 -0.7l0.6 1.2l-1.5 0.7zM1218.3 593.2l2.7 -1.3l0.7 1.5l-2.7 1.3zM1221.8 600.8l2.7 -1.3l0.9 1.9l-2.7 1.3zM1223.6 603.2l1.6 -0.7l0.6 1.3l-1.6 0.7zM1221.4 591.7l1.6 -0.8l0.7 1.5l-1.6 0.8zM1226.0 601.9l1.9 -0.9l0.8 1.8l-1.9 0.9zM1223.5 590.5l2.5 -1.2l0.7 1.6l-2.5 1.2zM1228.1 591.9l2.4 -1.1l0.7 1.6l-2.4 1.1zM1227.3 589.3l1.8 -0.8l0.6 1.3l-1.8 0.8zM1233.5 595.5l2.6 -1.2l0.7 1.5l-2.6 1.2zM1235.3 597.9l1.6 -0.7l0.8 1.7l-1.6 0.7zM1233.7 586.2l1.7 -0.8l0.6 1.4l-1.7 0.8zM1236.3 584.6l1.9 -0.9l0.8 1.6l-1.9 0.9zM1240.1 585.5l2.1 -1.0l0.6 1.4l-2.1 1.0zM1239.1 583.1l1.8 -0.8l0.8 1.7l-1.8 0.8zM1245.7 582.9l1.7 -0.8l0.7 1.6l-1.7 0.8zM1247.8 588.1l2.3 -1.1l0.6 1.3l-2.3 1.1zM1248.1 582.3l2.5 -1.2l0.7 1.5l-2.5 1.2zM1254.2 579.5l1.8 -0.9l0.6 1.3l-1.8 0.9zM1252.8 577.3l2.4 -1.1l0.7 1.4l-2.4 1.1zM1256.4 584.9l2.4 -1.1l0.8 1.7l-2.4 1.1zM1257.5 587.2l2.2 -1.0l0.9 1.8l-2.2 1.0zM1256.9 578.1l2.4 -1.1l0.6 1.3l-2.4 1.1zM1259.8 583.4l1.7 -0.8l0.6 1.3l-1.7 0.8zM1260.1 576.2l1.9 -0.9l0.6 1.2l-1.9 0.9zM1264.8 579.9l2.7 -1.3l0.8 1.7l-2.7 1.3zM1268.2 579.2l2.6 -1.2l0.7 1.4l-2.6 1.2zM1275.0 578.3l2.6 -1.2l0.6 1.3l-2.6 1.2zM1186.4 622.0l2.5 -1.2l0.6 1.2l-2.5 1.2zM1189.0 627.1l2.1 -1.0l0.7 1.6l-2.1 1.0zM1189.7 620.4l1.5 -0.7l0.7 1.5l-1.5 0.7zM1187.9 617.6l2.1 -1.0l0.6 1.3l-2.1 1.0zM1191.3 618.5l2.4 -1.1l0.9 1.9l-2.4 1.1zM1190.8 616.9l1.9 -0.9l0.6 1.4l-1.9 0.9zM1194.1 624.0l2.0 -0.9l0.8 1.8l-2.0 0.9zM1195.7 627.1l1.7 -0.8l0.7 1.6l-1.7 0.8zM1195.0 618.0l2.4 -1.1l0.7 1.5l-2.4 1.1zM1194.1 615.8l2.1 -1.0l0.6 1.2l-2.1 1.0zM1197.3 622.3l1.9 -0.9l0.7 1.5l-1.9 0.9zM1198.4 625.5l2.6 -1.2l0.8 1.8l-2.6 1.2zM1198.0 615.7l1.7 -0.8l0.9 1.9l-1.7 0.8zM1200.0 621.0l2.6 -1.2l0.7 1.5l-2.6 1.2zM1201.8 624.0l2.0 -0.9l0.8 1.7l-2.0 0.9zM1200.9 614.3l2.5 -1.2l0.8 1.8l-2.5 1.2zM1203.7 620.6l2.6 -1.2l0.6 1.2l-2.6 1.2zM1204.5 622.2l2.6 -1.2l0.7 1.5l-2.6 1.2zM1203.5 611.2l1.5 -0.7l0.7 1.4l-1.5 0.7zM1207.8 621.4l2.2 -1.0l0.9 1.8l-2.2 1.0zM1207.0 611.9l2.5 -1.2l0.8 1.8l-2.5 1.2zM1205.6 609.3l2.7 -1.2l0.8 1.7l-2.7 1.2zM1210.7 619.4l2.2 -1.0l0.9 1.9l-2.2 1.0zM1208.6 608.2l2.3 -1.1l0.8 1.8l-2.3 1.1zM1212.3 616.3l2.3 -1.1l0.8 1.8l-2.3 1.1zM1211.8 607.3l1.5 -0.7l0.7 1.6l-1.5 0.7zM1216.1 617.1l2.0 -1.0l0.8 1.8l-2.0 1.0zM1214.3 605.9l2.0 -0.9l0.9 1.8l-2.0 0.9zM1217.8 613.8l2.4 -1.1l0.6 1.4l-2.4 1.1zM1218.8 616.3l2.6 -1.2l0.7 1.5l-2.6 1.2zM1221.8 614.3l2.4 -1.1l0.6 1.3l-2.4 1.1zM1221.1 604.7l2.1 -1.0l0.9 1.8l-2.1 1.0zM1225.1 613.7l2.4 -1.1l0.6 1.2l-2.4 1.1zM1227.3 609.1l1.7 -0.8l0.6 1.4l-1.7 0.8zM1227.5 601.8l2.0 -0.9l0.9 1.8l-2.0 0.9zM1230.5 601.3l1.9 -0.9l0.6 1.4l-1.9 0.9zM1229.0 598.3l2.2 -1.0l0.6 1.3l-2.2 1.0zM1235.0 595.7l2.0 -0.9l0.7 1.6l-2.0 0.9zM1246.9 593.5l2.3 -1.1l0.6 1.3l-2.3 1.1zM1250.0 592.6l1.8 -0.9l0.7 1.6l-1.8 0.9zM1252.7 590.3l1.5 -0.7l0.8 1.7l-1.5 0.7zM1255.9 589.3l1.9 -0.9l0.8 1.8l-1.9 0.9zM1255.0 587.3l1.9 -0.9l0.7 1.5l-1.9 0.9zM1258.2 593.9l1.7 -0.8l0.8 1.7l-1.7 0.8zM1258.8 588.5l2.2 -1.0l0.6 1.2l-2.2 1.0zM1257.4 585.5l2.3 -1.1l0.6 1.3l-2.3 1.1zM1260.7 592.8l2.4 -1.1l0.7 1.5l-2.4 1.1zM1262.3 595.5l1.8 -0.8l0.8 1.7l-1.8 0.8zM1261.7 586.8l2.0 -0.9l0.7 1.6l-2.0 0.9zM1265.4 594.6l1.7 -0.8l0.9 1.8l-1.7 0.8zM1267.2 583.5l2.0 -0.9l0.8 1.6l-2.0 0.9zM1266.1 582.0l2.6 -1.2l0.8 1.6l-2.6 1.2zM1269.7 588.7l2.0 -0.9l0.7 1.5l-2.0 0.9zM1270.5 582.8l1.7 -0.8l0.8 1.7l-1.7 0.8zM1273.9 590.0l1.6 -0.7l0.6 1.3l-1.6 0.7zM1278.4 578.2l1.7 -0.8l0.7 1.6l-1.7 0.8zM1277.1 576.6l2.6 -1.2l0.7 1.5l-2.6 1.2zM1280.9 583.5l1.7 -0.8l0.6 1.3l-1.7 0.8zM1191.8 625.3l2.3 -1.1l0.6 1.4l-2.3 1.1zM1194.6 623.2l1.9 -0.9l0.8 1.7l-1.9 0.9zM1198.6 624.8l2.3 -1.1l0.7 1.5l-2.3 1.1zM1201.2 629.4l1.5 -0.7l0.7 1.5l-1.5 0.7zM1202.2 632.4l2.2 -1.0l0.8 1.8l-2.2 1.0zM1200.9 623.2l2.5 -1.1l0.8 1.8l-2.5 1.1zM1199.9 621.0l2.6 -1.2l0.6 1.3l-2.6 1.2zM1205.2 631.4l1.7 -0.8l0.7 1.4l-1.7 0.8zM1204.6 621.9l1.7 -0.8l0.7 1.4l-1.7 0.8zM1206.5 617.4l1.5 -0.7l0.7 1.4l-1.5 0.7zM1210.9 628.0l2.5 -1.1l0.6 1.2l-2.5 1.1zM1210.8 619.5l2.1 -1.0l0.8 1.7l-2.1 1.0zM1209.6 616.4l1.6 -0.7l0.7 1.4l-1.6 0.7zM1214.4 626.8l1.7 -0.8l0.7 1.5l-1.7 0.8zM1213.9 617.6l1.5 -0.7l0.9 1.9l-1.5 0.7zM1216.2 622.7l1.6 -0.7l0.8 1.6l-1.6 0.7zM1215.6 614.1l2.3 -1.1l0.8 1.8l-2.3 1.1zM1219.4 614.3l1.8 -0.8l0.7 1.6l-1.8 0.8zM1218.6 613.0l2.2 -1.0l0.6 1.2l-2.2 1.0zM1225.0 618.4l1.7 -0.8l0.6 1.3l-1.7 0.8zM1226.2 620.7l1.5 -0.7l0.6 1.2l-1.5 0.7zM1227.9 617.7l2.2 -1.0l0.7 1.6l-2.2 1.0zM1228.0 610.8l2.7 -1.3l0.6 1.4l-2.7 1.3zM1229.7 606.3l2.4 -1.1l0.8 1.7l-2.4 1.1zM1260.2 595.9l2.1 -1.0l0.9 1.9l-2.1 1.0zM1258.9 593.3l2.3 -1.1l0.8 1.6l-2.3 1.1zM1265.9 592.4l1.8 -0.9l0.9 1.9l-1.8 0.9zM1264.5 590.4l2.5 -1.2l0.8 1.8l-2.5 1.2zM1272.2 589.9l1.5 -0.7l0.8 1.6l-1.5 0.7zM1277.4 593.4l1.6 -0.7l0.8 1.6l-1.6 0.7zM1180.8 652.0l2.2 -1.0l0.7 1.6l-2.2 1.0zM1186.4 648.6l2.2 -1.0l0.7 1.5l-2.2 1.0zM1187.5 642.9l2.2 -1.0l0.6 1.4l-2.2 1.0zM1189.6 641.1l2.6 -1.2l0.6 1.2l-2.6 1.2zM1193.3 648.6l2.3 -1.1l0.7 1.6l-2.3 1.1zM1194.9 645.4l2.6 -1.2l0.7 1.6l-2.6 1.2zM1194.3 636.7l2.7 -1.2l0.7 1.5l-2.7 1.2zM1198.1 643.5l1.6 -0.7l0.6 1.2l-1.6 0.7zM1198.6 637.1l1.6 -0.7l0.7 1.5l-1.6 0.7zM1196.8 634.5l2.7 -1.3l0.6 1.2l-2.7 1.3zM1200.5 642.0l2.3 -1.1l0.9 1.9l-2.3 1.1zM1203.0 632.6l2.0 -0.9l0.8 1.7l-2.0 0.9zM1206.4 639.8l1.9 -0.9l0.6 1.3l-1.9 0.9zM1206.9 633.5l2.4 -1.1l0.8 1.8l-2.4 1.1zM1209.9 632.4l2.0 -0.9l0.8 1.8l-2.0 0.9zM1214.1 627.3l2.6 -1.2l0.6 1.2l-2.6 1.2zM1224.3 624.6l2.3 -1.1l0.9 1.9l-2.3 1.1zM1172.4 670.9l1.6 -0.8l0.9 1.9l-1.6 0.8zM1174.9 669.7l2.6 -1.2l0.6 1.4l-2.6 1.2zM1177.1 665.3l1.8 -0.8l0.6 1.2l-1.8 0.8zM1178.2 668.8l2.7 -1.2l0.6 1.3l-2.7 1.2zM1177.3 659.5l2.6 -1.2l0.6 1.4l-2.6 1.2zM1181.4 667.0l1.5 -0.7l0.6 1.2l-1.5 0.7zM1178.8 655.6l2.5 -1.2l0.6 1.4l-2.5 1.2zM1182.7 663.1l1.8 -0.9l0.6 1.2l-1.8 0.9zM1183.0 656.4l1.8 -0.9l0.7 1.4l-1.8 0.9zM1181.7 653.7l1.8 -0.9l0.8 1.8l-1.8 0.9zM1184.9 661.7l2.7 -1.3l0.7 1.5l-2.7 1.3zM1185.5 655.2l2.5 -1.2l0.7 1.6l-2.5 1.2zM1190.2 650.1l2.3 -1.1l0.8 1.8l-2.3 1.1zM1193.2 648.2l1.9 -0.9l0.8 1.8l-1.9 0.9zM1200.3 648.6l1.9 -0.9l0.6 1.2l-1.9 0.9zM1199.0 646.1l2.1 -1.0l0.8 1.7l-2.1 1.0zM1203.2 647.2l2.3 -1.1l0.6 1.4l-2.3 1.1zM1204.8 643.6l2.3 -1.1l0.6 1.4l-2.3 1.1zM1208.6 651.4l2.1 -1.0l0.6 1.3l-2.1 1.0zM1212.3 651.5l1.7 -0.8l0.8 1.8l-1.7 0.8zM1234.7 638.3l2.2 -1.0l0.7 1.5l-2.2 1.0zM1168.8 673.6l2.5 -1.2l0.6 1.3l-2.5 1.2zM1172.0 671.8l2.0 -1.0l0.9 1.9l-2.0 1.0zM1174.2 676.8l2.4 -1.1l0.7 1.5l-2.4 1.1zM1175.6 679.3l2.0 -0.9l0.6 1.4l-2.0 0.9zM1181.8 677.0l1.8 -0.9l0.6 1.4l-1.8 0.9zM1181.0 667.9l2.2 -1.0l0.8 1.8l-2.2 1.0zM1179.6 665.1l2.3 -1.1l0.9 1.9l-2.3 1.1zM1183.3 665.8l2.7 -1.3l0.8 1.6l-2.7 1.3zM1186.5 671.4l1.8 -0.8l0.7 1.5l-1.8 0.8zM1187.1 673.5l2.5 -1.2l0.6 1.3l-2.5 1.2zM1186.4 664.3l1.8 -0.8l0.9 1.9l-1.8 0.8zM1185.6 662.6l1.7 -0.8l0.6 1.2l-1.7 0.8zM1193.3 671.5l2.0 -0.9l0.8 1.7l-2.0 0.9zM1211.8 663.1l1.7 -0.8l0.6 1.4l-1.7 0.8zM1210.9 653.3l2.3 -1.1l0.6 1.3l-2.3 1.1zM1209.9 650.5l1.6 -0.8l0.7 1.4l-1.6 0.8zM1217.5 659.5l2.2 -1.0l0.6 1.4l-2.2 1.0zM1220.7 659.0l2.5 -1.2l0.7 1.5l-2.5 1.2zM1225.0 652.7l2.6 -1.2l0.9 1.9l-2.6 1.2zM1226.7 655.7l2.2 -1.0l0.8 1.6l-2.2 1.0zM1228.3 651.9l2.0 -0.9l0.9 1.9l-2.0 0.9zM1230.7 650.1l2.2 -1.0l0.6 1.3l-2.2 1.0zM1234.0 648.5l2.1 -1.0l0.7 1.4l-2.1 1.0zM1236.9 647.2l2.5 -1.2l0.6 1.3l-2.5 1.2zM1238.5 649.7l1.8 -0.8l0.7 1.5l-1.8 0.8zM1241.5 648.7l2.3 -1.1l0.8 1.7l-2.3 1.1zM1240.7 639.8l2.2 -1.0l0.8 1.8l-2.2 1.0zM1245.9 643.1l2.2 -1.0l0.7 1.5l-2.2 1.0zM1246.9 645.7l2.6 -1.2l0.7 1.5l-2.6 1.2zM1174.8 679.3l2.6 -1.2l0.7 1.6l-2.6 1.2zM1173.8 676.8l2.4 -1.1l0.7 1.5l-2.4 1.1zM1178.1 677.3l2.2 -1.0l0.7 1.5l-2.2 1.0zM1180.5 673.5l1.5 -0.7l0.7 1.5l-1.5 0.7zM1183.8 674.3l2.2 -1.0l0.9 1.9l-2.2 1.0zM1188.2 669.4l2.2 -1.0l0.8 1.6l-2.2 1.0zM1193.6 679.9l1.6 -0.7l0.7 1.4l-1.6 0.7zM1191.9 670.7l2.5 -1.2l0.6 1.3l-2.5 1.2zM1202.7 672.5l2.6 -1.2l0.6 1.3l-2.6 1.2zM1205.6 670.2l2.5 -1.2l0.7 1.5l-2.5 1.2zM1211.7 668.3l2.4 -1.1l0.7 1.4l-2.4 1.1zM1212.3 660.9l2.1 -1.0l0.6 1.3l-2.1 1.0zM1214.7 665.9l1.9 -0.9l0.8 1.6l-1.9 0.9zM1216.0 668.9l2.1 -1.0l0.7 1.6l-2.1 1.0zM1215.5 660.1l2.5 -1.2l0.9 1.9l-2.5 1.2zM1218.0 664.2l1.5 -0.7l0.9 1.9l-1.5 0.7zM1223.6 662.4l2.4 -1.1l0.6 1.3l-2.4 1.1zM1229.2 659.1l2.0 -0.9l0.8 1.7l-2.0 0.9zM1232.8 658.4l1.5 -0.7l0.7 1.5l-1.5 0.7zM1231.8 649.1l1.9 -0.9l0.7 1.4l-1.9 0.9zM1235.2 656.9l2.4 -1.1l0.8 1.6l-2.4 1.1zM1238.5 648.9l2.5 -1.2l0.6 1.2l-2.5 1.2zM1240.8 645.7l2.3 -1.1l0.6 1.2l-2.3 1.1zM1243.8 643.7l1.8 -0.9l0.6 1.2l-1.8 0.9zM1247.1 644.7l2.2 -1.0l0.9 1.8l-2.2 1.0zM1195.3 676.8l2.6 -1.2l0.8 1.7l-2.6 1.2zM1198.1 682.2l2.2 -1.0l0.8 1.7l-2.2 1.0zM1198.9 675.7l1.7 -0.8l0.6 1.3l-1.7 0.8zM1201.3 674.4l2.3 -1.1l0.7 1.6l-2.3 1.1zM1203.7 679.6l2.3 -1.1l0.6 1.3l-2.3 1.1zM1204.8 673.5l1.6 -0.7l0.8 1.7l-1.6 0.7zM1208.0 672.0l1.5 -0.7l0.7 1.5l-1.5 0.7zM1210.5 670.5l2.2 -1.0l0.7 1.5l-2.2 1.0zM1209.2 667.2l1.8 -0.8l0.8 1.8l-1.8 0.8zM1213.7 669.5l2.1 -1.0l0.6 1.2l-2.1 1.0zM1216.5 667.7l1.9 -0.9l0.8 1.6l-1.9 0.9zM1218.4 672.2l2.2 -1.0l0.7 1.6l-2.2 1.0zM1219.4 666.7l1.7 -0.8l0.8 1.8l-1.7 0.8zM1221.6 671.5l1.9 -0.9l0.7 1.5l-1.9 0.9zM1221.1 662.7l1.6 -0.7l0.7 1.6l-1.6 0.7zM1224.6 664.3l2.6 -1.2l0.8 1.7l-2.6 1.2zM1230.1 661.1l1.9 -0.9l0.8 1.8l-1.9 0.9zM1236.8 654.6l2.6 -1.2l0.6 1.3l-2.6 1.2zM1200.6 681.5l2.6 -1.2l0.7 1.5l-2.6 1.2zM1205.3 682.7l1.7 -0.8l0.9 1.9l-1.7 0.8zM1210.6 679.4l2.2 -1.0l0.7 1.5l-2.2 1.0zM1213.6 678.1l1.5 -0.7l0.6 1.2l-1.5 0.7zM1226.8 669.0l2.2 -1.0l0.7 1.4l-2.2 1.0zM1173.1 665.7l1.5 -0.7l0.8 1.6l-1.5 0.7zM1169.5 673.9l2.7 -1.3l0.9 1.9l-2.7 1.3zM1175.1 671.3l2.5 -1.2l0.8 1.8l-2.5 1.2zM1178.3 670.2l1.5 -0.7l0.6 1.2l-1.5 0.7zM1171.7 676.9l1.8 -0.9l0.8 1.7l-1.8 0.9zM1179.9 673.2l1.5 -0.7l0.6 1.4l-1.5 0.7zM1173.5 679.8l2.3 -1.1l0.6 1.2l-2.3 1.1zM1181.0 676.0l2.2 -1.0l0.9 1.9l-2.2 1.0zM1176.8 665.3l2.4 -1.1l0.6 1.3l-2.4 1.1zM1181.8 662.7l2.7 -1.3l0.9 1.9l-2.7 1.3zM1179.0 671.1l2.2 -1.0l0.8 1.7l-2.2 1.0zM1184.9 668.6l1.5 -0.7l0.6 1.3l-1.5 0.7zM1180.6 673.6l1.8 -0.8l0.8 1.8l-1.8 0.8zM1181.9 676.5l2.4 -1.1l0.8 1.6l-2.4 1.1zM1179.3 677.8l2.6 -1.2l0.7 1.5l-2.6 1.2zM1187.3 673.9l2.1 -1.0l0.8 1.7l-2.1 1.0zM1185.9 648.9l1.6 -0.7l0.8 1.6l-1.6 0.7zM1188.8 647.6l1.8 -0.8l0.7 1.6l-1.8 0.8zM1182.2 653.9l2.0 -0.9l0.7 1.5l-2.0 0.9zM1179.4 655.0l1.9 -0.9l0.8 1.7l-1.9 0.9zM1184.6 659.9l2.7 -1.2l0.9 1.8l-2.7 1.2zM1182.7 661.1l1.5 -0.7l0.6 1.4l-1.5 0.7zM1190.7 671.5l1.5 -0.7l0.7 1.6l-1.5 0.7zM1193.2 677.0l2.5 -1.2l0.9 1.9l-2.5 1.2zM1198.6 674.9l1.7 -0.8l0.6 1.2l-1.7 0.8zM1194.7 679.5l1.6 -0.8l0.9 1.9l-1.6 0.8zM1199.8 677.2l1.9 -0.9l0.8 1.8l-1.9 0.9zM1205.0 682.4l2.2 -1.0l0.8 1.7l-2.2 1.0zM1176.7 586.6l2.1 -1.0l0.6 1.4l-2.1 1.0zM1174.2 601.0l2.3 -1.1l0.9 1.8l-2.3 1.1zM1179.6 598.9l1.6 -0.7l0.6 1.3l-1.6 0.7zM1175.4 604.4l2.3 -1.1l0.7 1.5l-2.3 1.1zM1177.0 607.4l1.6 -0.7l0.7 1.6l-1.6 0.7zM1187.5 617.6l2.0 -0.9l0.7 1.5l-2.0 0.9zM1184.5 623.0l2.0 -0.9l0.6 1.2l-2.0 0.9zM1188.8 620.6l2.3 -1.1l0.8 1.7l-2.3 1.1zM1192.1 619.4l2.2 -1.0l0.6 1.3l-2.2 1.0zM1190.9 623.6l2.3 -1.1l0.6 1.4l-2.3 1.1zM1186.3 628.9l1.9 -0.9l0.6 1.4l-1.9 0.9zM1188.2 631.8l2.5 -1.2l0.6 1.3l-2.5 1.2zM1193.9 629.2l1.7 -0.8l0.6 1.2l-1.7 0.8zM1195.7 628.4l2.1 -1.0l0.6 1.3l-2.1 1.0zM1189.9 634.3l1.5 -0.7l0.7 1.6l-1.5 0.7zM1194.0 632.5l2.5 -1.2l0.7 1.4l-2.5 1.2zM1195.4 635.5l2.6 -1.2l0.7 1.6l-2.6 1.2zM1192.1 640.2l2.0 -0.9l0.7 1.5l-2.0 0.9zM1193.4 643.6l2.3 -1.1l0.7 1.5l-2.3 1.1zM1195.2 646.2l2.0 -0.9l0.8 1.8l-2.0 0.9zM1200.5 643.7l2.1 -1.0l0.8 1.7l-2.1 1.0zM1200.9 647.2l2.6 -1.2l0.7 1.5l-2.6 1.2zM1203.7 646.0l2.3 -1.1l0.6 1.3l-2.3 1.1zM1206.0 651.2l1.9 -0.9l0.8 1.6l-1.9 0.9zM1208.1 653.5l1.9 -0.9l0.8 1.7l-1.9 0.9zM1209.4 656.5l1.7 -0.8l0.7 1.6l-1.7 0.8zM1210.6 659.6l1.6 -0.7l0.8 1.6l-1.6 0.7zM1211.4 662.8l2.6 -1.2l0.8 1.7l-2.6 1.2zM1204.3 672.8l1.9 -0.9l0.7 1.6l-1.9 0.9zM1211.7 669.3l1.7 -0.8l0.8 1.7l-1.7 0.8zM1214.3 668.2l2.2 -1.0l0.7 1.5l-2.2 1.0zM1212.5 672.7l2.5 -1.2l0.7 1.6l-2.5 1.2zM1214.4 675.9l2.0 -0.9l0.6 1.2l-2.0 0.9zM1218.2 677.4l2.1 -1.0l0.6 1.3l-2.1 1.0zM1178.1 574.5l2.1 -1.0l0.7 1.4l-2.1 1.0zM1176.4 581.9l1.8 -0.9l0.7 1.5l-1.8 0.9zM1185.0 581.1l2.3 -1.1l0.7 1.5l-2.3 1.1zM1185.9 583.9l2.2 -1.0l0.9 1.9l-2.2 1.0zM1180.3 590.3l1.5 -0.7l0.6 1.2l-1.5 0.7zM1184.3 588.3l2.0 -0.9l0.6 1.3l-2.0 0.9zM1185.3 590.9l2.6 -1.2l0.8 1.7l-2.6 1.2zM1182.5 595.6l1.8 -0.9l0.8 1.7l-1.8 0.9zM1179.6 597.2l2.7 -1.2l0.6 1.3l-2.7 1.2zM1184.4 601.4l2.2 -1.0l0.7 1.5l-2.2 1.0zM1182.0 602.3l2.5 -1.1l0.9 1.9l-2.5 1.1zM1191.0 602.0l1.7 -0.8l0.8 1.7l-1.7 0.8zM1191.9 605.0l2.5 -1.2l0.7 1.5l-2.5 1.2zM1193.3 607.8l2.4 -1.1l0.8 1.7l-2.4 1.1zM1195.4 610.7l2.3 -1.1l0.8 1.6l-2.3 1.1zM1195.9 613.5l2.4 -1.1l0.9 1.9l-2.4 1.1zM1190.9 619.6l1.6 -0.8l0.6 1.2l-1.6 0.8zM1200.0 615.4l2.1 -1.0l0.6 1.2l-2.1 1.0zM1195.5 623.5l1.6 -0.8l0.9 1.9l-1.6 0.8zM1200.1 621.6l1.5 -0.7l0.7 1.5l-1.5 0.7zM1203.2 620.3l1.9 -0.9l0.6 1.3l-1.9 0.9zM1197.1 626.8l1.5 -0.7l0.7 1.5l-1.5 0.7zM1193.8 628.2l1.6 -0.8l0.8 1.7l-1.6 0.8zM1197.6 630.3l2.4 -1.1l0.6 1.3l-2.4 1.1zM1202.7 628.0l2.2 -1.0l0.6 1.3l-2.2 1.0zM1200.3 636.0l2.2 -1.0l0.9 1.8l-2.2 1.0zM1205.5 633.7l2.4 -1.1l0.8 1.7l-2.4 1.1zM1208.0 632.7l2.4 -1.1l0.7 1.5l-2.4 1.1zM1202.5 638.6l1.6 -0.8l0.9 1.9l-1.6 0.8zM1207.7 636.3l1.5 -0.7l0.8 1.7l-1.5 0.7zM1203.4 641.4l1.5 -0.7l0.8 1.8l-1.5 0.7zM1200.9 642.7l2.3 -1.1l0.7 1.5l-2.3 1.1zM1204.9 644.9l2.1 -1.0l0.6 1.3l-2.1 1.0zM1202.6 645.6l1.8 -0.9l0.9 1.9l-1.8 0.9zM1206.5 647.9l1.5 -0.7l0.6 1.3l-1.5 0.7zM1212.2 648.5l2.3 -1.1l0.9 1.8l-2.3 1.1zM1214.3 651.6l2.6 -1.2l0.6 1.2l-2.6 1.2zM1210.7 656.2l2.3 -1.1l0.7 1.6l-2.3 1.1zM1210.9 659.7l2.6 -1.2l0.8 1.8l-2.6 1.2zM1218.2 659.7l1.8 -0.8l0.9 1.8l-1.8 0.8zM1221.9 661.6l2.7 -1.2l0.8 1.6l-2.7 1.2zM1215.4 668.3l1.9 -0.9l0.6 1.2l-1.9 0.9zM1216.5 671.0l2.6 -1.2l0.6 1.3l-2.6 1.2zM1214.6 671.5l2.4 -1.1l0.9 1.9l-2.4 1.1zM1222.2 668.1l2.4 -1.1l0.7 1.6l-2.4 1.1zM1225.1 667.0l1.9 -0.9l0.6 1.3l-1.9 0.9zM1217.9 673.7l2.1 -1.0l0.7 1.4l-2.1 1.0zM1215.5 674.5l2.7 -1.2l0.8 1.8l-2.7 1.2zM1223.4 671.1l2.4 -1.1l0.7 1.5l-2.4 1.1zM1226.2 669.7l1.7 -0.8l0.7 1.6l-1.7 0.8zM1188.1 571.8l1.6 -0.8l0.6 1.3l-1.6 0.8zM1186.2 576.1l2.6 -1.2l0.7 1.6l-2.6 1.2zM1196.6 571.1l1.5 -0.7l0.9 1.9l-1.5 0.7zM1190.0 577.9l2.5 -1.2l0.9 1.9l-2.5 1.2zM1191.9 580.7l1.9 -0.9l0.8 1.7l-1.9 0.9zM1199.7 577.2l2.7 -1.2l0.7 1.5l-2.7 1.2zM1193.7 583.7l2.3 -1.1l0.8 1.7l-2.3 1.1zM1201.1 580.3l2.1 -1.0l0.7 1.6l-2.1 1.0zM1195.4 586.3l1.6 -0.7l0.9 1.9l-1.6 0.7zM1196.2 589.8l2.1 -1.0l0.8 1.7l-2.1 1.0zM1194.2 591.1l1.9 -0.9l0.6 1.2l-1.9 0.9zM1203.6 586.4l2.2 -1.0l0.8 1.7l-2.2 1.0zM1197.7 592.9l1.9 -0.9l0.8 1.6l-1.9 0.9zM1202.6 590.8l1.7 -0.8l0.6 1.2l-1.7 0.8zM1196.8 596.5l2.1 -1.0l0.7 1.4l-2.1 1.0zM1200.6 598.5l1.7 -0.8l0.6 1.2l-1.7 0.8zM1205.5 596.1l2.5 -1.2l0.7 1.4l-2.5 1.2zM1201.7 601.6l1.7 -0.8l0.6 1.3l-1.7 0.8zM1206.6 599.2l2.4 -1.1l0.7 1.4l-2.4 1.1zM1202.8 604.2l2.6 -1.2l0.6 1.2l-2.6 1.2zM1207.9 601.5l1.6 -0.7l0.8 1.7l-1.6 0.7zM1209.9 604.1l1.6 -0.7l0.6 1.3l-1.6 0.7zM1205.0 609.4l2.6 -1.2l0.8 1.7l-2.6 1.2zM1210.3 607.2l1.5 -0.7l0.6 1.2l-1.5 0.7zM1206.4 612.2l2.7 -1.3l0.8 1.7l-2.7 1.3zM1213.9 615.3l2.1 -1.0l0.9 1.9l-2.1 1.0zM1208.0 621.4l2.2 -1.0l0.6 1.4l-2.2 1.0zM1211.3 623.2l1.9 -0.9l0.6 1.4l-1.9 0.9zM1216.9 620.4l2.1 -1.0l0.8 1.6l-2.1 1.0zM1210.7 626.3l2.1 -1.0l0.9 1.8l-2.1 1.0zM1220.7 621.7l2.6 -1.2l0.8 1.8l-2.6 1.2zM1219.2 626.4l1.8 -0.8l0.6 1.3l-1.8 0.8zM1222.2 625.1l2.3 -1.1l0.6 1.2l-2.3 1.1zM1231.3 644.7l2.6 -1.2l0.9 1.8l-2.6 1.2zM1222.3 652.0l1.9 -0.9l0.8 1.8l-1.9 0.9zM1229.6 648.7l2.7 -1.3l0.8 1.7l-2.7 1.3zM1232.1 647.6l1.9 -0.9l0.7 1.6l-1.9 0.9zM1225.6 654.4l2.3 -1.1l0.6 1.3l-2.3 1.1zM1234.1 650.4l1.8 -0.8l0.7 1.4l-1.8 0.8zM1227.4 656.7l1.7 -0.8l0.7 1.6l-1.7 0.8zM1225.5 657.7l1.7 -0.8l0.6 1.2l-1.7 0.8zM1232.7 654.3l1.7 -0.8l0.6 1.3l-1.7 0.8zM1228.6 659.4l1.8 -0.9l0.7 1.5l-1.8 0.9zM1225.8 660.8l2.0 -0.9l0.6 1.3l-2.0 0.9zM1234.2 657.0l2.1 -1.0l0.6 1.2l-2.1 1.0zM1197.8 567.7l2.6 -1.2l0.6 1.3l-2.6 1.2zM1203.1 565.2l2.6 -1.2l0.6 1.4l-2.6 1.2zM1197.9 575.1l2.4 -1.1l0.7 1.6l-2.4 1.1zM1208.8 570.2l2.5 -1.2l0.6 1.3l-2.5 1.2zM1213.3 582.2l2.7 -1.2l0.6 1.4l-2.7 1.2zM1206.8 588.1l2.4 -1.1l0.8 1.8l-2.4 1.1zM1211.9 586.0l2.4 -1.1l0.6 1.4l-2.4 1.1zM1208.9 591.2l1.6 -0.7l0.8 1.6l-1.6 0.7zM1206.7 592.2l2.2 -1.0l0.8 1.7l-2.2 1.0zM1213.5 589.2l2.5 -1.2l0.7 1.4l-2.5 1.2zM1216.1 588.0l2.7 -1.3l0.7 1.5l-2.7 1.3zM1215.3 592.2l2.0 -0.9l0.8 1.7l-2.0 0.9zM1211.5 598.0l2.6 -1.2l0.7 1.4l-2.6 1.2zM1213.4 600.6l2.4 -1.1l0.8 1.8l-2.4 1.1zM1211.6 601.7l1.7 -0.8l0.6 1.4l-1.7 0.8zM1218.5 598.4l2.7 -1.3l0.7 1.5l-2.7 1.3zM1220.7 597.4l1.7 -0.8l0.7 1.5l-1.7 0.8zM1220.4 601.6l2.4 -1.1l0.6 1.2l-2.4 1.1zM1217.1 606.8l1.5 -0.7l0.7 1.4l-1.5 0.7zM1221.7 604.8l1.7 -0.8l0.6 1.2l-1.7 0.8zM1224.7 603.2l1.6 -0.8l0.7 1.5l-1.6 0.8zM1218.1 609.4l1.8 -0.8l0.9 1.9l-1.8 0.8zM1218.9 612.8l1.9 -0.9l0.6 1.3l-1.9 0.9zM1224.2 610.1l2.2 -1.0l0.8 1.7l-2.2 1.0zM1226.1 613.1l1.6 -0.7l0.7 1.4l-1.6 0.7zM1221.6 618.9l1.9 -0.9l0.7 1.5l-1.9 0.9zM1226.8 616.7l1.8 -0.8l0.6 1.2l-1.8 0.8zM1238.0 639.7l2.7 -1.2l0.6 1.3l-2.7 1.2zM1239.7 638.6l2.0 -1.0l0.8 1.7l-2.0 1.0zM1231.4 645.9l2.4 -1.1l0.7 1.4l-2.4 1.1zM1240.2 645.5l2.2 -1.0l0.7 1.5l-2.2 1.0zM1237.1 650.6l1.7 -0.8l0.6 1.3l-1.7 0.8zM1234.4 651.5l1.9 -0.9l0.8 1.7l-1.9 0.9zM1242.4 648.1l1.6 -0.7l0.6 1.3l-1.6 0.7zM1243.7 651.1l1.8 -0.8l0.6 1.2l-1.8 0.8zM1208.3 562.5l2.1 -1.0l0.6 1.3l-2.1 1.0zM1210.1 564.7l2.4 -1.1l0.8 1.7l-2.4 1.1zM1207.2 566.1l1.6 -0.7l0.8 1.7l-1.6 0.7zM1215.4 562.3l2.4 -1.1l0.8 1.7l-2.4 1.1zM1218.2 561.2l1.7 -0.8l0.6 1.3l-1.7 0.8zM1211.7 568.1l1.7 -0.8l0.6 1.2l-1.7 0.8zM1209.4 568.8l1.5 -0.7l0.9 1.9l-1.5 0.7zM1216.7 565.5l2.6 -1.2l0.8 1.7l-2.6 1.2zM1217.7 568.8l2.2 -1.0l0.8 1.8l-2.2 1.0zM1220.9 567.6l1.6 -0.7l0.6 1.2l-1.6 0.7zM1214.2 574.4l1.7 -0.8l0.8 1.7l-1.7 0.8zM1220.0 571.9l2.3 -1.1l0.6 1.3l-2.3 1.1zM1221.5 571.0l2.3 -1.1l0.7 1.5l-2.3 1.1zM1213.4 578.6l1.5 -0.7l0.6 1.2l-1.5 0.7zM1223.5 573.7l2.0 -0.9l0.7 1.6l-2.0 0.9zM1222.1 577.8l1.7 -0.8l0.7 1.6l-1.7 0.8zM1221.7 588.9l1.8 -0.8l0.5 1.2l-1.8 0.8zM1226.3 586.7l1.6 -0.7l0.6 1.3l-1.6 0.7zM1220.4 592.9l2.5 -1.2l0.8 1.7l-2.5 1.2zM1227.8 589.3l1.7 -0.8l0.9 1.9l-1.7 0.8zM1221.5 596.3l1.6 -0.8l0.7 1.6l-1.6 0.8zM1229.0 593.0l2.3 -1.1l0.6 1.3l-2.3 1.1zM1231.8 591.5l2.3 -1.1l0.8 1.6l-2.3 1.1zM1224.8 598.2l2.6 -1.2l0.6 1.3l-2.6 1.2zM1223.6 601.7l2.4 -1.1l0.9 1.8l-2.4 1.1zM1228.4 602.7l1.6 -0.7l0.8 1.8l-1.6 0.7zM1245.5 646.3l2.0 -0.9l0.8 1.6l-2.0 0.9zM1248.6 648.2l2.0 -0.9l0.8 1.7l-2.0 0.9zM1219.1 559.9l1.5 -0.7l0.7 1.5l-1.5 0.7zM1216.4 560.9l2.5 -1.1l0.9 1.8l-2.5 1.1zM1224.3 557.3l2.1 -1.0l0.9 1.8l-2.1 1.0zM1220.1 562.8l2.5 -1.2l0.6 1.4l-2.5 1.2zM1225.6 560.3l1.6 -0.7l0.6 1.3l-1.6 0.7zM1226.9 563.1l1.5 -0.7l0.7 1.4l-1.5 0.7zM1230.8 564.9l1.8 -0.9l0.8 1.8l-1.8 0.9zM1225.0 571.7l1.6 -0.8l0.7 1.6l-1.6 0.8zM1226.6 574.8l2.5 -1.2l0.7 1.4l-2.5 1.2zM1231.7 572.3l2.3 -1.1l0.7 1.5l-2.3 1.1zM1234.2 570.9l1.8 -0.8l0.9 1.9l-1.8 0.8zM1225.2 578.9l2.0 -0.9l0.9 1.8l-2.0 0.9zM1233.0 575.5l2.4 -1.1l0.7 1.6l-2.4 1.1zM1236.3 577.3l2.3 -1.1l0.7 1.6l-2.3 1.1zM1230.3 583.5l2.2 -1.0l0.6 1.2l-2.2 1.0zM1231.6 586.6l1.6 -0.8l0.7 1.5l-1.6 0.8zM1238.9 586.7l1.6 -0.7l0.7 1.5l-1.6 0.7zM1229.7 558.2l2.4 -1.1l0.6 1.3l-2.4 1.1zM1233.7 560.2l2.5 -1.2l0.6 1.4l-2.5 1.2zM1235.1 562.9l1.7 -0.8l0.8 1.8l-1.7 0.8zM1241.8 563.4l2.1 -1.0l0.6 1.3l-2.1 1.0zM1242.4 566.2l2.3 -1.1l0.8 1.6l-2.3 1.1zM1237.0 572.5l1.8 -0.8l0.7 1.5l-1.8 0.8zM1244.1 569.3l2.7 -1.2l0.6 1.3l-2.7 1.2zM1247.3 567.6l1.7 -0.8l0.7 1.5l-1.7 0.8zM1246.0 571.4l2.4 -1.1l0.7 1.6l-2.4 1.1zM1248.0 570.5l1.7 -0.8l0.7 1.5l-1.7 0.8zM1241.6 577.5l2.1 -1.0l0.6 1.3l-2.1 1.0zM1247.4 574.8l1.9 -0.9l0.6 1.4l-1.9 0.9zM1251.2 576.5l2.2 -1.0l0.7 1.6l-2.2 1.0zM1242.6 584.2l2.4 -1.1l0.6 1.3l-2.4 1.1zM1249.8 580.6l1.8 -0.8l0.8 1.7l-1.8 0.8zM1252.0 579.8l2.4 -1.1l0.6 1.3l-2.4 1.1zM1246.7 585.9l1.9 -0.9l0.8 1.6l-1.9 0.9zM1251.2 583.9l2.0 -0.9l0.7 1.4l-2.0 0.9zM1245.2 590.1l1.5 -0.7l0.6 1.3l-1.5 0.7zM1253.3 586.1l1.5 -0.7l0.8 1.8l-1.5 0.7zM1249.6 591.9l1.5 -0.7l0.7 1.5l-1.5 0.7zM1246.0 593.7l2.6 -1.2l0.6 1.3l-2.6 1.2zM1254.7 589.7l1.5 -0.7l0.6 1.2l-1.5 0.7zM1249.6 595.3l2.4 -1.1l0.7 1.6l-2.4 1.1zM1258.0 591.3l1.6 -0.8l0.8 1.7l-1.6 0.8zM1251.2 555.4l1.9 -0.9l0.8 1.7l-1.9 0.9zM1253.5 554.2l2.4 -1.1l0.9 1.9l-2.4 1.1zM1247.5 561.2l2.4 -1.1l0.7 1.5l-2.4 1.1zM1244.4 562.6l2.2 -1.0l0.7 1.6l-2.2 1.0zM1252.5 558.9l2.1 -1.0l0.6 1.3l-2.1 1.0zM1246.6 565.2l1.5 -0.7l0.7 1.6l-1.5 0.7zM1256.2 560.8l2.5 -1.2l0.7 1.4l-2.5 1.2zM1248.0 568.4l1.8 -0.8l0.7 1.5l-1.8 0.8zM1256.9 567.6l1.7 -0.8l0.7 1.4l-1.7 0.8zM1252.6 572.9l2.2 -1.0l0.8 1.6l-2.2 1.0zM1254.6 575.9l1.6 -0.7l0.7 1.5l-1.6 0.7zM1259.6 573.5l2.0 -0.9l0.7 1.6l-2.0 0.9zM1262.6 572.4l1.8 -0.9l0.6 1.2l-1.8 0.9zM1261.2 576.6l2.0 -0.9l0.7 1.6l-2.0 0.9zM1263.5 575.6l1.8 -0.8l0.7 1.5l-1.8 0.8zM1261.8 580.2l2.3 -1.1l0.7 1.5l-2.3 1.1zM1258.9 585.0l1.9 -0.9l0.9 1.8l-1.9 0.9zM1263.3 583.1l2.1 -1.0l0.7 1.6l-2.1 1.0zM1265.9 581.8l2.7 -1.3l0.9 1.9l-2.7 1.3zM1267.6 584.7l2.3 -1.1l0.8 1.8l-2.3 1.1zM1263.7 597.8l2.6 -1.2l0.8 1.8l-2.6 1.2zM1256.6 561.9l2.5 -1.2l0.7 1.4l-2.5 1.2zM1260.7 570.3l2.2 -1.0l0.7 1.4l-2.2 1.0zM1267.1 577.9l2.5 -1.2l0.8 1.8l-2.5 1.2zM1272.0 575.7l2.6 -1.2l0.8 1.7l-2.6 1.2zM1269.3 580.0l1.7 -0.8l0.9 1.9l-1.7 0.8zM1277.8 579.5l2.0 -0.9l0.7 1.5l-2.0 0.9zM1276.4 583.8l1.8 -0.8l0.6 1.3l-1.8 0.8zM1273.5 588.9l2.2 -1.0l0.6 1.4l-2.2 1.0zM1278.0 586.8l1.8 -0.8l0.7 1.4l-1.8 0.8zM1273.7 592.4l2.7 -1.3l0.7 1.5l-2.7 1.3zM1273.3 596.1l2.6 -1.2l0.6 1.3l-2.6 1.2zM1275.8 574.4l2.3 -1.1l0.6 1.4l-2.3 1.1zM1277.5 577.4l1.7 -0.8l0.7 1.4l-1.7 0.8zM1278.6 580.1l1.9 -0.9l0.8 1.7l-1.9 0.9z"/>
<polygon points="1168,674 1177,682 1190,676 1184,664 1176,662" fill="#3a1f38"/>
<g fill="#2a1a2a"><rect x="1075" y="440" width="2.2" height="1.6"/><rect x="1077" y="442" width="2.2" height="1.6"/><rect x="1102" y="374" width="2.2" height="1.6"/><rect x="1104" y="377" width="2.2" height="1.6"/><rect x="1108" y="376" width="2.2" height="1.6"/><rect x="1085" y="465" width="2.2" height="1.6"/><rect x="1090" y="481" width="2.2" height="1.6"/><rect x="1046" y="466" width="2.2" height="1.6"/><rect x="1111" y="411" width="2.2" height="1.6"/><rect x="1186" y="373" width="2.2" height="1.6"/><rect x="1189" y="372" width="2.2" height="1.6"/><rect x="1193" y="374" width="2.2" height="1.6"/><rect x="1250" y="386" width="2.2" height="1.6"/><rect x="1256" y="388" width="2.2" height="1.6"/><rect x="1225" y="397" width="2.2" height="1.6"/><rect x="1315" y="387" width="2.2" height="1.6"/><rect x="1318" y="388" width="2.2" height="1.6"/><rect x="1322" y="384" width="2.2" height="1.6"/><rect x="1392" y="369" width="2.2" height="1.6"/><rect x="1434" y="388" width="2.2" height="1.6"/><rect x="1436" y="390" width="2.2" height="1.6"/><rect x="1493" y="437" width="2.2" height="1.6"/><rect x="1496" y="440" width="2.2" height="1.6"/><rect x="1580" y="485" width="2.2" height="1.6"/><rect x="1583" y="484" width="2.2" height="1.6"/><rect x="1586" y="488" width="2.2" height="1.6"/><rect x="1770" y="572" width="2.2" height="1.6"/><rect x="1785" y="572" width="2.2" height="1.6"/><rect x="1800" y="572" width="2.2" height="1.6"/><rect x="1777" y="602" width="2.2" height="1.6"/><rect x="1810" y="628" width="2.2" height="1.6"/><rect x="1820" y="635" width="2.2" height="1.6"/><rect x="1828" y="636" width="2.2" height="1.6"/><rect x="1813" y="596" width="2.2" height="1.6"/><rect x="1826" y="603" width="2.2" height="1.6"/><rect x="1040" y="572" width="2.2" height="1.6"/><rect x="1048" y="592" width="2.2" height="1.6"/><rect x="1041" y="618" width="2.2" height="1.6"/><rect x="1079" y="615" width="2.2" height="1.6"/><rect x="1102" y="618" width="2.2" height="1.6"/><rect x="1137" y="447" width="2.2" height="1.6"/><rect x="1141" y="449" width="2.2" height="1.6"/><rect x="1118" y="769" width="2.2" height="1.6"/><rect x="1433" y="743" width="2.2" height="1.6"/><rect x="1436" y="745" width="2.2" height="1.6"/><rect x="1297" y="890" width="2.2" height="1.6"/><rect x="1300" y="892" width="2.2" height="1.6"/><rect x="599" y="648" width="2.2" height="1.6"/><rect x="601" y="651" width="2.2" height="1.6"/></g>
<g fill="#1f2a7a" stroke="#111" stroke-width="0.6"><circle cx="1428" cy="632" r="2.5"/><circle cx="1435" cy="744" r="3"/><circle cx="1298" cy="891" r="3"/><circle cx="1820" cy="658" r="3"/><circle cx="1203" cy="485" r="2.5"/><circle cx="1225" cy="572" r="2.5"/></g>
</g>
<defs>
<linearGradient id="gBlue" x1="0" y1="0" x2="0" y2="1"><stop offset="0" stop-color="#88a4d8"/><stop offset="1" stop-color="#5f7fbd"/></linearGradient>
<linearGradient id="gYel" x1="0" y1="0" x2="0" y2="1"><stop offset="0" stop-color="#f6e65a"/><stop offset="1" stop-color="#eed53a"/></linearGradient>
<linearGradient id="gGreen" x1="0" y1="0" x2="0" y2="1"><stop offset="0" stop-color="#78b06a"/><stop offset="1" stop-color="#4f8a44"/></linearGradient>
<linearGradient id="gLay" x1="0" y1="0" x2="0" y2="1"><stop offset="0" stop-color="#f2f2f2"/><stop offset="1" stop-color="#c9c9c9"/></linearGradient>
<radialGradient id="gGlass" cx="0.4" cy="0.35" r="0.7"><stop offset="0" stop-color="#ffffff"/><stop offset="1" stop-color="#d8d8d8"/></radialGradient>
<radialGradient id="gGlobe" cx="0.35" cy="0.3" r="0.8"><stop offset="0" stop-color="#9fd0ff"/><stop offset="0.5" stop-color="#2a7ad8"/><stop offset="1" stop-color="#0d3a80"/></radialGradient>
</defs>
<rect x="21.6" y="38.7" width="2" height="2" fill="#a8a8a8"/><rect x="22.6" y="39.7" width="1.2" height="1.2" fill="#fff"/><rect x="24.6" y="41.6" width="2" height="2" fill="#a8a8a8"/><rect x="25.6" y="42.6" width="1.2" height="1.2" fill="#fff"/><rect x="21.6" y="44.5" width="2" height="2" fill="#a8a8a8"/><rect x="22.6" y="45.5" width="1.2" height="1.2" fill="#fff"/><rect x="24.6" y="47.4" width="2" height="2" fill="#a8a8a8"/><rect x="25.6" y="48.4" width="1.2" height="1.2" fill="#fff"/><rect x="21.6" y="50.3" width="2" height="2" fill="#a8a8a8"/><rect x="22.6" y="51.3" width="1.2" height="1.2" fill="#fff"/><rect x="24.6" y="53.199999999999996" width="2" height="2" fill="#a8a8a8"/><rect x="25.6" y="54.199999999999996" width="1.2" height="1.2" fill="#fff"/><rect x="21.6" y="56.099999999999994" width="2" height="2" fill="#a8a8a8"/><rect x="22.6" y="57.099999999999994" width="1.2" height="1.2" fill="#fff"/><rect x="24.6" y="58.99999999999999" width="2" height="2" fill="#a8a8a8"/><rect x="25.6" y="59.99999999999999" width="1.2" height="1.2" fill="#fff"/>
<g transform="translate(34,39)"><path d="M0.5,0.5 H12 L17,5.5 V21 H0.5 Z" fill="#fff" stroke="#666" stroke-width="1"/><path d="M12,0.5 V5.5 H17" fill="#e8e8e8" stroke="#666" stroke-width="1"/></g>
<g transform="translate(70,41)"><path d="M0.5,0.5 H7 L7.8,2.5 H19 V17.5 H0.5 Z" fill="#efd64a" stroke="#c2ab2a" stroke-width="0.8"/><path d="M3,5 H22 L19,17.5 H0.5 Z" fill="url(#gYel)" stroke="#c2ab2a" stroke-width="0.8"/></g>
<g transform="translate(109,38)"><rect x="0.5" y="0.5" width="19" height="20" rx="2" fill="url(#gBlue)" stroke="#4a64a0"/><rect x="3" y="1" width="14" height="9" fill="#f2f2f2" stroke="#8aa0c8" stroke-width="0.5"/><path d="M5,3.5 h10 M5,5.5 h10 M5,7.5 h10" stroke="#444" stroke-width="0.9"/><rect x="3.8" y="13" width="12" height="7" fill="#eaeaea"/><rect x="5.2" y="14.2" width="2.6" height="4.6" fill="#2d4a80"/></g>
<g transform="translate(147,38)"><rect x="0.5" y="0.5" width="19" height="20" rx="2" fill="url(#gBlue)" stroke="#4a64a0"/><rect x="3" y="1" width="14" height="9" fill="#f2f2f2" stroke="#8aa0c8" stroke-width="0.5"/><path d="M5,3.5 h10 M5,5.5 h10 M5,7.5 h10" stroke="#444" stroke-width="0.9"/><rect x="3.8" y="13" width="12" height="7" fill="#eaeaea"/><rect x="5.2" y="14.2" width="2.6" height="4.6" fill="#2d4a80"/></g>
<rect x="159" y="52" width="10" height="10" rx="1.5" fill="url(#gGreen)"/><path d="M161.5,59.5 L166.5,54.5" stroke="#fff" stroke-width="2" stroke-linecap="round"/>
<g transform="translate(183,39)"><path d="M0.5,0.5 H17 L21.5,5 V15.5 H0.5 Z" fill="#fff" stroke="#777" stroke-width="1"/><path d="M17,0.5 V5 H21.5" fill="#e0e0e0" stroke="#777" stroke-width="0.8"/></g>
<rect x="197" y="52" width="10" height="10" rx="1.5" fill="#c9a800"/><path d="M202.0,53.5 v7 M199.0,55.2 l6,3.6 M199.0,58.8 l6,-3.6" stroke="#fff" stroke-width="1.2"/>
<g transform="translate(221,39)"><path d="M0.5,0.5 H17 L21.5,5 V15.5 H0.5 Z" fill="#fff" stroke="#777" stroke-width="1"/><path d="M17,0.5 V5 H21.5" fill="#e0e0e0" stroke="#777" stroke-width="0.8"/></g>
<path d="M236.5,51.2 L243,59.8" stroke="#333" stroke-width="4.2" stroke-linecap="round"/><path d="M237.6,52.6 L242.6,59.2" stroke="#e8dc70" stroke-width="2.6" stroke-linecap="round"/><path d="M236.3,50.8 l1.5,-1.2" stroke="#111" stroke-width="2.6"/><path d="M231.2,42.3 a5.2,5.2 0 0 1 5,6.8 l0.6,1.5 -2.2,1.7 -1.2,-1 a5.2,5.2 0 0 1 -6.6,-4.6 l2.6,1.4 2.8,-1.4 0.2,-2.6 z" fill="#f0f0f0" stroke="#333" stroke-width="0.9" stroke-linejoin="round"/>
<rect x="257.8" y="38.5" width="2" height="2" fill="#a8a8a8"/><rect x="258.8" y="39.5" width="1.2" height="1.2" fill="#fff"/><rect x="260.8" y="41.4" width="2" height="2" fill="#a8a8a8"/><rect x="261.8" y="42.4" width="1.2" height="1.2" fill="#fff"/><rect x="257.8" y="44.3" width="2" height="2" fill="#a8a8a8"/><rect x="258.8" y="45.3" width="1.2" height="1.2" fill="#fff"/><rect x="260.8" y="47.199999999999996" width="2" height="2" fill="#a8a8a8"/><rect x="261.8" y="48.199999999999996" width="1.2" height="1.2" fill="#fff"/><rect x="257.8" y="50.099999999999994" width="2" height="2" fill="#a8a8a8"/><rect x="258.8" y="51.099999999999994" width="1.2" height="1.2" fill="#fff"/><rect x="260.8" y="52.99999999999999" width="2" height="2" fill="#a8a8a8"/><rect x="261.8" y="53.99999999999999" width="1.2" height="1.2" fill="#fff"/><rect x="257.8" y="55.89999999999999" width="2" height="2" fill="#a8a8a8"/><rect x="258.8" y="56.89999999999999" width="1.2" height="1.2" fill="#fff"/><rect x="260.8" y="58.79999999999999" width="2" height="2" fill="#a8a8a8"/><rect x="261.8" y="59.79999999999999" width="1.2" height="1.2" fill="#fff"/>
<path d="M278.5,60.5 L286.6,60.5 L287.4,55.7 L288.8,50.6 L288.8,44 C288.5,42.3 286.4,42.3 286.3,43.6 L286.3,46.5 L285.9,42.1 C285.5,40.3 283.1,40.3 282.9,41.8 L282.9,45.8 L282.6,40.3 C282.2,38.3 279.7,38.3 279.4,40.3 L279.3,46.2 L279.4,39.2 C279,37.3 276.5,37.3 276.3,39.2 L276.5,48.4 L274.9,45.4 C274.1,44 272,44.4 271.7,46.4 L271.9,47.6 Z" fill="#fff" stroke="#111" stroke-width="1.1" stroke-linejoin="round"/>
<path d="M306.5,38.5 H322.5 V49.5 H306.5 Z" fill="#f3ea38" stroke="#111" stroke-width="1" stroke-dasharray="1.6,1.4"/><path d="M318,38.8 L322.5,43 H320 V46.5 H316 V43 H313.5 Z M318,60.5 L313.5,56.2 H316 V53 H320 V56.2 H322.5 Z M306.5,49.8 L311,45.5 V48 H314.5 V51.5 H311 V54.2 Z M329,49.8 L324.5,45.5 V48 H321 V51.5 H324.5 V54.2 Z" fill="#7b98d0" stroke="#3f5c9a" stroke-width="0.8" stroke-linejoin="round"/>
<g><path d="M352.4026,52.797399999999996 L344.4026,60.797399999999996" stroke="#1a1a1a" stroke-width="3.4" stroke-linecap="round"/><path d="M349.7026,55.4974 L344.9026,60.297399999999996" stroke="#f0d020" stroke-width="2" stroke-linecap="round"/><circle cx="357.7" cy="47.5" r="8.2" fill="url(#gGlass)" stroke="#6a6a6a" stroke-width="1"/><path d="M357.7,42.5 v10 M352.7,47.5 h10" stroke="#4f6fb8" stroke-width="2.4"/></g>
<g><path d="M391.2026,52.797399999999996 L383.2026,60.797399999999996" stroke="#1a1a1a" stroke-width="3.4" stroke-linecap="round"/><path d="M388.50260000000003,55.4974 L383.7026,60.297399999999996" stroke="#f0d020" stroke-width="2" stroke-linecap="round"/><circle cx="396.5" cy="47.5" r="8.2" fill="url(#gGlass)" stroke="#6a6a6a" stroke-width="1"/><path d="M391.5,47.5 h10" stroke="#4f6fb8" stroke-width="2.4"/></g>
<g opacity="0.5"><path d="M429.1026,52.797399999999996 L421.1026,60.797399999999996" stroke="#1a1a1a" stroke-width="3.4" stroke-linecap="round"/><path d="M426.4026,55.4974 L421.6026,60.297399999999996" stroke="#f0d020" stroke-width="2" stroke-linecap="round"/><circle cx="434.4" cy="47.5" r="8.2" fill="url(#gGlass)" stroke="#6a6a6a" stroke-width="1"/><text x="434.4" y="50.5" font-size="8" font-weight="bold" text-anchor="middle" fill="#555" font-family="Liberation Sans">1:1</text></g>
<g><path d="M466.9026,52.59739999999999 L458.9026,60.59739999999999" stroke="#1a1a1a" stroke-width="3.4" stroke-linecap="round"/><path d="M464.2026,55.297399999999996 L459.4026,60.09739999999999" stroke="#f0d020" stroke-width="2" stroke-linecap="round"/><circle cx="472.2" cy="47.3" r="8.2" fill="url(#gGlass)" stroke="#6a6a6a" stroke-width="1"/></g>
<path d="M462,38.5 h7.5 l-2,2.2 2.5,2.5 -2.8,2.8 -2.5,-2.5 -2.7,2.5 z M481.8,38.5 h-7.5 l2,2.2 -2.5,2.5 2.8,2.8 2.5,-2.5 2.7,2.5 z M481.8,57.7 h-7.5 l2,-2.2 -2.5,-2.5 2.8,-2.8 2.5,2.5 2.7,-2.5 z" fill="#7b98d0" stroke="#3f5c9a" stroke-width="0.7"/>
<rect x="497" y="39" width="10" height="13.5" fill="#f3ea38" stroke="#111" stroke-width="1" stroke-dasharray="1.8,1.4"/>
<g><path d="M506.1026,51.8974 L498.1026,59.8974" stroke="#1a1a1a" stroke-width="3.4" stroke-linecap="round"/><path d="M503.4026,54.5974 L498.6026,59.3974" stroke="#f0d020" stroke-width="2" stroke-linecap="round"/><circle cx="511.4" cy="46.6" r="8.2" fill="url(#gGlass)" stroke="#6a6a6a" stroke-width="1"/></g>
<g opacity="0.5"><rect x="538" y="45" width="18" height="11" fill="#eee" stroke="#888"/></g><g opacity="0.5"><path d="M542.8026,51.797399999999996 L534.8026,59.797399999999996" stroke="#1a1a1a" stroke-width="3.4" stroke-linecap="round"/><path d="M540.1025999999999,54.4974 L535.3026,59.297399999999996" stroke="#f0d020" stroke-width="2" stroke-linecap="round"/><circle cx="548.1" cy="46.5" r="8.2" fill="url(#gGlass)" stroke="#6a6a6a" stroke-width="1"/></g>
<g><path d="M580.7026,51.797399999999996 L572.7026,59.797399999999996" stroke="#1a1a1a" stroke-width="3.4" stroke-linecap="round"/><path d="M578.0025999999999,54.4974 L573.2026,59.297399999999996" stroke="#f0d020" stroke-width="2" stroke-linecap="round"/><circle cx="586" cy="46.5" r="8.2" fill="url(#gGlass)" stroke="#6a6a6a" stroke-width="1"/></g>
<rect x="585" y="51" width="11" height="10.5" fill="#5a78c0" stroke="#3d5a9a" stroke-width="0.6"/><path d="M592.5,53 l-3.5,3.2 3.5,3.2" stroke="#fff" stroke-width="1.6" fill="none"/>
<g opacity="0.5"><path d="M618.6025999999999,51.797399999999996 L610.6025999999999,59.797399999999996" stroke="#1a1a1a" stroke-width="3.4" stroke-linecap="round"/><path d="M615.9025999999999,54.4974 L611.1025999999999,59.297399999999996" stroke="#f0d020" stroke-width="2" stroke-linecap="round"/><circle cx="623.9" cy="46.5" r="8.2" fill="url(#gGlass)" stroke="#6a6a6a" stroke-width="1"/></g>
<g opacity="0.55"><rect x="623" y="51" width="11" height="10.5" fill="#5a78c0"/><path d="M626.5,53 l3.5,3.2 -3.5,3.2" stroke="#fff" stroke-width="1.6" fill="none"/></g>
<path d="M651,46 a9,8 0 0 1 15,-5 l2,-3 v8 h-8 l3,-3 a5.5,5 0 0 0 -8.5,3 z M669,52 a9,8 0 0 1 -15,5 l-2,3 v-8 h8 l-3,3 a5.5,5 0 0 0 8.5,-3 z" fill="#4f84d8" stroke="#2f5fb0" stroke-width="0.6"/>
<rect x="686.5" y="38.5" width="2" height="2" fill="#a8a8a8"/><rect x="687.5" y="39.5" width="1.2" height="1.2" fill="#fff"/><rect x="689.5" y="41.4" width="2" height="2" fill="#a8a8a8"/><rect x="690.5" y="42.4" width="1.2" height="1.2" fill="#fff"/><rect x="686.5" y="44.3" width="2" height="2" fill="#a8a8a8"/><rect x="687.5" y="45.3" width="1.2" height="1.2" fill="#fff"/><rect x="689.5" y="47.199999999999996" width="2" height="2" fill="#a8a8a8"/><rect x="690.5" y="48.199999999999996" width="1.2" height="1.2" fill="#fff"/><rect x="686.5" y="50.099999999999994" width="2" height="2" fill="#a8a8a8"/><rect x="687.5" y="51.099999999999994" width="1.2" height="1.2" fill="#fff"/><rect x="689.5" y="52.99999999999999" width="2" height="2" fill="#a8a8a8"/><rect x="690.5" y="53.99999999999999" width="1.2" height="1.2" fill="#fff"/><rect x="686.5" y="55.89999999999999" width="2" height="2" fill="#a8a8a8"/><rect x="687.5" y="56.89999999999999" width="1.2" height="1.2" fill="#fff"/><rect x="689.5" y="58.79999999999999" width="2" height="2" fill="#a8a8a8"/><rect x="690.5" y="59.79999999999999" width="1.2" height="1.2" fill="#fff"/>
<circle cx="703.5" cy="46.5" r="8" fill="#a9bce2" stroke="#8fa3cc" stroke-width="0.6"/><text x="703" y="52" font-size="15" font-style="italic" font-weight="bold" fill="#fff" text-anchor="middle" font-family="Liberation Serif">i</text>
<path transform="translate(706.5,48) rotate(-22) scale(1.0)" d="M0,0 L0,13 L3,10 L5.5,15 L8,14 L5.5,9 L9.5,9 Z" fill="#fff" stroke="#555" stroke-width="0.9" stroke-linejoin="round"/>
<circle cx="748.5" cy="48" r="8.5" fill="#eee" stroke="#999" stroke-width="1" stroke-dasharray="3,1.2"/><circle cx="748.5" cy="48" r="5.2" fill="#a9bce2" stroke="#7d92bf" stroke-width="0.6"/><path d="M746.5,45 v6 l5,-3 z" fill="#fff"/>
<path transform="translate(752,50) rotate(-22) scale(1.0)" d="M0,0 L0,13 L3,10 L5.5,15 L8,14 L5.5,9 L9.5,9 Z" fill="#fff" stroke="#555" stroke-width="0.9" stroke-linejoin="round"/>
<path d="M765.5,52.5 h7 l-3.5,6 z" fill="#4a4a4a"/>
<rect x="789.5" y="38.5" width="12.5" height="13" fill="#eee48a" stroke="#cfc470" stroke-width="0.6"/><rect x="805.5" y="38.5" width="7" height="13" fill="#e6e6e6" stroke="#bbb" stroke-width="0.8"/><rect x="789.5" y="54.5" width="13" height="7" fill="#e6e6e6" stroke="#bbb" stroke-width="0.8"/>
<path transform="translate(796.5,45) rotate(-22) scale(1.1)" d="M0,0 L0,13 L3,10 L5.5,15 L8,14 L5.5,9 L9.5,9 Z" fill="#fff" stroke="#555" stroke-width="0.9" stroke-linejoin="round"/>
<path d="M815.0,52.5 h7 l-3.5,6 z" fill="#4a4a4a"/>
<rect x="836.5" y="41" width="14.5" height="15" fill="#f5eb3a" stroke="#a08e20" stroke-width="0.9" stroke-dasharray="1.8,1.2"/><rect x="846.2" y="50.9" width="10.8" height="10.7" rx="1.8" fill="#c42a1a"/><circle cx="851.6" cy="56.2" r="3.2" fill="none" stroke="#f4d0d0" stroke-width="1.2"/><path d="M849.5,58.3 l4.2,-4.2" stroke="#f4d0d0" stroke-width="1.2"/>
<rect x="882.3" y="49" width="12.4" height="12.6" fill="#eee48a" stroke="#c8b860" stroke-width="0.9" stroke-dasharray="1.2,1.2"/>
<path d="M884.2,42 C882.5,39.3 876.5,39 875.3,42.6 C874.5,45 876.3,46.5 878.3,46.8 C875.3,47 873.5,48.8 874.3,51.3 C875.3,54.5 881.5,54.5 884.5,51.5" fill="none" stroke="#8a78a4" stroke-width="1.6" stroke-linecap="round"/>
<rect x="911.5" y="40.5" width="19" height="19" fill="#f4f6fa" stroke="#8896aa" stroke-width="1"/><rect x="912" y="41" width="18" height="4.5" fill="#dde4ee"/><path d="M912,45.5 h18" stroke="#8896aa" stroke-width="0.8"/><path d="M913.5,43 h3 M918.5,43 h10 M913.5,47.7 h3 M918.5,47.7 h10 M913.5,50.6 h3 M918.5,50.6 h10 M913.5,53.5 h3 M918.5,53.5 h10 M913.5,56.4 h3 M918.5,56.4 h10" stroke="#8896aa" stroke-width="1"/>
<path d="M948.5,38 v22.5 M969.5,38 v22.5 M947,60.8 h24 M948.5,41.6 h21 M948.5,48.4 h21 M948.5,55.5 h21" stroke="#8a8a8a" stroke-width="1"/><rect x="956.4" y="39.7" width="3.8" height="3.8" transform="rotate(45 958.3 41.6)" fill="#f6dada" stroke="#d87a7a" stroke-width="0.8"/><rect x="962.4" y="39.7" width="3.8" height="3.8" transform="rotate(45 964.3 41.6)" fill="#f6dada" stroke="#d87a7a" stroke-width="0.8"/><rect x="951.4" y="46.5" width="3.8" height="3.8" transform="rotate(45 953.3 48.4)" fill="#dcefdc" stroke="#84c084" stroke-width="0.8"/><rect x="957.4" y="46.5" width="3.8" height="3.8" transform="rotate(45 959.3 48.4)" fill="#dcefdc" stroke="#84c084" stroke-width="0.8"/><rect x="951.4" y="53.6" width="3.8" height="3.8" transform="rotate(45 953.3 55.5)" fill="#dce4f2" stroke="#84a0cc" stroke-width="0.8"/><rect x="962.4" y="53.6" width="3.8" height="3.8" transform="rotate(45 964.3 55.5)" fill="#dce4f2" stroke="#84a0cc" stroke-width="0.8"/>
<path d="M994,45 h16 M994,43 v4 M1010,43 v4" stroke="#2f4a7a" stroke-width="1.2"/><rect x="992.5" y="49" width="21" height="6.5" fill="#e8e8dc" stroke="#444" stroke-width="0.9"/><path d="M995,49 v3 M998,49 v2 M1001,49 v3 M1004,49 v2 M1007,49 v3 M1010,49 v2" stroke="#444" stroke-width="0.7"/>
<path d="M1018.0,52.5 h7 l-3.5,6 z" fill="#4a4a4a"/>
<path d="M1040,40 h14 a3.5,3.5 0 0 1 3.5,3.5 v7 a3.5,3.5 0 0 1 -3.5,3.5 h-9 l-4,4 l1,-4 a3.5,3.5 0 0 1 -3.5,-3.5 v-7 a3.5,3.5 0 0 1 3.5,-3.5 z" fill="#f2e67a" stroke="#c8b438" stroke-width="1"/>
<rect x="1075.5" y="45" width="13" height="11" fill="none" stroke="#555" stroke-width="0.9" stroke-dasharray="1,1.2"/><path d="M1085,44 v-4 h2 l1,1 h2 v4 h-5 z" fill="#f0d830" stroke="#b09a20" stroke-width="0.6"/>
<rect x="1087" y="51.5" width="10" height="10" rx="1.5" fill="#c9a800"/><path d="M1092.0,53.0 v7 M1089.0,54.7 l6,3.6 M1089.0,58.3 l6,-3.6" stroke="#fff" stroke-width="1.2"/>
<rect x="1113.5" y="45" width="13" height="11" fill="none" stroke="#555" stroke-width="0.9" stroke-dasharray="1,1.2"/><path d="M1123,44 v-4 h2 l1,1 h2 v4 h-5 z" fill="#f0d830" stroke="#b09a20" stroke-width="0.6"/>
<path d="M1161.5,40.5 h19 v14 h-13 l-7,5 l3,-5 h-2 z" fill="#dde4ee" stroke="#8a96a8" stroke-width="0.8"/><text x="1171" y="52" font-size="11" font-family="Liberation Serif" text-anchor="middle" fill="#333">T</text>
<path d="M1180.5,52.5 h7 l-3.5,6 z" fill="#4a4a4a"/>
<rect x="1198" y="38.5" width="2" height="2" fill="#a8a8a8"/><rect x="1199" y="39.5" width="1.2" height="1.2" fill="#fff"/><rect x="1201" y="41.4" width="2" height="2" fill="#a8a8a8"/><rect x="1202" y="42.4" width="1.2" height="1.2" fill="#fff"/><rect x="1198" y="44.3" width="2" height="2" fill="#a8a8a8"/><rect x="1199" y="45.3" width="1.2" height="1.2" fill="#fff"/><rect x="1201" y="47.199999999999996" width="2" height="2" fill="#a8a8a8"/><rect x="1202" y="48.199999999999996" width="1.2" height="1.2" fill="#fff"/><rect x="1198" y="50.099999999999994" width="2" height="2" fill="#a8a8a8"/><rect x="1199" y="51.099999999999994" width="1.2" height="1.2" fill="#fff"/><rect x="1201" y="52.99999999999999" width="2" height="2" fill="#a8a8a8"/><rect x="1202" y="53.99999999999999" width="1.2" height="1.2" fill="#fff"/><rect x="1198" y="55.89999999999999" width="2" height="2" fill="#a8a8a8"/><rect x="1199" y="56.89999999999999" width="1.2" height="1.2" fill="#fff"/><rect x="1201" y="58.79999999999999" width="2" height="2" fill="#a8a8a8"/><rect x="1202" y="59.79999999999999" width="1.2" height="1.2" fill="#fff"/>
<rect x="1210.5" y="39.5" width="19.5" height="19.5" fill="#6f8fc8" stroke="#1f2a3a" stroke-width="1"/><rect x="1211" y="40" width="3.5" height="18.5" fill="#2a3448"/><text x="1222" y="53.5" font-size="12" fill="#fff" text-anchor="middle" font-family="Liberation Sans">?</text>
<path transform="translate(1247.5,39.5) rotate(-10) scale(1.05)" d="M0,0 L0,13 L3,10 L5.5,15 L8,14 L5.5,9 L9.5,9 Z" fill="#fff" stroke="#555" stroke-width="0.9" stroke-linejoin="round"/><text x="1255.5" y="60" font-size="17" font-weight="bold" fill="#111" font-family="Liberation Sans">?</text>
<rect x="21.6" y="75" width="2" height="2" fill="#a8a8a8"/><rect x="22.6" y="76" width="1.2" height="1.2" fill="#fff"/><rect x="24.6" y="77.9" width="2" height="2" fill="#a8a8a8"/><rect x="25.6" y="78.9" width="1.2" height="1.2" fill="#fff"/><rect x="21.6" y="80.80000000000001" width="2" height="2" fill="#a8a8a8"/><rect x="22.6" y="81.80000000000001" width="1.2" height="1.2" fill="#fff"/><rect x="24.6" y="83.70000000000002" width="2" height="2" fill="#a8a8a8"/><rect x="25.6" y="84.70000000000002" width="1.2" height="1.2" fill="#fff"/><rect x="21.6" y="86.60000000000002" width="2" height="2" fill="#a8a8a8"/><rect x="22.6" y="87.60000000000002" width="1.2" height="1.2" fill="#fff"/><rect x="24.6" y="89.50000000000003" width="2" height="2" fill="#a8a8a8"/><rect x="25.6" y="90.50000000000003" width="1.2" height="1.2" fill="#fff"/><rect x="21.6" y="92.40000000000003" width="2" height="2" fill="#a8a8a8"/><rect x="22.6" y="93.40000000000003" width="1.2" height="1.2" fill="#fff"/><rect x="24.6" y="95.30000000000004" width="2" height="2" fill="#a8a8a8"/><rect x="25.6" y="96.30000000000004" width="1.2" height="1.2" fill="#fff"/>
<g opacity="0.85"><path d="M33,97 l2,-6 l9,-16 l3,1.5 l-9,16 z" fill="#d89060" stroke="#8a6040" stroke-width="0.7"/><path d="M37,97 l2,-6 l9,-16 l3,1.5 l-9,16 z" fill="#e0a060" stroke="#8a6040" stroke-width="0.7"/></g>
<path d="M50.0,91 h7 l-3.5,6 z" fill="#4a4a4a"/>
<path d="M73,98 l1.5,-6 l10,-17 l3,1.8 l-10,17 z" fill="#f0e070" stroke="#b0a050" stroke-width="0.7"/>
<g transform="translate(108,75)" opacity="0.45"><rect x="0.5" y="0.5" width="19" height="19" rx="2" fill="url(#gBlue)" stroke="#4a64a0"/><rect x="3" y="1" width="14" height="9" fill="#f2f2f2" stroke="#8aa0c8" stroke-width="0.5"/><path d="M5,3.5 h10 M5,5.5 h10 M5,7.5 h10" stroke="#444" stroke-width="0.9"/><rect x="3.8" y="13" width="12" height="7" fill="#eaeaea"/><rect x="5.2" y="14.2" width="2.6" height="4.6" fill="#2d4a80"/></g>
<path d="M121,98 l1.5,-5 l6,-10 l2.5,1.5 l-6,10 z" fill="#e08a40" stroke="#a06020" stroke-width="0.6"/>
<path d="M147,77 c4,-2 10,1 14,-1 c4,-1 7,2 7,5 c0,4 -4,4 -8,5 c-4,1 -9,3 -12,1 c-3,-2 -4,-8 -1,-10 z" fill="#cfe0c0" stroke="#8aa080" stroke-width="0.9"/>
<rect x="158" y="87" width="10" height="10" rx="1.5" fill="#c9b030"/><path d="M163.0,88.5 v7 M160.0,90.2 l6,3.6 M160.0,93.8 l6,-3.6" stroke="#fff" stroke-width="1.2"/>
<path d="M184,77 c4,-2 10,1 14,-1 c4,-1 7,2 7,5 c0,4 -4,4 -8,5 c-4,1 -9,3 -12,1 c-3,-2 -4,-8 -1,-10 z" fill="#cfe0c0" stroke="#8aa080" stroke-width="0.9"/>
<rect x="196" y="87" width="10.5" height="10.5" fill="#7b98d0"/><path d="M198,92.5 h4 v-2.5 l3,2.5 l-3,2.5 v-2.5" stroke="#fff" stroke-width="1.4" fill="#fff"/>
<path d="M223,97 l5,-15 M228,81 h14" stroke="#777" stroke-width="0.9"/><circle cx="228" cy="81" r="2" fill="#ccc" stroke="#777" stroke-width="0.8"/><path d="M232,97 l9,-10 M233,87 l8,10" stroke="#665533" stroke-width="2"/><path d="M233,96 l8,-9" stroke="#e0b040" stroke-width="1.2"/>
<rect x="262.5" y="77.5" width="14" height="14" fill="#eee48a" stroke="#b8a84a" stroke-width="0.8" stroke-dasharray="1.5,1"/><rect x="273" y="89" width="10" height="10" rx="1" fill="#e07070"/><path d="M275.5,91.5 l5,5 M280.5,91.5 l-5,5" stroke="#fff" stroke-width="1.5"/>
<path d="M297,86 L315,91 M297,90 L315,85" stroke="#999" stroke-width="1.1"/><circle cx="318" cy="85.5" r="3" fill="none" stroke="#e07a70" stroke-width="1.4"/><circle cx="318" cy="91.5" r="3" fill="none" stroke="#e07a70" stroke-width="1.4"/>
<g opacity="0.55"><path d="M341,77.5 h7 l3,3 v12 h-10 z" fill="#fff" stroke="#777" stroke-width="0.8"/><path d="M337,80.5 h7 l3,3 v12 h-10 z" fill="#fff" stroke="#777" stroke-width="0.8"/><path d="M339,86 h6 M339,88 h6 M339,90 h6 M339,92 h6" stroke="#777" stroke-width="0.6"/></g>
<g opacity="0.6"><rect x="377.5" y="77.5" width="15" height="19" rx="1" fill="#f4ecd8" stroke="#b89050" stroke-width="0.9"/><rect x="381" y="76" width="8" height="3" fill="#ddd" stroke="#b89050" stroke-width="0.7"/><path d="M380,83 h10 M380,86 h10 M380,89 h10 M380,92 h10" stroke="#777" stroke-width="0.7"/></g>
<rect x="412.5" y="75" width="2" height="2" fill="#a8a8a8"/><rect x="413.5" y="76" width="1.2" height="1.2" fill="#fff"/><rect x="415.5" y="77.9" width="2" height="2" fill="#a8a8a8"/><rect x="416.5" y="78.9" width="1.2" height="1.2" fill="#fff"/><rect x="412.5" y="80.80000000000001" width="2" height="2" fill="#a8a8a8"/><rect x="413.5" y="81.80000000000001" width="1.2" height="1.2" fill="#fff"/><rect x="415.5" y="83.70000000000002" width="2" height="2" fill="#a8a8a8"/><rect x="416.5" y="84.70000000000002" width="1.2" height="1.2" fill="#fff"/><rect x="412.5" y="86.60000000000002" width="2" height="2" fill="#a8a8a8"/><rect x="413.5" y="87.60000000000002" width="1.2" height="1.2" fill="#fff"/><rect x="415.5" y="89.50000000000003" width="2" height="2" fill="#a8a8a8"/><rect x="416.5" y="90.50000000000003" width="1.2" height="1.2" fill="#fff"/><rect x="412.5" y="92.40000000000003" width="2" height="2" fill="#a8a8a8"/><rect x="413.5" y="93.40000000000003" width="1.2" height="1.2" fill="#fff"/><rect x="415.5" y="95.30000000000004" width="2" height="2" fill="#a8a8a8"/><rect x="416.5" y="96.30000000000004" width="1.2" height="1.2" fill="#fff"/>
<g><path d="M421,83 l5,-5 h15 v10 h-15 z" fill="#efe48e" stroke="#cdbf6a" stroke-width="0.8"/><text x="433.5" y="86.3" font-size="8.5" font-weight="bold" fill="#6a6a6a" text-anchor="middle" font-family="Liberation Sans">abc</text></g>
<rect x="458.5" y="77.5" width="19" height="19" fill="#d8e0f0" stroke="#6a8ad8" stroke-width="1"/>
<g><path d="M459,84 l5,-5 h15 v10 h-15 z" fill="#efe48e" stroke="#cdbf6a" stroke-width="0.8"/><text x="471.5" y="87.3" font-size="8.5" font-weight="bold" fill="#6a6a6a" text-anchor="middle" font-family="Liberation Sans">ab</text></g>
<circle cx="476" cy="93" r="4" fill="#b02020"/>
<g opacity="0.6"><path d="M497,84 l5,-5 h15 v10 h-15 z" fill="#efe48e" stroke="#cdbf6a" stroke-width="0.8"/><text x="509.5" y="87.3" font-size="8.5" font-weight="bold" fill="#6a6a6a" text-anchor="middle" font-family="Liberation Sans">ab</text></g><circle cx="514" cy="93" r="4" fill="#c07a7a"/>
<g><path d="M534,83 l5,-5 h15 v10 h-15 z" fill="#efe48e" stroke="#cdbf6a" stroke-width="0.8"/><text x="546.5" y="86.3" font-size="8.5" font-weight="bold" fill="#6a6a6a" text-anchor="middle" font-family="Liberation Sans">abc</text></g><ellipse cx="549" cy="94" rx="6" ry="3" fill="#fff" stroke="#777" stroke-width="0.8"/><circle cx="549" cy="94" r="1.8" fill="#4a6ab0"/>
<g opacity="0.6"><path d="M572,83 l5,-5 h15 v10 h-15 z" fill="#efe48e" stroke="#cdbf6a" stroke-width="0.8"/><text x="584.5" y="86.3" font-size="8.5" font-weight="bold" fill="#6a6a6a" text-anchor="middle" font-family="Liberation Sans">abc</text></g><rect x="583" y="87.5" width="10" height="10" fill="#8aa0d8"/><path d="M585,92.5 h3 v-2 l3,2 l-3,2 z" fill="#fff"/>
<g opacity="0.6"><path d="M610,83 l5,-5 h15 v10 h-15 z" fill="#efe48e" stroke="#cdbf6a" stroke-width="0.8"/><text x="622.5" y="86.3" font-size="8.5" font-weight="bold" fill="#6a6a6a" text-anchor="middle" font-family="Liberation Sans">abc</text></g><rect x="621" y="87.5" width="10" height="10" fill="#8aa0d8"/><circle cx="626" cy="92.5" r="2.5" fill="none" stroke="#fff" stroke-width="1.2"/>
<g opacity="0.6"><path d="M648,83 l5,-5 h15 v10 h-15 z" fill="#efe48e" stroke="#cdbf6a" stroke-width="0.8"/><text x="660.5" y="86.3" font-size="8.5" font-weight="bold" fill="#6a6a6a" text-anchor="middle" font-family="Liberation Sans">abc</text></g><rect x="659" y="87.5" width="10" height="10" fill="#e0d080"/><path d="M661,96 l6,-6" stroke="#fff" stroke-width="1.5"/>
<rect x="687.5" y="75" width="2" height="2" fill="#a8a8a8"/><rect x="688.5" y="76" width="1.2" height="1.2" fill="#fff"/><rect x="690.5" y="77.9" width="2" height="2" fill="#a8a8a8"/><rect x="691.5" y="78.9" width="1.2" height="1.2" fill="#fff"/><rect x="687.5" y="80.80000000000001" width="2" height="2" fill="#a8a8a8"/><rect x="688.5" y="81.80000000000001" width="1.2" height="1.2" fill="#fff"/><rect x="690.5" y="83.70000000000002" width="2" height="2" fill="#a8a8a8"/><rect x="691.5" y="84.70000000000002" width="1.2" height="1.2" fill="#fff"/><rect x="687.5" y="86.60000000000002" width="2" height="2" fill="#a8a8a8"/><rect x="688.5" y="87.60000000000002" width="1.2" height="1.2" fill="#fff"/><rect x="690.5" y="89.50000000000003" width="2" height="2" fill="#a8a8a8"/><rect x="691.5" y="90.50000000000003" width="1.2" height="1.2" fill="#fff"/><rect x="687.5" y="92.40000000000003" width="2" height="2" fill="#a8a8a8"/><rect x="688.5" y="93.40000000000003" width="1.2" height="1.2" fill="#fff"/><rect x="690.5" y="95.30000000000004" width="2" height="2" fill="#a8a8a8"/><rect x="691.5" y="96.30000000000004" width="1.2" height="1.2" fill="#fff"/>
<rect x="696.5" y="75" width="2" height="2" fill="#a8a8a8"/><rect x="697.5" y="76" width="1.2" height="1.2" fill="#fff"/><rect x="699.5" y="77.9" width="2" height="2" fill="#a8a8a8"/><rect x="700.5" y="78.9" width="1.2" height="1.2" fill="#fff"/><rect x="696.5" y="80.80000000000001" width="2" height="2" fill="#a8a8a8"/><rect x="697.5" y="81.80000000000001" width="1.2" height="1.2" fill="#fff"/><rect x="699.5" y="83.70000000000002" width="2" height="2" fill="#a8a8a8"/><rect x="700.5" y="84.70000000000002" width="1.2" height="1.2" fill="#fff"/><rect x="696.5" y="86.60000000000002" width="2" height="2" fill="#a8a8a8"/><rect x="697.5" y="87.60000000000002" width="1.2" height="1.2" fill="#fff"/><rect x="699.5" y="89.50000000000003" width="2" height="2" fill="#a8a8a8"/><rect x="700.5" y="90.50000000000003" width="1.2" height="1.2" fill="#fff"/><rect x="696.5" y="92.40000000000003" width="2" height="2" fill="#a8a8a8"/><rect x="697.5" y="93.40000000000003" width="1.2" height="1.2" fill="#fff"/><rect x="699.5" y="95.30000000000004" width="2" height="2" fill="#a8a8a8"/><rect x="700.5" y="96.30000000000004" width="1.2" height="1.2" fill="#fff"/>
<circle cx="720" cy="86" r="10" fill="url(#gGlobe)"/><path d="M713,80 c3,-1 5,1 6,3 c-1,3 -4,2 -5,5 c-2,-2 -2,-5 -1,-8 z M722,88 c2,-1 5,0 6,2 c-1,3 -4,5 -6,4 c-1,-2 -1,-4 0,-6 z" fill="#3a9a3a"/>
<path d="M749,78 l17,-1 l-2,5 l-17,1 z" fill="#2aa0d0" stroke="#111" stroke-width="0.9"/><path d="M748,84 l18,-1 l-2,5 l-18,1 z" fill="#f0e020" stroke="#111" stroke-width="0.9"/><path d="M749,90 l17,-1 l-2,5 l-17,1 z" fill="#30b030" stroke="#111" stroke-width="0.9"/><path d="M758,75 v23" stroke="#d02020" stroke-width="1"/>
<rect x="21" y="112" width="2" height="2" fill="#b0b0b0"/><rect x="22" y="113" width="1.2" height="1.2" fill="#fff"/><rect x="23.9" y="114.5" width="2" height="2" fill="#b0b0b0"/><rect x="24.9" y="115.5" width="1.2" height="1.2" fill="#fff"/><rect x="26.799999999999997" y="112" width="2" height="2" fill="#b0b0b0"/><rect x="27.799999999999997" y="113" width="1.2" height="1.2" fill="#fff"/><rect x="29.699999999999996" y="114.5" width="2" height="2" fill="#b0b0b0"/><rect x="30.699999999999996" y="115.5" width="1.2" height="1.2" fill="#fff"/><rect x="32.599999999999994" y="112" width="2" height="2" fill="#b0b0b0"/><rect x="33.599999999999994" y="113" width="1.2" height="1.2" fill="#fff"/><rect x="35.49999999999999" y="114.5" width="2" height="2" fill="#b0b0b0"/><rect x="36.49999999999999" y="115.5" width="1.2" height="1.2" fill="#fff"/><rect x="38.39999999999999" y="112" width="2" height="2" fill="#b0b0b0"/><rect x="39.39999999999999" y="113" width="1.2" height="1.2" fill="#fff"/><rect x="41.29999999999999" y="114.5" width="2" height="2" fill="#b0b0b0"/><rect x="42.29999999999999" y="115.5" width="1.2" height="1.2" fill="#fff"/><rect x="44.19999999999999" y="112" width="2" height="2" fill="#b0b0b0"/><rect x="45.19999999999999" y="113" width="1.2" height="1.2" fill="#fff"/><rect x="47.09999999999999" y="114.5" width="2" height="2" fill="#b0b0b0"/><rect x="48.09999999999999" y="115.5" width="1.2" height="1.2" fill="#fff"/><rect x="49.999999999999986" y="112" width="2" height="2" fill="#b0b0b0"/><rect x="50.999999999999986" y="113" width="1.2" height="1.2" fill="#fff"/><rect x="52.899999999999984" y="114.5" width="2" height="2" fill="#b0b0b0"/><rect x="53.899999999999984" y="115.5" width="1.2" height="1.2" fill="#fff"/>
<path d="M28.4,123.4 L34.6,137.8 L41.5,123.4 L47.8,123.4" stroke="#3c5580" stroke-width="1.3" fill="none"/><circle cx="28.4" cy="123.4" r="1.8" fill="#e8e8e8" stroke="#3c5580" stroke-width="1"/><circle cx="41.5" cy="123.4" r="1.8" fill="#e8e8e8" stroke="#3c5580" stroke-width="1"/><circle cx="47.8" cy="123.4" r="1.8" fill="#e8e8e8" stroke="#3c5580" stroke-width="1"/><circle cx="34.6" cy="137.8" r="1.8" fill="#e8e8e8" stroke="#3c5580" stroke-width="1"/>
<rect x="40.3" y="135.3" width="10" height="10" rx="1.5" fill="url(#gGreen)" stroke="#4a7a40" stroke-width="0.6"/><path d="M45.3,137.3 v6 M42.3,140.3 h6" stroke="#fff" stroke-width="2"/>
<rect x="26.0" y="159.0" width="6.7" height="6.6" fill="#27406e"/><rect x="32.6" y="159.0" width="6.7" height="6.6" fill="#7b98d0"/><rect x="39.2" y="159.0" width="6.7" height="6.6" fill="#27406e"/><rect x="26.0" y="165.5" width="6.7" height="6.6" fill="#7b98d0"/><rect x="32.6" y="165.5" width="6.7" height="6.6" fill="#27406e"/><rect x="39.2" y="165.5" width="6.7" height="6.6" fill="#7b98d0"/><rect x="26.0" y="172.0" width="6.7" height="6.6" fill="#27406e"/><rect x="32.6" y="172.0" width="6.7" height="6.6" fill="#7b98d0"/>
<rect x="41" y="174" width="10" height="10" rx="1.5" fill="url(#gGreen)" stroke="#4a7a40" stroke-width="0.6"/><path d="M46.0,176 v6 M43,179.0 h6" stroke="#fff" stroke-width="2"/>
<path d="M29,197 c4,-2 10,-1 13,1 c3,2 3,6 1,9 l2,1 l-3,1 c-1,2 -2,5 -5,5 c-2,0 -2,-3 -3,-6 c-2,1 -5,0 -6,-3 c-2,-3 -2,-6 1,-8 z" fill="#6f8fd0" stroke="#2f4a8a" stroke-width="1"/><path d="M34,200 c-2,3 -1,6 1,8 M39,199 c1,3 1,6 -1,8" stroke="#2f4a8a" stroke-width="0.8" fill="none"/>
<rect x="41" y="212" width="10" height="10" rx="1.5" fill="url(#gGreen)" stroke="#4a7a40" stroke-width="0.6"/><path d="M46.0,214 v6 M43,217.0 h6" stroke="#fff" stroke-width="2"/>
<path d="M26.1,258.5 C28,250 33,242 40,238 C44,236 47,235.5 48.5,235.2 C48,240 46,245 42,249 C38,252 33,254 28.5,255 Z" fill="#9db4e4" stroke="#2f4a8a" stroke-width="0.9"/><path d="M26.1,258.5 C32,250 40,242 48,235.5" fill="none" stroke="#2f4a8a" stroke-width="0.7"/><path d="M33,249 l5,-2 M36,245 l5,-2 M39,241.5 l5,-2" stroke="#5a78b8" stroke-width="0.6"/>
<rect x="41" y="249.8" width="9" height="9" rx="1.5" fill="url(#gGreen)" stroke="#4a7a40" stroke-width="0.6"/><path d="M45.5,251.8 v5 M43,254.3 h5" stroke="#fff" stroke-width="2"/>
<path d="M26.7,273 C35,273.5 45,277 49.3,284.6 C42,286 33,289 26.1,294.5 C29,287 29.5,280 26.7,273 Z" fill="#7b98d0" stroke="#1f3a6a" stroke-width="1"/><path d="M33,274 C35,280 35,286 33,291.5 M39,275.5 C41,280 41,284 39.5,289 M44.5,278.5 C46,281 46,284 45,286.5" stroke="#1f3a6a" stroke-width="0.9" fill="none"/>
<rect x="41" y="287.9" width="9" height="9" rx="1.5" fill="url(#gGreen)" stroke="#4a7a40" stroke-width="0.6"/><path d="M45.5,289.9 v5 M43,292.4 h5" stroke="#fff" stroke-width="2"/>
<ellipse cx="37.7" cy="321" rx="11.3" ry="10.3" fill="#b4c6ec" stroke="#6a86c0" stroke-width="1"/><path d="M26.4,321 h22.6 M37.7,310.7 v20.6 M28,316 h19.5 M28,326 h19.5" stroke="#e8eefa" stroke-width="0.8"/><ellipse cx="37.7" cy="321" rx="5" ry="10.3" fill="none" stroke="#e8eefa" stroke-width="0.8"/><path d="M29.5,315.5 l3,0 1,2 M33,322 l2,1 0,3 M39,315.5 l4,0 1,2 -2,2 M41,322 l3,0" stroke="#2a3a5a" stroke-width="1.4" fill="none"/>
<rect x="41" y="326" width="9" height="9" rx="1.5" fill="url(#gGreen)" stroke="#4a7a40" stroke-width="0.6"/><path d="M45.5,328 v5 M43,330.5 h5" stroke="#fff" stroke-width="2"/>
<circle cx="36" cy="358" r="9.5" fill="#5878b8" stroke="#1a2a4a" stroke-width="1.5"/><path d="M26.5,358 h19 M36,348.5 v19 M28,353 h16 M28,363 h16" stroke="#fff" stroke-width="1"/><ellipse cx="36" cy="358" rx="4" ry="9.5" fill="none" stroke="#fff" stroke-width="0.9"/>
<rect x="41" y="365" width="10" height="10" rx="1.5" fill="url(#gGreen)" stroke="#4a7a40" stroke-width="0.6"/><path d="M46.0,367 v6 M43,370.0 h6" stroke="#fff" stroke-width="2"/>
<circle cx="36" cy="396" r="9.5" fill="#b8c8ec" stroke="#5a78b8" stroke-width="1"/><path d="M26.5,396 h19 M36,386.5 v19" stroke="#fff" stroke-width="0.8"/><path d="M30,391 L35,404 L40,391 L45,391" stroke="#222" stroke-width="1" fill="none"/><circle cx="30" cy="391" r="1.3" fill="#fff" stroke="#222" stroke-width="0.7"/><circle cx="40" cy="391" r="1.3" fill="#fff" stroke="#222" stroke-width="0.7"/><circle cx="35" cy="404" r="1.3" fill="#fff" stroke="#222" stroke-width="0.7"/>
<rect x="41" y="403" width="10" height="10" rx="1.5" fill="url(#gGreen)" stroke="#4a7a40" stroke-width="0.6"/><path d="M46.0,405 v6 M43,408.0 h6" stroke="#fff" stroke-width="2"/>
<path d="M33,427 c3,-2 7,0 6,4 c-1,4 -4,7 -8,9 c3,-3 4,-5 3,-7 c-2,0 -3,-4 -1,-6 z" fill="#4a6ab0" stroke="#2f4a8a" stroke-width="0.8"/>
<rect x="41" y="441" width="10" height="10" rx="1.5" fill="url(#gGreen)" stroke="#4a7a40" stroke-width="0.6"/><path d="M46.0,443 v6 M43,446.0 h6" stroke="#fff" stroke-width="2"/>
<path d="M28,462 L34,476 L40,462 L46,462" stroke="#3c5580" stroke-width="1.2" fill="none"/><circle cx="28" cy="462" r="1.6" fill="#e8e8e8" stroke="#3c5580" stroke-width="0.9"/><circle cx="40" cy="462" r="1.6" fill="#e8e8e8" stroke="#3c5580" stroke-width="0.9"/><circle cx="46" cy="462" r="1.6" fill="#e8e8e8" stroke="#3c5580" stroke-width="0.9"/><circle cx="34" cy="476" r="1.6" fill="#e8e8e8" stroke="#3c5580" stroke-width="0.9"/>
<rect x="41" y="474" width="9" height="9" rx="1.5" fill="#c9a800"/><path d="M45.5,475.0 v7 M42.5,476.7 l6,3.6 M42.5,480.3 l6,-3.6" stroke="#fff" stroke-width="1.2"/>
<path d="M52.5,476.5 h7 l-3.5,6 z" fill="#4a4a4a"/>
<rect x="27.5" y="503" width="19" height="19" fill="#eee" stroke="#aaa" stroke-width="0.9"/><rect x="41" y="516" width="9" height="7" rx="1.5" fill="#e8a0a0"/><path d="M43,519.5 h5" stroke="#fff" stroke-width="1.5"/>
<rect x="21" y="538" width="2" height="2" fill="#b0b0b0"/><rect x="22" y="539" width="1.2" height="1.2" fill="#fff"/><rect x="23.9" y="540.5" width="2" height="2" fill="#b0b0b0"/><rect x="24.9" y="541.5" width="1.2" height="1.2" fill="#fff"/><rect x="26.799999999999997" y="538" width="2" height="2" fill="#b0b0b0"/><rect x="27.799999999999997" y="539" width="1.2" height="1.2" fill="#fff"/><rect x="29.699999999999996" y="540.5" width="2" height="2" fill="#b0b0b0"/><rect x="30.699999999999996" y="541.5" width="1.2" height="1.2" fill="#fff"/><rect x="32.599999999999994" y="538" width="2" height="2" fill="#b0b0b0"/><rect x="33.599999999999994" y="539" width="1.2" height="1.2" fill="#fff"/><rect x="35.49999999999999" y="540.5" width="2" height="2" fill="#b0b0b0"/><rect x="36.49999999999999" y="541.5" width="1.2" height="1.2" fill="#fff"/><rect x="38.39999999999999" y="538" width="2" height="2" fill="#b0b0b0"/><rect x="39.39999999999999" y="539" width="1.2" height="1.2" fill="#fff"/><rect x="41.29999999999999" y="540.5" width="2" height="2" fill="#b0b0b0"/><rect x="42.29999999999999" y="541.5" width="1.2" height="1.2" fill="#fff"/><rect x="44.19999999999999" y="538" width="2" height="2" fill="#b0b0b0"/><rect x="45.19999999999999" y="539" width="1.2" height="1.2" fill="#fff"/><rect x="47.09999999999999" y="540.5" width="2" height="2" fill="#b0b0b0"/><rect x="48.09999999999999" y="541.5" width="1.2" height="1.2" fill="#fff"/><rect x="49.999999999999986" y="538" width="2" height="2" fill="#b0b0b0"/><rect x="50.999999999999986" y="539" width="1.2" height="1.2" fill="#fff"/><rect x="52.899999999999984" y="540.5" width="2" height="2" fill="#b0b0b0"/><rect x="53.899999999999984" y="541.5" width="1.2" height="1.2" fill="#fff"/>
<circle cx="71.8" cy="116" r="6.5" fill="#3c3c3c"/><path d="M69.3,113.5 l5,5 M74.3,113.5 l-5,5" stroke="#fff" stroke-width="1.6"/>
<circle cx="92" cy="116" r="6.5" fill="#3c3c3c"/><rect x="88.5" y="115" width="5" height="4" fill="none" stroke="#fff" stroke-width="0.9"/><path d="M90.5,115 v-2 h5 v4 h-2" fill="none" stroke="#fff" stroke-width="0.9"/>
<path d="M70,137 l7.5,4.5 l-7.5,4.5 z" fill="#8a8a8a"/><rect x="90.5" y="138.5" width="13" height="10" rx="2" fill="#f7f7f7" stroke="#cfcfcf" stroke-width="0.9"/><path d="M93.2,141 l4,4 l7.2,-11.2" fill="none" stroke="#8c8c8c" stroke-width="2.1"/><path d="M117.5,139 c0.5,-3 4,-3 7,-1.5 c2,1 4,0.5 6,-1.5 c2,-1 2.5,2 2,4.5 c-0.5,2 -0.5,3 0,4.5 c0.3,2 -1.5,2 -3,1 c-2,-1.5 -4,-1 -6,0.5 c-2,1.5 -5,2 -5.8,0 c-0.6,-2.5 -0.6,-5 -0.2,-7.5 z" fill="url(#gLay)" stroke="#8a8a8a" stroke-width="0.8"/>
<path d="M70,157 l7.5,4.5 l-7.5,4.5 z" fill="#8a8a8a"/><rect x="90.5" y="158.5" width="13" height="10" rx="2" fill="#f7f7f7" stroke="#cfcfcf" stroke-width="0.9"/><path d="M93.2,161 l4,4 l7.2,-11.2" fill="none" stroke="#8c8c8c" stroke-width="2.1"/><path d="M118,160.5 L122,168 L127,159 L131,157.5" fill="none" stroke="#8a8a8a" stroke-width="0.7"/><circle cx="118" cy="160.5" r="0.9" fill="#fff" stroke="#777" stroke-width="0.5"/><circle cx="122" cy="168" r="0.9" fill="#fff" stroke="#777" stroke-width="0.5"/><circle cx="127" cy="159" r="0.9" fill="#fff" stroke="#777" stroke-width="0.5"/><circle cx="131" cy="157.5" r="0.9" fill="#fff" stroke="#777" stroke-width="0.5"/>
<path d="M70,177 l7.5,4.5 l-7.5,4.5 z" fill="#8a8a8a"/><rect x="90.5" y="178.5" width="13" height="10" rx="2" fill="#f7f7f7" stroke="#cfcfcf" stroke-width="0.9"/><path d="M93.2,181 l4,4 l7.2,-11.2" fill="none" stroke="#8c8c8c" stroke-width="2.1"/><circle cx="120.5" cy="187" r="0.9" fill="#fff" stroke="#777" stroke-width="0.5"/><circle cx="122" cy="182" r="0.9" fill="#fff" stroke="#777" stroke-width="0.5"/><circle cx="129" cy="179.5" r="0.9" fill="#fff" stroke="#777" stroke-width="0.5"/>
<path d="M70,197 l7.5,4.5 l-7.5,4.5 z" fill="#8a8a8a"/><rect x="90.5" y="198.5" width="13" height="10" rx="2" fill="#f7f7f7" stroke="#cfcfcf" stroke-width="0.9"/><path d="M93.2,201 l4,4 l7.2,-11.2" fill="none" stroke="#8c8c8c" stroke-width="2.1"/><path d="M118,200.5 L122,208 L127,199 L131,197.5" fill="none" stroke="#8a8a8a" stroke-width="0.7"/><circle cx="118" cy="200.5" r="0.9" fill="#fff" stroke="#777" stroke-width="0.5"/><circle cx="122" cy="208" r="0.9" fill="#fff" stroke="#777" stroke-width="0.5"/><circle cx="127" cy="199" r="0.9" fill="#fff" stroke="#777" stroke-width="0.5"/><circle cx="131" cy="197.5" r="0.9" fill="#fff" stroke="#777" stroke-width="0.5"/>
<path d="M70,217 l7.5,4.5 l-7.5,4.5 z" fill="#8a8a8a"/><rect x="90.5" y="218.5" width="13" height="10" rx="2" fill="#f7f7f7" stroke="#cfcfcf" stroke-width="0.9"/><path d="M93.2,221 l4,4 l7.2,-11.2" fill="none" stroke="#8c8c8c" stroke-width="2.1"/><path d="M117.5,219 c0.5,-3 4,-3 7,-1.5 c2,1 4,0.5 6,-1.5 c2,-1 2.5,2 2,4.5 c-0.5,2 -0.5,3 0,4.5 c0.3,2 -1.5,2 -3,1 c-2,-1.5 -4,-1 -6,0.5 c-2,1.5 -5,2 -5.8,0 c-0.6,-2.5 -0.6,-5 -0.2,-7.5 z" fill="url(#gLay)" stroke="#8a8a8a" stroke-width="0.8"/>
<path d="M70,237 l7.5,4.5 l-7.5,4.5 z" fill="#8a8a8a"/><rect x="90.5" y="238.5" width="13" height="10" rx="2" fill="#f7f7f7" stroke="#cfcfcf" stroke-width="0.9"/><path d="M93.2,241 l4,4 l7.2,-11.2" fill="none" stroke="#8c8c8c" stroke-width="2.1"/><path d="M117.5,239 c0.5,-3 4,-3 7,-1.5 c2,1 4,0.5 6,-1.5 c2,-1 2.5,2 2,4.5 c-0.5,2 -0.5,3 0,4.5 c0.3,2 -1.5,2 -3,1 c-2,-1.5 -4,-1 -6,0.5 c-2,1.5 -5,2 -5.8,0 c-0.6,-2.5 -0.6,-5 -0.2,-7.5 z" fill="url(#gLay)" stroke="#8a8a8a" stroke-width="0.8"/>
<ellipse cx="1160" cy="1052" rx="5" ry="6.5" fill="#fff" stroke="#111" stroke-width="1.5"/><path d="M1157,1046 l3,6 M1163,1046 l-3,6" stroke="#111" stroke-width="1"/><circle cx="1161" cy="1055" r="1.5" fill="#111"/>
<path d="M1700,1052 l3,3.5 l3,-3.5 z" fill="#555"/>
<path d="M1722,1059 c2,-4 6,-10 12,-14 c-2,6 -5,12 -10,15 z" fill="#777"/><circle cx="1723" cy="1047" r="3.2" fill="none" stroke="#c83020" stroke-width="1.2"/><path d="M1721,1049 l4.5,-4.5" stroke="#c83020" stroke-width="1.2"/>
<path d="M1746,1049.5 l3,4 l6,-10" fill="none" stroke="#222" stroke-width="2"/>
<circle cx="1898" cy="1052" r="6" fill="none" stroke="#777" stroke-width="1.6"/><ellipse cx="1898" cy="1052" rx="2.5" ry="6" fill="none" stroke="#777" stroke-width="1.2"/><path d="M1892,1052 h12" stroke="#777" stroke-width="1.2"/>
<path d="M1922,1066 l10,-10 M1926,1066 l6,-6 M1930,1066 l2,-2" stroke="#555" stroke-width="0.9"/>
</svg>
</body></html>
